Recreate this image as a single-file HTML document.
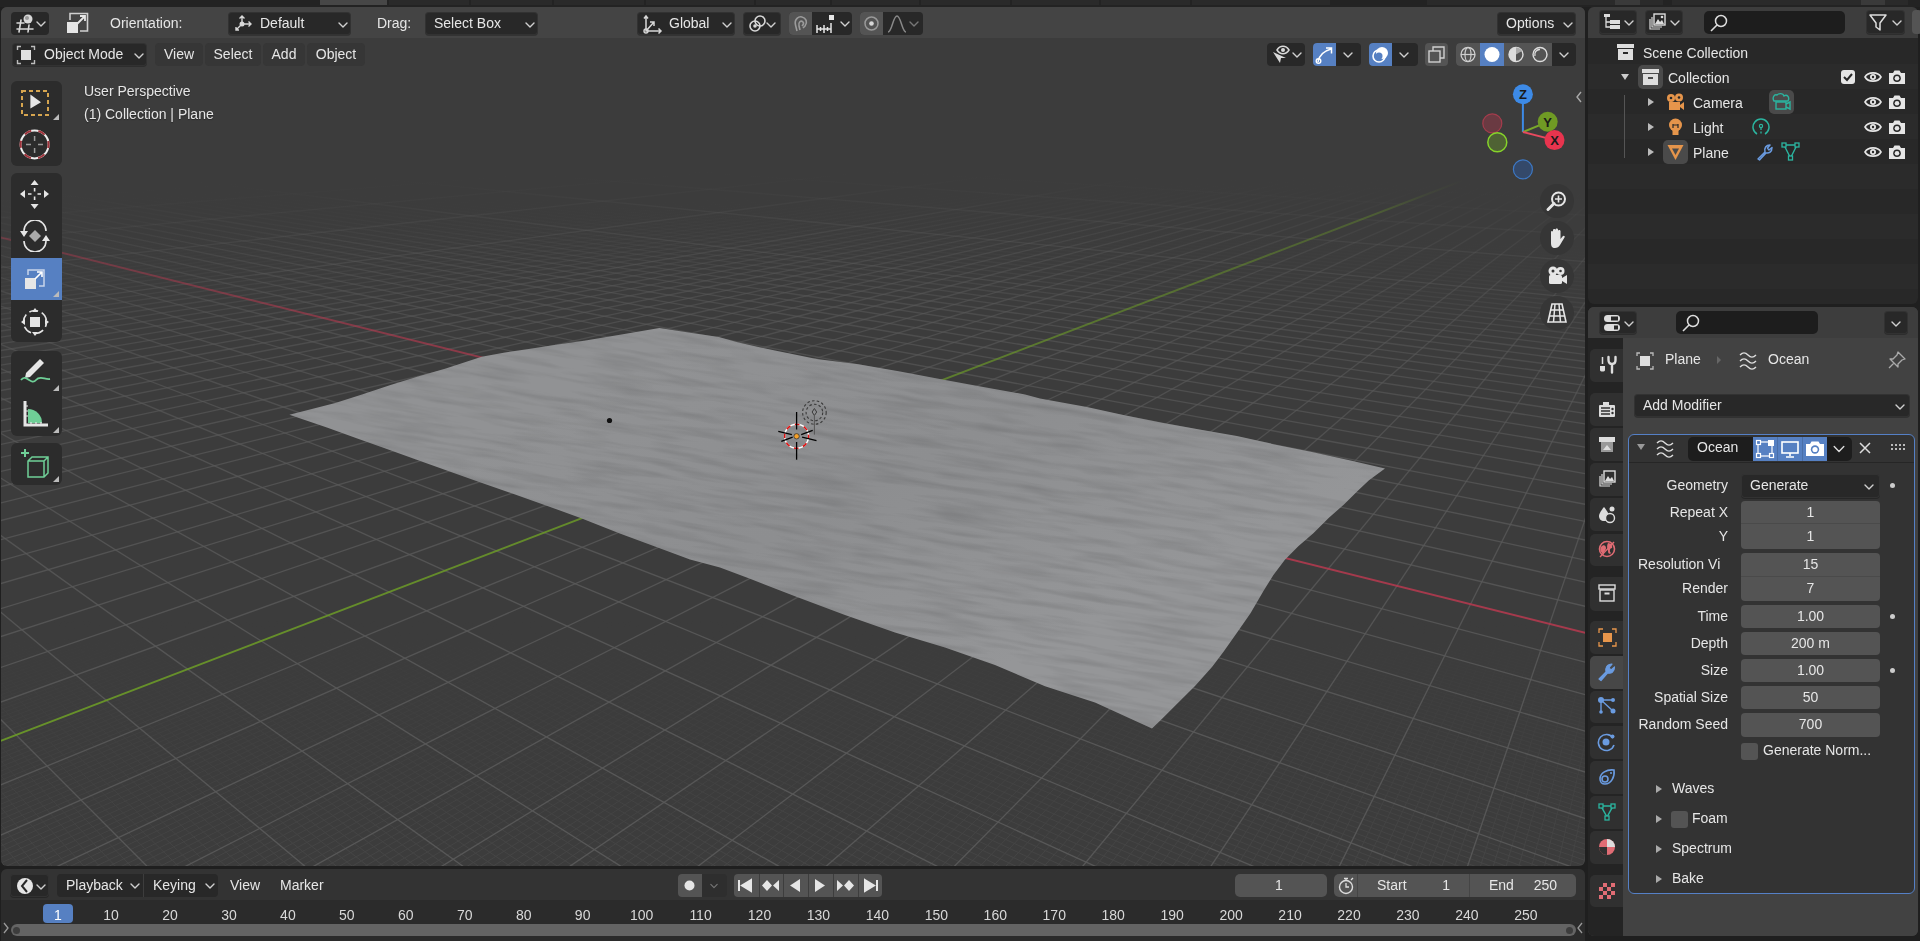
<!DOCTYPE html><html><head><meta charset="utf-8"><style>
*{box-sizing:border-box;margin:0;padding:0}
html,body{width:1920px;height:941px;overflow:hidden;background:#1f1f1f;font-family:"Liberation Sans",sans-serif;font-size:14px;color:#e6e6e6}
.a{position:absolute}
.t{white-space:nowrap;line-height:20px;height:20px;transform:translateZ(0)}
</style></head><body><div class="a" style="left:0px;top:0px;width:1920px;height:7px;background:#232323;border-radius:0px;"></div><div class="a" style="left:320px;top:0px;width:67px;height:5px;background:#474747;border-radius:0px;"></div><div class="a" style="left:389px;top:0px;width:80px;height:5px;background:#2a2a2a;border-radius:0px;"></div><div class="a" style="left:471px;top:0px;width:81px;height:5px;background:#2a2a2a;border-radius:0px;"></div><div class="a" style="left:554px;top:0px;width:90px;height:5px;background:#2a2a2a;border-radius:0px;"></div><div class="a" style="left:646px;top:0px;width:108px;height:5px;background:#2a2a2a;border-radius:0px;"></div><div class="a" style="left:756px;top:0px;width:74px;height:5px;background:#2a2a2a;border-radius:0px;"></div><div class="a" style="left:832px;top:0px;width:87px;height:5px;background:#2a2a2a;border-radius:0px;"></div><div class="a" style="left:921px;top:0px;width:89px;height:5px;background:#2a2a2a;border-radius:0px;"></div><div class="a" style="left:1012px;top:0px;width:87px;height:5px;background:#2a2a2a;border-radius:0px;"></div><div class="a" style="left:1101px;top:0px;width:89px;height:5px;background:#2a2a2a;border-radius:0px;"></div><div class="a" style="left:1192px;top:0px;width:138px;height:5px;background:#2a2a2a;border-radius:0px;"></div><div class="a" style="left:1427px;top:0px;width:236px;height:5px;background:#2a2a2a;border-radius:0px;"></div><div class="a" style="left:1615px;top:0px;width:25px;height:5px;background:#3a3a3a;border-radius:0px;"></div><div class="a" style="left:1672px;top:0px;width:236px;height:5px;background:#2a2a2a;border-radius:0px;"></div><div class="a" style="left:1861px;top:0px;width:24px;height:5px;background:#3a3a3a;border-radius:0px;"></div><div class="a" style="left:1px;top:7px;width:1584px;height:859px;background:#3c3c3c;border-radius:6px;overflow:hidden"><div class="a" style="left:-1px;top:-7px;width:1920px;height:941px"><svg width="1920" height="941" style="position:absolute;left:0;top:0"><defs><linearGradient id="g1" gradientUnits="userSpaceOnUse" x1="-48.0" y1="204.9" x2="837.1" y2="141.0"><stop offset="0.000" stop-color="#585858" stop-opacity="0.022"/><stop offset="0.221" stop-color="#585858" stop-opacity="0.008"/><stop offset="0.398" stop-color="#585858" stop-opacity="0.000"/><stop offset="0.544" stop-color="#585858" stop-opacity="0.000"/><stop offset="0.665" stop-color="#585858" stop-opacity="0.000"/><stop offset="0.768" stop-color="#585858" stop-opacity="0.000"/><stop offset="0.856" stop-color="#585858" stop-opacity="0.000"/><stop offset="0.933" stop-color="#585858" stop-opacity="0.000"/><stop offset="1.000" stop-color="#585858" stop-opacity="0.000"/></linearGradient><linearGradient id="g2" gradientUnits="userSpaceOnUse" x1="-46.4" y1="221.6" x2="905.0" y2="143.9"><stop offset="0.000" stop-color="#585858" stop-opacity="0.104"/><stop offset="0.235" stop-color="#585858" stop-opacity="0.069"/><stop offset="0.417" stop-color="#585858" stop-opacity="0.031"/><stop offset="0.563" stop-color="#585858" stop-opacity="0.004"/><stop offset="0.682" stop-color="#585858" stop-opacity="0.000"/><stop offset="0.781" stop-color="#585858" stop-opacity="0.000"/><stop offset="0.866" stop-color="#585858" stop-opacity="0.000"/><stop offset="0.938" stop-color="#585858" stop-opacity="0.000"/><stop offset="1.000" stop-color="#585858" stop-opacity="0.000"/></linearGradient><linearGradient id="g3" gradientUnits="userSpaceOnUse" x1="-48.9" y1="243.6" x2="979.3" y2="147.1"><stop offset="0.000" stop-color="#585858" stop-opacity="0.230"/><stop offset="0.252" stop-color="#585858" stop-opacity="0.179"/><stop offset="0.440" stop-color="#585858" stop-opacity="0.112"/><stop offset="0.586" stop-color="#585858" stop-opacity="0.048"/><stop offset="0.702" stop-color="#585858" stop-opacity="0.006"/><stop offset="0.797" stop-color="#585858" stop-opacity="0.000"/><stop offset="0.876" stop-color="#585858" stop-opacity="0.000"/><stop offset="0.943" stop-color="#585858" stop-opacity="0.000"/><stop offset="1.000" stop-color="#585858" stop-opacity="0.000"/></linearGradient><linearGradient id="g4" gradientUnits="userSpaceOnUse" x1="-49.5" y1="248.8" x2="995.1" y2="147.7"><stop offset="0.000" stop-color="#585858" stop-opacity="0.014"/><stop offset="0.256" stop-color="#585858" stop-opacity="0.002"/><stop offset="0.446" stop-color="#585858" stop-opacity="0.000"/><stop offset="0.591" stop-color="#585858" stop-opacity="0.000"/><stop offset="0.707" stop-color="#585858" stop-opacity="0.000"/><stop offset="0.801" stop-color="#585858" stop-opacity="0.000"/><stop offset="0.879" stop-color="#585858" stop-opacity="0.000"/><stop offset="0.944" stop-color="#585858" stop-opacity="0.000"/><stop offset="1.000" stop-color="#585858" stop-opacity="0.000"/></linearGradient><linearGradient id="g5" gradientUnits="userSpaceOnUse" x1="-47.4" y1="251.3" x2="1003.1" y2="148.1"><stop offset="0.000" stop-color="#585858" stop-opacity="0.018"/><stop offset="0.258" stop-color="#585858" stop-opacity="0.003"/><stop offset="0.448" stop-color="#585858" stop-opacity="0.000"/><stop offset="0.594" stop-color="#585858" stop-opacity="0.000"/><stop offset="0.709" stop-color="#585858" stop-opacity="0.000"/><stop offset="0.802" stop-color="#585858" stop-opacity="0.000"/><stop offset="0.880" stop-color="#585858" stop-opacity="0.000"/><stop offset="0.945" stop-color="#585858" stop-opacity="0.000"/><stop offset="1.000" stop-color="#585858" stop-opacity="0.000"/></linearGradient><linearGradient id="g6" gradientUnits="userSpaceOnUse" x1="-45.2" y1="253.9" x2="1011.1" y2="148.4"><stop offset="0.000" stop-color="#585858" stop-opacity="0.023"/><stop offset="0.260" stop-color="#585858" stop-opacity="0.005"/><stop offset="0.450" stop-color="#585858" stop-opacity="0.000"/><stop offset="0.596" stop-color="#585858" stop-opacity="0.000"/><stop offset="0.711" stop-color="#585858" stop-opacity="0.000"/><stop offset="0.804" stop-color="#585858" stop-opacity="0.000"/><stop offset="0.881" stop-color="#585858" stop-opacity="0.000"/><stop offset="0.945" stop-color="#585858" stop-opacity="0.000"/><stop offset="1.000" stop-color="#585858" stop-opacity="0.000"/></linearGradient><linearGradient id="g7" gradientUnits="userSpaceOnUse" x1="-48.0" y1="257.1" x2="1019.3" y2="148.8"><stop offset="0.000" stop-color="#585858" stop-opacity="0.029"/><stop offset="0.262" stop-color="#585858" stop-opacity="0.007"/><stop offset="0.454" stop-color="#585858" stop-opacity="0.000"/><stop offset="0.599" stop-color="#585858" stop-opacity="0.000"/><stop offset="0.714" stop-color="#585858" stop-opacity="0.000"/><stop offset="0.806" stop-color="#585858" stop-opacity="0.000"/><stop offset="0.882" stop-color="#585858" stop-opacity="0.000"/><stop offset="0.946" stop-color="#585858" stop-opacity="0.000"/><stop offset="1.000" stop-color="#585858" stop-opacity="0.000"/></linearGradient><linearGradient id="g8" gradientUnits="userSpaceOnUse" x1="-45.8" y1="259.9" x2="1027.5" y2="149.1"><stop offset="0.000" stop-color="#585858" stop-opacity="0.037"/><stop offset="0.264" stop-color="#585858" stop-opacity="0.009"/><stop offset="0.456" stop-color="#585858" stop-opacity="0.001"/><stop offset="0.602" stop-color="#585858" stop-opacity="0.000"/><stop offset="0.716" stop-color="#585858" stop-opacity="0.000"/><stop offset="0.807" stop-color="#585858" stop-opacity="0.000"/><stop offset="0.883" stop-color="#585858" stop-opacity="0.000"/><stop offset="0.946" stop-color="#585858" stop-opacity="0.000"/><stop offset="1.000" stop-color="#585858" stop-opacity="0.000"/></linearGradient><linearGradient id="g9" gradientUnits="userSpaceOnUse" x1="-48.6" y1="263.2" x2="1035.8" y2="149.5"><stop offset="0.000" stop-color="#585858" stop-opacity="0.046"/><stop offset="0.267" stop-color="#585858" stop-opacity="0.013"/><stop offset="0.460" stop-color="#585858" stop-opacity="0.002"/><stop offset="0.605" stop-color="#585858" stop-opacity="0.000"/><stop offset="0.718" stop-color="#585858" stop-opacity="0.000"/><stop offset="0.810" stop-color="#585858" stop-opacity="0.000"/><stop offset="0.884" stop-color="#585858" stop-opacity="0.000"/><stop offset="0.947" stop-color="#585858" stop-opacity="0.000"/><stop offset="1.000" stop-color="#585858" stop-opacity="0.000"/></linearGradient><linearGradient id="g10" gradientUnits="userSpaceOnUse" x1="-46.3" y1="266.2" x2="1044.2" y2="149.8"><stop offset="0.000" stop-color="#585858" stop-opacity="0.056"/><stop offset="0.269" stop-color="#585858" stop-opacity="0.017"/><stop offset="0.462" stop-color="#585858" stop-opacity="0.003"/><stop offset="0.607" stop-color="#585858" stop-opacity="0.000"/><stop offset="0.721" stop-color="#585858" stop-opacity="0.000"/><stop offset="0.811" stop-color="#585858" stop-opacity="0.000"/><stop offset="0.886" stop-color="#585858" stop-opacity="0.000"/><stop offset="0.948" stop-color="#585858" stop-opacity="0.000"/><stop offset="1.000" stop-color="#585858" stop-opacity="0.000"/></linearGradient><linearGradient id="g11" gradientUnits="userSpaceOnUse" x1="-49.3" y1="269.8" x2="1052.7" y2="150.2"><stop offset="0.000" stop-color="#585858" stop-opacity="0.069"/><stop offset="0.272" stop-color="#585858" stop-opacity="0.022"/><stop offset="0.466" stop-color="#585858" stop-opacity="0.004"/><stop offset="0.611" stop-color="#585858" stop-opacity="0.000"/><stop offset="0.723" stop-color="#585858" stop-opacity="0.000"/><stop offset="0.813" stop-color="#585858" stop-opacity="0.000"/><stop offset="0.887" stop-color="#585858" stop-opacity="0.000"/><stop offset="0.948" stop-color="#585858" stop-opacity="0.000"/><stop offset="1.000" stop-color="#585858" stop-opacity="0.000"/></linearGradient><linearGradient id="g12" gradientUnits="userSpaceOnUse" x1="-46.9" y1="273.0" x2="1061.2" y2="150.6"><stop offset="0.000" stop-color="#585858" stop-opacity="0.377"/><stop offset="0.274" stop-color="#585858" stop-opacity="0.318"/><stop offset="0.468" stop-color="#585858" stop-opacity="0.229"/><stop offset="0.613" stop-color="#585858" stop-opacity="0.130"/><stop offset="0.726" stop-color="#585858" stop-opacity="0.046"/><stop offset="0.815" stop-color="#585858" stop-opacity="0.002"/><stop offset="0.888" stop-color="#585858" stop-opacity="0.000"/><stop offset="0.949" stop-color="#585858" stop-opacity="0.000"/><stop offset="1.000" stop-color="#585858" stop-opacity="0.000"/></linearGradient><linearGradient id="g13" gradientUnits="userSpaceOnUse" x1="-44.5" y1="276.3" x2="1069.9" y2="150.9"><stop offset="0.000" stop-color="#585858" stop-opacity="0.098"/><stop offset="0.276" stop-color="#585858" stop-opacity="0.034"/><stop offset="0.471" stop-color="#585858" stop-opacity="0.008"/><stop offset="0.616" stop-color="#585858" stop-opacity="0.001"/><stop offset="0.728" stop-color="#585858" stop-opacity="0.000"/><stop offset="0.817" stop-color="#585858" stop-opacity="0.000"/><stop offset="0.889" stop-color="#585858" stop-opacity="0.000"/><stop offset="0.949" stop-color="#585858" stop-opacity="0.000"/><stop offset="1.000" stop-color="#585858" stop-opacity="0.000"/></linearGradient><linearGradient id="g14" gradientUnits="userSpaceOnUse" x1="-47.6" y1="280.3" x2="1078.6" y2="151.3"><stop offset="0.000" stop-color="#585858" stop-opacity="0.118"/><stop offset="0.279" stop-color="#585858" stop-opacity="0.043"/><stop offset="0.475" stop-color="#585858" stop-opacity="0.011"/><stop offset="0.620" stop-color="#585858" stop-opacity="0.001"/><stop offset="0.731" stop-color="#585858" stop-opacity="0.000"/><stop offset="0.819" stop-color="#585858" stop-opacity="0.000"/><stop offset="0.891" stop-color="#585858" stop-opacity="0.000"/><stop offset="0.950" stop-color="#585858" stop-opacity="0.000"/><stop offset="1.000" stop-color="#585858" stop-opacity="0.000"/></linearGradient><linearGradient id="g15" gradientUnits="userSpaceOnUse" x1="-45.0" y1="283.8" x2="1087.4" y2="151.7"><stop offset="0.000" stop-color="#585858" stop-opacity="0.138"/><stop offset="0.282" stop-color="#585858" stop-opacity="0.053"/><stop offset="0.478" stop-color="#585858" stop-opacity="0.015"/><stop offset="0.623" stop-color="#585858" stop-opacity="0.002"/><stop offset="0.733" stop-color="#585858" stop-opacity="0.000"/><stop offset="0.821" stop-color="#585858" stop-opacity="0.000"/><stop offset="0.892" stop-color="#585858" stop-opacity="0.000"/><stop offset="0.951" stop-color="#585858" stop-opacity="0.000"/><stop offset="1.000" stop-color="#585858" stop-opacity="0.000"/></linearGradient><linearGradient id="g16" gradientUnits="userSpaceOnUse" x1="-48.3" y1="288.2" x2="1096.4" y2="152.1"><stop offset="0.000" stop-color="#585858" stop-opacity="0.162"/><stop offset="0.285" stop-color="#585858" stop-opacity="0.065"/><stop offset="0.482" stop-color="#585858" stop-opacity="0.019"/><stop offset="0.626" stop-color="#585858" stop-opacity="0.003"/><stop offset="0.736" stop-color="#585858" stop-opacity="0.000"/><stop offset="0.823" stop-color="#585858" stop-opacity="0.000"/><stop offset="0.893" stop-color="#585858" stop-opacity="0.000"/><stop offset="0.951" stop-color="#585858" stop-opacity="0.000"/><stop offset="1.000" stop-color="#585858" stop-opacity="0.000"/></linearGradient><linearGradient id="g17" gradientUnits="userSpaceOnUse" x1="-45.6" y1="292.0" x2="1105.4" y2="152.4"><stop offset="0.000" stop-color="#585858" stop-opacity="0.188"/><stop offset="0.288" stop-color="#585858" stop-opacity="0.078"/><stop offset="0.485" stop-color="#585858" stop-opacity="0.025"/><stop offset="0.629" stop-color="#585858" stop-opacity="0.005"/><stop offset="0.739" stop-color="#585858" stop-opacity="0.000"/><stop offset="0.825" stop-color="#585858" stop-opacity="0.000"/><stop offset="0.895" stop-color="#585858" stop-opacity="0.000"/><stop offset="0.952" stop-color="#585858" stop-opacity="0.000"/><stop offset="1.000" stop-color="#585858" stop-opacity="0.000"/></linearGradient><linearGradient id="g18" gradientUnits="userSpaceOnUse" x1="-49.0" y1="296.7" x2="1114.5" y2="152.8"><stop offset="0.000" stop-color="#585858" stop-opacity="0.218"/><stop offset="0.291" stop-color="#585858" stop-opacity="0.094"/><stop offset="0.489" stop-color="#585858" stop-opacity="0.031"/><stop offset="0.633" stop-color="#585858" stop-opacity="0.007"/><stop offset="0.742" stop-color="#585858" stop-opacity="0.001"/><stop offset="0.827" stop-color="#585858" stop-opacity="0.000"/><stop offset="0.896" stop-color="#585858" stop-opacity="0.000"/><stop offset="0.953" stop-color="#585858" stop-opacity="0.000"/><stop offset="1.000" stop-color="#585858" stop-opacity="0.000"/></linearGradient><linearGradient id="g19" gradientUnits="userSpaceOnUse" x1="-46.3" y1="300.8" x2="1123.7" y2="153.2"><stop offset="0.000" stop-color="#585858" stop-opacity="0.248"/><stop offset="0.294" stop-color="#585858" stop-opacity="0.110"/><stop offset="0.493" stop-color="#585858" stop-opacity="0.039"/><stop offset="0.636" stop-color="#585858" stop-opacity="0.009"/><stop offset="0.744" stop-color="#585858" stop-opacity="0.001"/><stop offset="0.829" stop-color="#585858" stop-opacity="0.000"/><stop offset="0.897" stop-color="#585858" stop-opacity="0.000"/><stop offset="0.953" stop-color="#585858" stop-opacity="0.000"/><stop offset="1.000" stop-color="#585858" stop-opacity="0.000"/></linearGradient><linearGradient id="g20" gradientUnits="userSpaceOnUse" x1="-49.8" y1="305.9" x2="1133.0" y2="153.6"><stop offset="0.000" stop-color="#585858" stop-opacity="0.284"/><stop offset="0.297" stop-color="#585858" stop-opacity="0.131"/><stop offset="0.497" stop-color="#585858" stop-opacity="0.048"/><stop offset="0.640" stop-color="#585858" stop-opacity="0.013"/><stop offset="0.748" stop-color="#585858" stop-opacity="0.002"/><stop offset="0.832" stop-color="#585858" stop-opacity="0.000"/><stop offset="0.899" stop-color="#585858" stop-opacity="0.000"/><stop offset="0.954" stop-color="#585858" stop-opacity="0.000"/><stop offset="1.000" stop-color="#585858" stop-opacity="0.000"/></linearGradient><linearGradient id="g21" gradientUnits="userSpaceOnUse" x1="-47.0" y1="310.4" x2="1142.4" y2="154.0"><stop offset="0.000" stop-color="#585858" stop-opacity="0.319"/><stop offset="0.300" stop-color="#585858" stop-opacity="0.152"/><stop offset="0.501" stop-color="#585858" stop-opacity="0.058"/><stop offset="0.643" stop-color="#585858" stop-opacity="0.016"/><stop offset="0.750" stop-color="#585858" stop-opacity="0.003"/><stop offset="0.834" stop-color="#585858" stop-opacity="0.000"/><stop offset="0.900" stop-color="#585858" stop-opacity="0.000"/><stop offset="0.955" stop-color="#585858" stop-opacity="0.000"/><stop offset="1.000" stop-color="#585858" stop-opacity="0.000"/></linearGradient><linearGradient id="g22" gradientUnits="userSpaceOnUse" x1="-44.1" y1="315.0" x2="1151.9" y2="154.4"><stop offset="0.000" stop-color="#585858" stop-opacity="0.506"/><stop offset="0.304" stop-color="#585858" stop-opacity="0.456"/><stop offset="0.504" stop-color="#585858" stop-opacity="0.359"/><stop offset="0.647" stop-color="#585858" stop-opacity="0.234"/><stop offset="0.753" stop-color="#585858" stop-opacity="0.111"/><stop offset="0.836" stop-color="#585858" stop-opacity="0.024"/><stop offset="0.901" stop-color="#585858" stop-opacity="0.000"/><stop offset="0.955" stop-color="#585858" stop-opacity="0.000"/><stop offset="1.000" stop-color="#585858" stop-opacity="0.000"/></linearGradient><linearGradient id="g23" gradientUnits="userSpaceOnUse" x1="-47.8" y1="320.8" x2="1161.5" y2="154.8"><stop offset="0.000" stop-color="#585858" stop-opacity="0.396"/><stop offset="0.307" stop-color="#585858" stop-opacity="0.204"/><stop offset="0.509" stop-color="#585858" stop-opacity="0.084"/><stop offset="0.651" stop-color="#585858" stop-opacity="0.026"/><stop offset="0.757" stop-color="#585858" stop-opacity="0.005"/><stop offset="0.838" stop-color="#585858" stop-opacity="0.000"/><stop offset="0.903" stop-color="#585858" stop-opacity="0.000"/><stop offset="0.956" stop-color="#585858" stop-opacity="0.000"/><stop offset="1.000" stop-color="#585858" stop-opacity="0.000"/></linearGradient><linearGradient id="g24" gradientUnits="userSpaceOnUse" x1="-44.7" y1="325.9" x2="1171.2" y2="155.3"><stop offset="0.000" stop-color="#585858" stop-opacity="0.434"/><stop offset="0.311" stop-color="#585858" stop-opacity="0.233"/><stop offset="0.513" stop-color="#585858" stop-opacity="0.100"/><stop offset="0.654" stop-color="#585858" stop-opacity="0.032"/><stop offset="0.759" stop-color="#585858" stop-opacity="0.007"/><stop offset="0.840" stop-color="#585858" stop-opacity="0.001"/><stop offset="0.904" stop-color="#585858" stop-opacity="0.000"/><stop offset="0.957" stop-color="#585858" stop-opacity="0.000"/><stop offset="1.000" stop-color="#585858" stop-opacity="0.000"/></linearGradient><linearGradient id="g25" gradientUnits="userSpaceOnUse" x1="-48.6" y1="332.2" x2="1181.0" y2="155.7"><stop offset="0.000" stop-color="#585858" stop-opacity="0.474"/><stop offset="0.315" stop-color="#585858" stop-opacity="0.267"/><stop offset="0.518" stop-color="#585858" stop-opacity="0.118"/><stop offset="0.659" stop-color="#585858" stop-opacity="0.040"/><stop offset="0.763" stop-color="#585858" stop-opacity="0.009"/><stop offset="0.843" stop-color="#585858" stop-opacity="0.001"/><stop offset="0.906" stop-color="#585858" stop-opacity="0.000"/><stop offset="0.958" stop-color="#585858" stop-opacity="0.000"/><stop offset="1.000" stop-color="#585858" stop-opacity="0.000"/></linearGradient><linearGradient id="g26" gradientUnits="userSpaceOnUse" x1="-45.4" y1="337.8" x2="1190.9" y2="156.1"><stop offset="0.000" stop-color="#585858" stop-opacity="0.509"/><stop offset="0.319" stop-color="#585858" stop-opacity="0.300"/><stop offset="0.522" stop-color="#585858" stop-opacity="0.138"/><stop offset="0.662" stop-color="#585858" stop-opacity="0.049"/><stop offset="0.766" stop-color="#585858" stop-opacity="0.012"/><stop offset="0.845" stop-color="#585858" stop-opacity="0.001"/><stop offset="0.908" stop-color="#585858" stop-opacity="0.000"/><stop offset="0.958" stop-color="#585858" stop-opacity="0.000"/><stop offset="1.000" stop-color="#585858" stop-opacity="0.000"/></linearGradient><linearGradient id="g27" gradientUnits="userSpaceOnUse" x1="-49.6" y1="344.8" x2="1200.9" y2="156.5"><stop offset="0.000" stop-color="#585858" stop-opacity="0.541"/><stop offset="0.323" stop-color="#585858" stop-opacity="0.338"/><stop offset="0.527" stop-color="#585858" stop-opacity="0.162"/><stop offset="0.667" stop-color="#585858" stop-opacity="0.060"/><stop offset="0.770" stop-color="#585858" stop-opacity="0.015"/><stop offset="0.848" stop-color="#585858" stop-opacity="0.002"/><stop offset="0.909" stop-color="#585858" stop-opacity="0.000"/><stop offset="0.959" stop-color="#585858" stop-opacity="0.000"/><stop offset="1.000" stop-color="#585858" stop-opacity="0.000"/></linearGradient><linearGradient id="g28" gradientUnits="userSpaceOnUse" x1="-46.2" y1="350.9" x2="1211.0" y2="157.0"><stop offset="0.000" stop-color="#585858" stop-opacity="0.562"/><stop offset="0.327" stop-color="#585858" stop-opacity="0.375"/><stop offset="0.531" stop-color="#585858" stop-opacity="0.186"/><stop offset="0.671" stop-color="#585858" stop-opacity="0.071"/><stop offset="0.773" stop-color="#585858" stop-opacity="0.019"/><stop offset="0.850" stop-color="#585858" stop-opacity="0.003"/><stop offset="0.911" stop-color="#585858" stop-opacity="0.000"/><stop offset="0.960" stop-color="#585858" stop-opacity="0.000"/><stop offset="1.000" stop-color="#585858" stop-opacity="0.000"/></linearGradient><linearGradient id="g29" gradientUnits="userSpaceOnUse" x1="-42.7" y1="357.4" x2="1221.3" y2="157.4"><stop offset="0.000" stop-color="#585858" stop-opacity="0.573"/><stop offset="0.331" stop-color="#585858" stop-opacity="0.412"/><stop offset="0.536" stop-color="#585858" stop-opacity="0.213"/><stop offset="0.675" stop-color="#585858" stop-opacity="0.085"/><stop offset="0.776" stop-color="#585858" stop-opacity="0.024"/><stop offset="0.852" stop-color="#585858" stop-opacity="0.003"/><stop offset="0.912" stop-color="#585858" stop-opacity="0.000"/><stop offset="0.960" stop-color="#585858" stop-opacity="0.000"/><stop offset="1.000" stop-color="#585858" stop-opacity="0.000"/></linearGradient><linearGradient id="g30" gradientUnits="userSpaceOnUse" x1="-47.1" y1="365.4" x2="1231.6" y2="157.8"><stop offset="0.000" stop-color="#585858" stop-opacity="0.584"/><stop offset="0.336" stop-color="#585858" stop-opacity="0.453"/><stop offset="0.541" stop-color="#585858" stop-opacity="0.245"/><stop offset="0.680" stop-color="#585858" stop-opacity="0.101"/><stop offset="0.780" stop-color="#585858" stop-opacity="0.030"/><stop offset="0.855" stop-color="#585858" stop-opacity="0.005"/><stop offset="0.914" stop-color="#585858" stop-opacity="0.000"/><stop offset="0.961" stop-color="#585858" stop-opacity="0.000"/><stop offset="1.000" stop-color="#585858" stop-opacity="0.000"/></linearGradient><linearGradient id="g31" gradientUnits="userSpaceOnUse" x1="-43.5" y1="372.6" x2="1242.1" y2="158.3"><stop offset="0.000" stop-color="#585858" stop-opacity="0.595"/><stop offset="0.340" stop-color="#585858" stop-opacity="0.490"/><stop offset="0.546" stop-color="#585858" stop-opacity="0.276"/><stop offset="0.684" stop-color="#585858" stop-opacity="0.118"/><stop offset="0.783" stop-color="#585858" stop-opacity="0.036"/><stop offset="0.857" stop-color="#585858" stop-opacity="0.006"/><stop offset="0.915" stop-color="#585858" stop-opacity="0.000"/><stop offset="0.962" stop-color="#585858" stop-opacity="0.000"/><stop offset="1.000" stop-color="#585858" stop-opacity="0.000"/></linearGradient><linearGradient id="g32" gradientUnits="userSpaceOnUse" x1="-48.1" y1="381.5" x2="1252.7" y2="158.7"><stop offset="0.000" stop-color="#585858" stop-opacity="0.606"/><stop offset="0.346" stop-color="#585858" stop-opacity="0.555"/><stop offset="0.552" stop-color="#585858" stop-opacity="0.477"/><stop offset="0.689" stop-color="#585858" stop-opacity="0.343"/><stop offset="0.787" stop-color="#585858" stop-opacity="0.189"/><stop offset="0.860" stop-color="#585858" stop-opacity="0.062"/><stop offset="0.917" stop-color="#585858" stop-opacity="0.002"/><stop offset="0.963" stop-color="#585858" stop-opacity="0.000"/><stop offset="1.000" stop-color="#585858" stop-opacity="0.000"/></linearGradient><linearGradient id="g33" gradientUnits="userSpaceOnUse" x1="-44.3" y1="389.5" x2="1263.4" y2="159.2"><stop offset="0.000" stop-color="#585858" stop-opacity="0.618"/><stop offset="0.350" stop-color="#585858" stop-opacity="0.554"/><stop offset="0.557" stop-color="#585858" stop-opacity="0.348"/><stop offset="0.694" stop-color="#585858" stop-opacity="0.160"/><stop offset="0.790" stop-color="#585858" stop-opacity="0.053"/><stop offset="0.863" stop-color="#585858" stop-opacity="0.010"/><stop offset="0.919" stop-color="#585858" stop-opacity="0.000"/><stop offset="0.964" stop-color="#585858" stop-opacity="0.000"/><stop offset="1.000" stop-color="#585858" stop-opacity="0.000"/></linearGradient><linearGradient id="g34" gradientUnits="userSpaceOnUse" x1="-49.2" y1="399.6" x2="1274.3" y2="159.7"><stop offset="0.000" stop-color="#585858" stop-opacity="0.630"/><stop offset="0.356" stop-color="#585858" stop-opacity="0.574"/><stop offset="0.563" stop-color="#585858" stop-opacity="0.387"/><stop offset="0.699" stop-color="#585858" stop-opacity="0.185"/><stop offset="0.795" stop-color="#585858" stop-opacity="0.063"/><stop offset="0.866" stop-color="#585858" stop-opacity="0.013"/><stop offset="0.921" stop-color="#585858" stop-opacity="0.000"/><stop offset="0.964" stop-color="#585858" stop-opacity="0.000"/><stop offset="1.000" stop-color="#585858" stop-opacity="0.000"/></linearGradient><linearGradient id="g35" gradientUnits="userSpaceOnUse" x1="-45.1" y1="408.6" x2="1285.2" y2="160.1"><stop offset="0.000" stop-color="#585858" stop-opacity="0.643"/><stop offset="0.361" stop-color="#585858" stop-opacity="0.584"/><stop offset="0.569" stop-color="#585858" stop-opacity="0.423"/><stop offset="0.704" stop-color="#585858" stop-opacity="0.211"/><stop offset="0.798" stop-color="#585858" stop-opacity="0.075"/><stop offset="0.868" stop-color="#585858" stop-opacity="0.016"/><stop offset="0.922" stop-color="#585858" stop-opacity="0.000"/><stop offset="0.965" stop-color="#585858" stop-opacity="0.000"/><stop offset="1.000" stop-color="#585858" stop-opacity="0.000"/></linearGradient><linearGradient id="g36" gradientUnits="userSpaceOnUse" x1="-40.9" y1="418.1" x2="1296.3" y2="160.6"><stop offset="0.000" stop-color="#585858" stop-opacity="0.655"/><stop offset="0.366" stop-color="#585858" stop-opacity="0.594"/><stop offset="0.574" stop-color="#585858" stop-opacity="0.458"/><stop offset="0.708" stop-color="#585858" stop-opacity="0.239"/><stop offset="0.802" stop-color="#585858" stop-opacity="0.088"/><stop offset="0.871" stop-color="#585858" stop-opacity="0.020"/><stop offset="0.924" stop-color="#585858" stop-opacity="0.001"/><stop offset="0.966" stop-color="#585858" stop-opacity="0.000"/><stop offset="1.000" stop-color="#585858" stop-opacity="0.000"/></linearGradient><linearGradient id="g37" gradientUnits="userSpaceOnUse" x1="-46.2" y1="430.1" x2="1307.5" y2="161.1"><stop offset="0.000" stop-color="#585858" stop-opacity="0.669"/><stop offset="0.373" stop-color="#585858" stop-opacity="0.605"/><stop offset="0.581" stop-color="#585858" stop-opacity="0.491"/><stop offset="0.714" stop-color="#585858" stop-opacity="0.271"/><stop offset="0.806" stop-color="#585858" stop-opacity="0.103"/><stop offset="0.874" stop-color="#585858" stop-opacity="0.024"/><stop offset="0.926" stop-color="#585858" stop-opacity="0.001"/><stop offset="0.967" stop-color="#585858" stop-opacity="0.000"/><stop offset="1.000" stop-color="#585858" stop-opacity="0.000"/></linearGradient><linearGradient id="g38" gradientUnits="userSpaceOnUse" x1="-41.6" y1="440.9" x2="1318.9" y2="161.6"><stop offset="0.000" stop-color="#585858" stop-opacity="0.682"/><stop offset="0.379" stop-color="#585858" stop-opacity="0.615"/><stop offset="0.587" stop-color="#585858" stop-opacity="0.516"/><stop offset="0.719" stop-color="#585858" stop-opacity="0.302"/><stop offset="0.810" stop-color="#585858" stop-opacity="0.120"/><stop offset="0.877" stop-color="#585858" stop-opacity="0.029"/><stop offset="0.928" stop-color="#585858" stop-opacity="0.001"/><stop offset="0.968" stop-color="#585858" stop-opacity="0.000"/><stop offset="1.000" stop-color="#585858" stop-opacity="0.000"/></linearGradient><linearGradient id="g39" gradientUnits="userSpaceOnUse" x1="-47.3" y1="454.6" x2="1330.3" y2="162.1"><stop offset="0.000" stop-color="#585858" stop-opacity="0.697"/><stop offset="0.386" stop-color="#585858" stop-opacity="0.627"/><stop offset="0.595" stop-color="#585858" stop-opacity="0.533"/><stop offset="0.725" stop-color="#585858" stop-opacity="0.336"/><stop offset="0.815" stop-color="#585858" stop-opacity="0.139"/><stop offset="0.880" stop-color="#585858" stop-opacity="0.035"/><stop offset="0.930" stop-color="#585858" stop-opacity="0.002"/><stop offset="0.969" stop-color="#585858" stop-opacity="0.000"/><stop offset="1.000" stop-color="#585858" stop-opacity="0.000"/></linearGradient><linearGradient id="g40" gradientUnits="userSpaceOnUse" x1="-42.5" y1="466.9" x2="1342.0" y2="162.6"><stop offset="0.000" stop-color="#585858" stop-opacity="0.711"/><stop offset="0.392" stop-color="#585858" stop-opacity="0.638"/><stop offset="0.601" stop-color="#585858" stop-opacity="0.540"/><stop offset="0.731" stop-color="#585858" stop-opacity="0.368"/><stop offset="0.819" stop-color="#585858" stop-opacity="0.159"/><stop offset="0.883" stop-color="#585858" stop-opacity="0.042"/><stop offset="0.931" stop-color="#585858" stop-opacity="0.003"/><stop offset="0.969" stop-color="#585858" stop-opacity="0.000"/><stop offset="1.000" stop-color="#585858" stop-opacity="0.000"/></linearGradient><linearGradient id="g41" gradientUnits="userSpaceOnUse" x1="-48.6" y1="482.7" x2="1353.7" y2="163.1"><stop offset="0.000" stop-color="#585858" stop-opacity="0.727"/><stop offset="0.401" stop-color="#585858" stop-opacity="0.650"/><stop offset="0.609" stop-color="#585858" stop-opacity="0.548"/><stop offset="0.737" stop-color="#585858" stop-opacity="0.400"/><stop offset="0.824" stop-color="#585858" stop-opacity="0.181"/><stop offset="0.886" stop-color="#585858" stop-opacity="0.050"/><stop offset="0.933" stop-color="#585858" stop-opacity="0.004"/><stop offset="0.970" stop-color="#585858" stop-opacity="0.000"/><stop offset="1.000" stop-color="#585858" stop-opacity="0.000"/></linearGradient><linearGradient id="g42" gradientUnits="userSpaceOnUse" x1="-43.5" y1="497.0" x2="1365.6" y2="163.6"><stop offset="0.000" stop-color="#585858" stop-opacity="0.742"/><stop offset="0.407" stop-color="#585858" stop-opacity="0.662"/><stop offset="0.616" stop-color="#585858" stop-opacity="0.555"/><stop offset="0.743" stop-color="#585858" stop-opacity="0.437"/><stop offset="0.828" stop-color="#585858" stop-opacity="0.265"/><stop offset="0.889" stop-color="#585858" stop-opacity="0.106"/><stop offset="0.935" stop-color="#585858" stop-opacity="0.012"/><stop offset="0.971" stop-color="#585858" stop-opacity="0.000"/><stop offset="1.000" stop-color="#585858" stop-opacity="0.000"/></linearGradient><linearGradient id="g43" gradientUnits="userSpaceOnUse" x1="-37.9" y1="512.4" x2="1377.6" y2="164.1"><stop offset="0.000" stop-color="#585858" stop-opacity="0.758"/><stop offset="0.415" stop-color="#585858" stop-opacity="0.673"/><stop offset="0.623" stop-color="#585858" stop-opacity="0.561"/><stop offset="0.748" stop-color="#585858" stop-opacity="0.443"/><stop offset="0.832" stop-color="#585858" stop-opacity="0.226"/><stop offset="0.892" stop-color="#585858" stop-opacity="0.068"/><stop offset="0.937" stop-color="#585858" stop-opacity="0.006"/><stop offset="0.972" stop-color="#585858" stop-opacity="0.000"/><stop offset="1.000" stop-color="#585858" stop-opacity="0.000"/></linearGradient><linearGradient id="g44" gradientUnits="userSpaceOnUse" x1="-44.6" y1="532.2" x2="1389.8" y2="164.6"><stop offset="0.000" stop-color="#585858" stop-opacity="0.775"/><stop offset="0.424" stop-color="#585858" stop-opacity="0.687"/><stop offset="0.632" stop-color="#585858" stop-opacity="0.570"/><stop offset="0.756" stop-color="#585858" stop-opacity="0.453"/><stop offset="0.837" stop-color="#585858" stop-opacity="0.250"/><stop offset="0.896" stop-color="#585858" stop-opacity="0.079"/><stop offset="0.939" stop-color="#585858" stop-opacity="0.007"/><stop offset="0.973" stop-color="#585858" stop-opacity="0.000"/><stop offset="1.000" stop-color="#585858" stop-opacity="0.000"/></linearGradient><linearGradient id="g45" gradientUnits="userSpaceOnUse" x1="-38.7" y1="550.3" x2="1402.1" y2="165.1"><stop offset="0.000" stop-color="#585858" stop-opacity="0.791"/><stop offset="0.432" stop-color="#585858" stop-opacity="0.699"/><stop offset="0.640" stop-color="#585858" stop-opacity="0.576"/><stop offset="0.762" stop-color="#585858" stop-opacity="0.459"/><stop offset="0.842" stop-color="#585858" stop-opacity="0.271"/><stop offset="0.899" stop-color="#585858" stop-opacity="0.090"/><stop offset="0.941" stop-color="#585858" stop-opacity="0.009"/><stop offset="0.974" stop-color="#585858" stop-opacity="0.000"/><stop offset="1.000" stop-color="#585858" stop-opacity="0.000"/></linearGradient><linearGradient id="g46" gradientUnits="userSpaceOnUse" x1="-46.0" y1="573.7" x2="1414.6" y2="165.7"><stop offset="0.000" stop-color="#585858" stop-opacity="0.808"/><stop offset="0.443" stop-color="#585858" stop-opacity="0.713"/><stop offset="0.649" stop-color="#585858" stop-opacity="0.585"/><stop offset="0.769" stop-color="#585858" stop-opacity="0.467"/><stop offset="0.847" stop-color="#585858" stop-opacity="0.289"/><stop offset="0.903" stop-color="#585858" stop-opacity="0.102"/><stop offset="0.943" stop-color="#585858" stop-opacity="0.011"/><stop offset="0.975" stop-color="#585858" stop-opacity="0.000"/><stop offset="1.000" stop-color="#585858" stop-opacity="0.000"/></linearGradient><linearGradient id="g47" gradientUnits="userSpaceOnUse" x1="-39.5" y1="595.4" x2="1427.2" y2="166.2"><stop offset="0.000" stop-color="#585858" stop-opacity="0.825"/><stop offset="0.452" stop-color="#585858" stop-opacity="0.725"/><stop offset="0.658" stop-color="#585858" stop-opacity="0.592"/><stop offset="0.776" stop-color="#585858" stop-opacity="0.473"/><stop offset="0.852" stop-color="#585858" stop-opacity="0.299"/><stop offset="0.906" stop-color="#585858" stop-opacity="0.113"/><stop offset="0.945" stop-color="#585858" stop-opacity="0.013"/><stop offset="0.976" stop-color="#585858" stop-opacity="0.000"/><stop offset="1.000" stop-color="#585858" stop-opacity="0.000"/></linearGradient><linearGradient id="g48" gradientUnits="userSpaceOnUse" x1="-47.7" y1="623.6" x2="1440.0" y2="166.7"><stop offset="0.000" stop-color="#585858" stop-opacity="0.843"/><stop offset="0.463" stop-color="#585858" stop-opacity="0.740"/><stop offset="0.668" stop-color="#585858" stop-opacity="0.600"/><stop offset="0.784" stop-color="#585858" stop-opacity="0.480"/><stop offset="0.858" stop-color="#585858" stop-opacity="0.306"/><stop offset="0.910" stop-color="#585858" stop-opacity="0.125"/><stop offset="0.948" stop-color="#585858" stop-opacity="0.016"/><stop offset="0.977" stop-color="#585858" stop-opacity="0.000"/><stop offset="1.000" stop-color="#585858" stop-opacity="0.000"/></linearGradient><linearGradient id="g49" gradientUnits="userSpaceOnUse" x1="-40.6" y1="650.0" x2="1453.0" y2="167.3"><stop offset="0.000" stop-color="#585858" stop-opacity="0.860"/><stop offset="0.473" stop-color="#585858" stop-opacity="0.752"/><stop offset="0.677" stop-color="#585858" stop-opacity="0.607"/><stop offset="0.791" stop-color="#585858" stop-opacity="0.486"/><stop offset="0.863" stop-color="#585858" stop-opacity="0.311"/><stop offset="0.913" stop-color="#585858" stop-opacity="0.133"/><stop offset="0.950" stop-color="#585858" stop-opacity="0.018"/><stop offset="0.978" stop-color="#585858" stop-opacity="0.000"/><stop offset="1.000" stop-color="#585858" stop-opacity="0.000"/></linearGradient><linearGradient id="g50" gradientUnits="userSpaceOnUse" x1="-49.7" y1="684.7" x2="1466.1" y2="167.9"><stop offset="0.000" stop-color="#585858" stop-opacity="0.878"/><stop offset="0.487" stop-color="#585858" stop-opacity="0.767"/><stop offset="0.689" stop-color="#585858" stop-opacity="0.615"/><stop offset="0.799" stop-color="#585858" stop-opacity="0.492"/><stop offset="0.869" stop-color="#585858" stop-opacity="0.318"/><stop offset="0.917" stop-color="#585858" stop-opacity="0.139"/><stop offset="0.952" stop-color="#585858" stop-opacity="0.021"/><stop offset="0.979" stop-color="#585858" stop-opacity="0.000"/><stop offset="1.000" stop-color="#585858" stop-opacity="0.000"/></linearGradient><linearGradient id="g51" gradientUnits="userSpaceOnUse" x1="-41.9" y1="717.5" x2="1479.4" y2="168.4"><stop offset="0.000" stop-color="#585858" stop-opacity="0.895"/><stop offset="0.498" stop-color="#585858" stop-opacity="0.780"/><stop offset="0.698" stop-color="#585858" stop-opacity="0.622"/><stop offset="0.807" stop-color="#585858" stop-opacity="0.497"/><stop offset="0.874" stop-color="#585858" stop-opacity="0.323"/><stop offset="0.921" stop-color="#585858" stop-opacity="0.142"/><stop offset="0.954" stop-color="#585858" stop-opacity="0.024"/><stop offset="0.980" stop-color="#585858" stop-opacity="0.000"/><stop offset="1.000" stop-color="#585858" stop-opacity="0.000"/></linearGradient><linearGradient id="g52" gradientUnits="userSpaceOnUse" x1="-43.5" y1="803.0" x2="1506.4" y2="169.6"><stop offset="0.000" stop-color="#585858" stop-opacity="0.928"/><stop offset="0.526" stop-color="#585858" stop-opacity="0.808"/><stop offset="0.722" stop-color="#585858" stop-opacity="0.637"/><stop offset="0.824" stop-color="#585858" stop-opacity="0.506"/><stop offset="0.886" stop-color="#585858" stop-opacity="0.334"/><stop offset="0.928" stop-color="#585858" stop-opacity="0.150"/><stop offset="0.959" stop-color="#585858" stop-opacity="0.027"/><stop offset="0.982" stop-color="#585858" stop-opacity="0.000"/><stop offset="1.000" stop-color="#585858" stop-opacity="0.000"/></linearGradient><linearGradient id="g53" gradientUnits="userSpaceOnUse" x1="-33.7" y1="850.2" x2="1520.2" y2="170.2"><stop offset="0.000" stop-color="#585858" stop-opacity="0.942"/><stop offset="0.540" stop-color="#585858" stop-opacity="0.821"/><stop offset="0.733" stop-color="#585858" stop-opacity="0.643"/><stop offset="0.832" stop-color="#585858" stop-opacity="0.510"/><stop offset="0.892" stop-color="#585858" stop-opacity="0.338"/><stop offset="0.932" stop-color="#585858" stop-opacity="0.153"/><stop offset="0.961" stop-color="#585858" stop-opacity="0.028"/><stop offset="0.983" stop-color="#585858" stop-opacity="0.000"/><stop offset="1.000" stop-color="#585858" stop-opacity="0.000"/></linearGradient><linearGradient id="g54" gradientUnits="userSpaceOnUse" x1="0.1" y1="893.3" x2="1534.2" y2="170.8"><stop offset="0.000" stop-color="#585858" stop-opacity="0.956"/><stop offset="0.552" stop-color="#585858" stop-opacity="0.831"/><stop offset="0.742" stop-color="#585858" stop-opacity="0.648"/><stop offset="0.838" stop-color="#585858" stop-opacity="0.513"/><stop offset="0.896" stop-color="#585858" stop-opacity="0.341"/><stop offset="0.935" stop-color="#585858" stop-opacity="0.155"/><stop offset="0.963" stop-color="#585858" stop-opacity="0.029"/><stop offset="0.984" stop-color="#585858" stop-opacity="0.000"/><stop offset="1.000" stop-color="#585858" stop-opacity="0.000"/></linearGradient><linearGradient id="g55" gradientUnits="userSpaceOnUse" x1="125.5" y1="896.9" x2="1548.3" y2="171.4"><stop offset="0.000" stop-color="#585858" stop-opacity="0.965"/><stop offset="0.552" stop-color="#585858" stop-opacity="0.831"/><stop offset="0.742" stop-color="#585858" stop-opacity="0.646"/><stop offset="0.838" stop-color="#585858" stop-opacity="0.511"/><stop offset="0.896" stop-color="#585858" stop-opacity="0.339"/><stop offset="0.935" stop-color="#585858" stop-opacity="0.153"/><stop offset="0.963" stop-color="#585858" stop-opacity="0.028"/><stop offset="0.984" stop-color="#585858" stop-opacity="0.000"/><stop offset="1.000" stop-color="#585858" stop-opacity="0.000"/></linearGradient><linearGradient id="g56" gradientUnits="userSpaceOnUse" x1="271.1" y1="889.9" x2="1562.7" y2="172.0"><stop offset="0.000" stop-color="#585858" stop-opacity="0.973"/><stop offset="0.548" stop-color="#585858" stop-opacity="0.828"/><stop offset="0.739" stop-color="#585858" stop-opacity="0.641"/><stop offset="0.836" stop-color="#585858" stop-opacity="0.507"/><stop offset="0.895" stop-color="#585858" stop-opacity="0.335"/><stop offset="0.934" stop-color="#585858" stop-opacity="0.151"/><stop offset="0.962" stop-color="#585858" stop-opacity="0.028"/><stop offset="0.983" stop-color="#585858" stop-opacity="0.000"/><stop offset="1.000" stop-color="#585858" stop-opacity="0.000"/></linearGradient><linearGradient id="g57" gradientUnits="userSpaceOnUse" x1="397.2" y1="893.5" x2="1577.2" y2="172.6"><stop offset="0.000" stop-color="#585858" stop-opacity="0.979"/><stop offset="0.548" stop-color="#585858" stop-opacity="0.826"/><stop offset="0.738" stop-color="#585858" stop-opacity="0.638"/><stop offset="0.836" stop-color="#585858" stop-opacity="0.505"/><stop offset="0.894" stop-color="#585858" stop-opacity="0.331"/><stop offset="0.934" stop-color="#585858" stop-opacity="0.149"/><stop offset="0.962" stop-color="#585858" stop-opacity="0.027"/><stop offset="0.983" stop-color="#585858" stop-opacity="0.000"/><stop offset="1.000" stop-color="#585858" stop-opacity="0.000"/></linearGradient><linearGradient id="g58" gradientUnits="userSpaceOnUse" x1="524.5" y1="897.0" x2="1591.9" y2="173.2"><stop offset="0.000" stop-color="#585858" stop-opacity="0.983"/><stop offset="0.547" stop-color="#585858" stop-opacity="0.823"/><stop offset="0.738" stop-color="#585858" stop-opacity="0.635"/><stop offset="0.835" stop-color="#585858" stop-opacity="0.502"/><stop offset="0.894" stop-color="#585858" stop-opacity="0.328"/><stop offset="0.934" stop-color="#585858" stop-opacity="0.147"/><stop offset="0.962" stop-color="#585858" stop-opacity="0.027"/><stop offset="0.983" stop-color="#585858" stop-opacity="0.000"/><stop offset="1.000" stop-color="#585858" stop-opacity="0.000"/></linearGradient><linearGradient id="g59" gradientUnits="userSpaceOnUse" x1="666.8" y1="890.0" x2="1606.8" y2="173.9"><stop offset="0.000" stop-color="#585858" stop-opacity="0.984"/><stop offset="0.543" stop-color="#585858" stop-opacity="0.816"/><stop offset="0.735" stop-color="#585858" stop-opacity="0.629"/><stop offset="0.833" stop-color="#585858" stop-opacity="0.498"/><stop offset="0.893" stop-color="#585858" stop-opacity="0.323"/><stop offset="0.933" stop-color="#585858" stop-opacity="0.144"/><stop offset="0.962" stop-color="#585858" stop-opacity="0.026"/><stop offset="0.983" stop-color="#585858" stop-opacity="0.000"/><stop offset="1.000" stop-color="#585858" stop-opacity="0.000"/></linearGradient><linearGradient id="g60" gradientUnits="userSpaceOnUse" x1="794.7" y1="893.6" x2="1621.9" y2="174.5"><stop offset="0.000" stop-color="#585858" stop-opacity="0.985"/><stop offset="0.543" stop-color="#585858" stop-opacity="0.810"/><stop offset="0.735" stop-color="#585858" stop-opacity="0.624"/><stop offset="0.833" stop-color="#585858" stop-opacity="0.494"/><stop offset="0.893" stop-color="#585858" stop-opacity="0.319"/><stop offset="0.933" stop-color="#585858" stop-opacity="0.141"/><stop offset="0.961" stop-color="#585858" stop-opacity="0.025"/><stop offset="0.983" stop-color="#585858" stop-opacity="0.000"/><stop offset="1.000" stop-color="#585858" stop-opacity="0.000"/></linearGradient><linearGradient id="g61" gradientUnits="userSpaceOnUse" x1="923.9" y1="897.1" x2="1637.3" y2="175.2"><stop offset="0.000" stop-color="#585858" stop-opacity="0.985"/><stop offset="0.542" stop-color="#585858" stop-opacity="0.803"/><stop offset="0.734" stop-color="#585858" stop-opacity="0.620"/><stop offset="0.833" stop-color="#585858" stop-opacity="0.490"/><stop offset="0.892" stop-color="#585858" stop-opacity="0.315"/><stop offset="0.932" stop-color="#585858" stop-opacity="0.139"/><stop offset="0.961" stop-color="#585858" stop-opacity="0.025"/><stop offset="0.983" stop-color="#585858" stop-opacity="0.000"/><stop offset="1.000" stop-color="#585858" stop-opacity="0.000"/></linearGradient><linearGradient id="g62" gradientUnits="userSpaceOnUse" x1="1062.9" y1="890.2" x2="1650.0" y2="179.2"><stop offset="0.000" stop-color="#585858" stop-opacity="0.982"/><stop offset="0.530" stop-color="#585858" stop-opacity="0.801"/><stop offset="0.725" stop-color="#585858" stop-opacity="0.624"/><stop offset="0.826" stop-color="#585858" stop-opacity="0.501"/><stop offset="0.888" stop-color="#585858" stop-opacity="0.338"/><stop offset="0.929" stop-color="#585858" stop-opacity="0.165"/><stop offset="0.959" stop-color="#585858" stop-opacity="0.041"/><stop offset="0.982" stop-color="#585858" stop-opacity="0.000"/><stop offset="1.000" stop-color="#585858" stop-opacity="0.000"/></linearGradient><linearGradient id="g63" gradientUnits="userSpaceOnUse" x1="1192.7" y1="893.7" x2="1650.0" y2="204.5"><stop offset="0.000" stop-color="#585858" stop-opacity="0.979"/><stop offset="0.476" stop-color="#585858" stop-opacity="0.838"/><stop offset="0.680" stop-color="#585858" stop-opacity="0.688"/><stop offset="0.793" stop-color="#585858" stop-opacity="0.573"/><stop offset="0.864" stop-color="#585858" stop-opacity="0.480"/><stop offset="0.914" stop-color="#585858" stop-opacity="0.350"/><stop offset="0.950" stop-color="#585858" stop-opacity="0.212"/><stop offset="0.978" stop-color="#585858" stop-opacity="0.097"/><stop offset="1.000" stop-color="#585858" stop-opacity="0.022"/></linearGradient><linearGradient id="g64" gradientUnits="userSpaceOnUse" x1="1323.7" y1="897.3" x2="1649.9" y2="246.2"><stop offset="0.000" stop-color="#585858" stop-opacity="0.974"/><stop offset="0.408" stop-color="#585858" stop-opacity="0.875"/><stop offset="0.617" stop-color="#585858" stop-opacity="0.761"/><stop offset="0.743" stop-color="#585858" stop-opacity="0.662"/><stop offset="0.828" stop-color="#585858" stop-opacity="0.582"/><stop offset="0.889" stop-color="#585858" stop-opacity="0.517"/><stop offset="0.935" stop-color="#585858" stop-opacity="0.440"/><stop offset="0.971" stop-color="#585858" stop-opacity="0.344"/><stop offset="1.000" stop-color="#585858" stop-opacity="0.245"/></linearGradient><linearGradient id="g65" gradientUnits="userSpaceOnUse" x1="1459.4" y1="890.3" x2="1649.8" y2="328.1"><stop offset="0.000" stop-color="#585858" stop-opacity="0.965"/><stop offset="0.316" stop-color="#585858" stop-opacity="0.908"/><stop offset="0.519" stop-color="#585858" stop-opacity="0.840"/><stop offset="0.660" stop-color="#585858" stop-opacity="0.773"/><stop offset="0.764" stop-color="#585858" stop-opacity="0.711"/><stop offset="0.843" stop-color="#585858" stop-opacity="0.656"/><stop offset="0.906" stop-color="#585858" stop-opacity="0.607"/><stop offset="0.958" stop-color="#585858" stop-opacity="0.564"/><stop offset="1.000" stop-color="#585858" stop-opacity="0.527"/></linearGradient><linearGradient id="g66" gradientUnits="userSpaceOnUse" x1="1591.1" y1="893.8" x2="1649.5" y2="562.1"><stop offset="0.000" stop-color="#585858" stop-opacity="0.956"/><stop offset="0.194" stop-color="#585858" stop-opacity="0.939"/><stop offset="0.359" stop-color="#585858" stop-opacity="0.921"/><stop offset="0.502" stop-color="#585858" stop-opacity="0.901"/><stop offset="0.627" stop-color="#585858" stop-opacity="0.881"/><stop offset="0.737" stop-color="#585858" stop-opacity="0.860"/><stop offset="0.835" stop-color="#585858" stop-opacity="0.839"/><stop offset="0.922" stop-color="#585858" stop-opacity="0.818"/><stop offset="1.000" stop-color="#585858" stop-opacity="0.798"/></linearGradient><linearGradient id="g67" gradientUnits="userSpaceOnUse" x1="-49.3" y1="817.9" x2="14.3" y2="897.8"><stop offset="0.000" stop-color="#585858" stop-opacity="0.932"/><stop offset="0.114" stop-color="#585858" stop-opacity="0.935"/><stop offset="0.231" stop-color="#585858" stop-opacity="0.939"/><stop offset="0.351" stop-color="#585858" stop-opacity="0.942"/><stop offset="0.474" stop-color="#585858" stop-opacity="0.945"/><stop offset="0.601" stop-color="#585858" stop-opacity="0.948"/><stop offset="0.730" stop-color="#585858" stop-opacity="0.952"/><stop offset="0.863" stop-color="#585858" stop-opacity="0.955"/><stop offset="1.000" stop-color="#585858" stop-opacity="0.958"/></linearGradient><linearGradient id="g68" gradientUnits="userSpaceOnUse" x1="-48.4" y1="670.2" x2="173.4" y2="892.7"><stop offset="0.000" stop-color="#585858" stop-opacity="0.870"/><stop offset="0.094" stop-color="#585858" stop-opacity="0.884"/><stop offset="0.195" stop-color="#585858" stop-opacity="0.898"/><stop offset="0.304" stop-color="#585858" stop-opacity="0.911"/><stop offset="0.421" stop-color="#585858" stop-opacity="0.924"/><stop offset="0.548" stop-color="#585858" stop-opacity="0.936"/><stop offset="0.686" stop-color="#585858" stop-opacity="0.948"/><stop offset="0.836" stop-color="#585858" stop-opacity="0.958"/><stop offset="1.000" stop-color="#585858" stop-opacity="0.968"/></linearGradient><linearGradient id="g69" gradientUnits="userSpaceOnUse" x1="-47.7" y1="571.6" x2="339.3" y2="895.0"><stop offset="0.000" stop-color="#585858" stop-opacity="0.806"/><stop offset="0.079" stop-color="#585858" stop-opacity="0.830"/><stop offset="0.168" stop-color="#585858" stop-opacity="0.854"/><stop offset="0.266" stop-color="#585858" stop-opacity="0.878"/><stop offset="0.377" stop-color="#585858" stop-opacity="0.902"/><stop offset="0.502" stop-color="#585858" stop-opacity="0.924"/><stop offset="0.644" stop-color="#585858" stop-opacity="0.944"/><stop offset="0.809" stop-color="#585858" stop-opacity="0.962"/><stop offset="1.000" stop-color="#585858" stop-opacity="0.977"/></linearGradient><linearGradient id="g70" gradientUnits="userSpaceOnUse" x1="-47.3" y1="501.1" x2="506.2" y2="897.2"><stop offset="0.000" stop-color="#585858" stop-opacity="0.745"/><stop offset="0.069" stop-color="#585858" stop-opacity="0.777"/><stop offset="0.147" stop-color="#585858" stop-opacity="0.811"/><stop offset="0.237" stop-color="#585858" stop-opacity="0.844"/><stop offset="0.341" stop-color="#585858" stop-opacity="0.878"/><stop offset="0.463" stop-color="#585858" stop-opacity="0.911"/><stop offset="0.608" stop-color="#585858" stop-opacity="0.940"/><stop offset="0.783" stop-color="#585858" stop-opacity="0.964"/><stop offset="1.000" stop-color="#585858" stop-opacity="0.982"/></linearGradient><linearGradient id="g71" gradientUnits="userSpaceOnUse" x1="-49.3" y1="446.7" x2="674.0" y2="899.5"><stop offset="0.000" stop-color="#585858" stop-opacity="0.688"/><stop offset="0.060" stop-color="#585858" stop-opacity="0.726"/><stop offset="0.130" stop-color="#585858" stop-opacity="0.766"/><stop offset="0.212" stop-color="#585858" stop-opacity="0.809"/><stop offset="0.310" stop-color="#585858" stop-opacity="0.852"/><stop offset="0.428" stop-color="#585858" stop-opacity="0.895"/><stop offset="0.574" stop-color="#585858" stop-opacity="0.934"/><stop offset="0.759" stop-color="#585858" stop-opacity="0.965"/><stop offset="1.000" stop-color="#585858" stop-opacity="0.985"/></linearGradient><linearGradient id="g72" gradientUnits="userSpaceOnUse" x1="-48.8" y1="405.9" x2="829.5" y2="894.4"><stop offset="0.000" stop-color="#585858" stop-opacity="0.638"/><stop offset="0.054" stop-color="#585858" stop-opacity="0.680"/><stop offset="0.118" stop-color="#585858" stop-opacity="0.725"/><stop offset="0.194" stop-color="#585858" stop-opacity="0.775"/><stop offset="0.287" stop-color="#585858" stop-opacity="0.826"/><stop offset="0.401" stop-color="#585858" stop-opacity="0.878"/><stop offset="0.547" stop-color="#585858" stop-opacity="0.926"/><stop offset="0.738" stop-color="#585858" stop-opacity="0.963"/><stop offset="1.000" stop-color="#585858" stop-opacity="0.985"/></linearGradient><linearGradient id="g73" gradientUnits="userSpaceOnUse" x1="-48.4" y1="373.2" x2="997.7" y2="896.6"><stop offset="0.000" stop-color="#585858" stop-opacity="0.595"/><stop offset="0.049" stop-color="#585858" stop-opacity="0.639"/><stop offset="0.107" stop-color="#585858" stop-opacity="0.688"/><stop offset="0.178" stop-color="#585858" stop-opacity="0.743"/><stop offset="0.265" stop-color="#585858" stop-opacity="0.802"/><stop offset="0.375" stop-color="#585858" stop-opacity="0.862"/><stop offset="0.520" stop-color="#585858" stop-opacity="0.918"/><stop offset="0.716" stop-color="#585858" stop-opacity="0.961"/><stop offset="1.000" stop-color="#585858" stop-opacity="0.984"/></linearGradient><linearGradient id="g74" gradientUnits="userSpaceOnUse" x1="-49.8" y1="345.7" x2="1167.0" y2="898.9"><stop offset="0.000" stop-color="#585858" stop-opacity="0.554"/><stop offset="0.045" stop-color="#585858" stop-opacity="0.600"/><stop offset="0.098" stop-color="#585858" stop-opacity="0.652"/><stop offset="0.164" stop-color="#585858" stop-opacity="0.711"/><stop offset="0.246" stop-color="#585858" stop-opacity="0.776"/><stop offset="0.352" stop-color="#585858" stop-opacity="0.844"/><stop offset="0.495" stop-color="#585858" stop-opacity="0.909"/><stop offset="0.695" stop-color="#585858" stop-opacity="0.957"/><stop offset="1.000" stop-color="#585858" stop-opacity="0.980"/></linearGradient><linearGradient id="g75" gradientUnits="userSpaceOnUse" x1="-49.3" y1="323.5" x2="1319.4" y2="893.8"><stop offset="0.000" stop-color="#585858" stop-opacity="0.520"/><stop offset="0.041" stop-color="#585858" stop-opacity="0.566"/><stop offset="0.091" stop-color="#585858" stop-opacity="0.620"/><stop offset="0.153" stop-color="#585858" stop-opacity="0.681"/><stop offset="0.231" stop-color="#585858" stop-opacity="0.751"/><stop offset="0.334" stop-color="#585858" stop-opacity="0.826"/><stop offset="0.474" stop-color="#585858" stop-opacity="0.898"/><stop offset="0.678" stop-color="#585858" stop-opacity="0.951"/><stop offset="1.000" stop-color="#585858" stop-opacity="0.973"/></linearGradient><linearGradient id="g76" gradientUnits="userSpaceOnUse" x1="-49.0" y1="304.6" x2="1489.1" y2="896.0"><stop offset="0.000" stop-color="#585858" stop-opacity="0.482"/><stop offset="0.038" stop-color="#585858" stop-opacity="0.536"/><stop offset="0.085" stop-color="#585858" stop-opacity="0.590"/><stop offset="0.143" stop-color="#585858" stop-opacity="0.655"/><stop offset="0.217" stop-color="#585858" stop-opacity="0.728"/><stop offset="0.316" stop-color="#585858" stop-opacity="0.809"/><stop offset="0.454" stop-color="#585858" stop-opacity="0.887"/><stop offset="0.660" stop-color="#585858" stop-opacity="0.944"/><stop offset="1.000" stop-color="#585858" stop-opacity="0.964"/></linearGradient><linearGradient id="g77" gradientUnits="userSpaceOnUse" x1="-48.7" y1="288.5" x2="1639.1" y2="891.0"><stop offset="0.000" stop-color="#585858" stop-opacity="0.435"/><stop offset="0.036" stop-color="#585858" stop-opacity="0.507"/><stop offset="0.079" stop-color="#585858" stop-opacity="0.563"/><stop offset="0.134" stop-color="#585858" stop-opacity="0.629"/><stop offset="0.206" stop-color="#585858" stop-opacity="0.705"/><stop offset="0.301" stop-color="#585858" stop-opacity="0.791"/><stop offset="0.437" stop-color="#585858" stop-opacity="0.875"/><stop offset="0.644" stop-color="#585858" stop-opacity="0.934"/><stop offset="1.000" stop-color="#585858" stop-opacity="0.951"/></linearGradient><linearGradient id="g78" gradientUnits="userSpaceOnUse" x1="-49.7" y1="274.1" x2="1645.3" y2="838.6"><stop offset="0.000" stop-color="#585858" stop-opacity="0.381"/><stop offset="0.036" stop-color="#585858" stop-opacity="0.469"/><stop offset="0.079" stop-color="#585858" stop-opacity="0.535"/><stop offset="0.134" stop-color="#585858" stop-opacity="0.599"/><stop offset="0.205" stop-color="#585858" stop-opacity="0.675"/><stop offset="0.301" stop-color="#585858" stop-opacity="0.763"/><stop offset="0.436" stop-color="#585858" stop-opacity="0.851"/><stop offset="0.643" stop-color="#585858" stop-opacity="0.918"/><stop offset="1.000" stop-color="#585858" stop-opacity="0.938"/></linearGradient><linearGradient id="g79" gradientUnits="userSpaceOnUse" x1="-49.3" y1="261.9" x2="1632.9" y2="787.0"><stop offset="0.000" stop-color="#585858" stop-opacity="0.326"/><stop offset="0.036" stop-color="#585858" stop-opacity="0.426"/><stop offset="0.080" stop-color="#585858" stop-opacity="0.508"/><stop offset="0.135" stop-color="#585858" stop-opacity="0.572"/><stop offset="0.206" stop-color="#585858" stop-opacity="0.647"/><stop offset="0.302" stop-color="#585858" stop-opacity="0.735"/><stop offset="0.438" stop-color="#585858" stop-opacity="0.827"/><stop offset="0.645" stop-color="#585858" stop-opacity="0.899"/><stop offset="1.000" stop-color="#585858" stop-opacity="0.923"/></linearGradient><linearGradient id="g80" gradientUnits="userSpaceOnUse" x1="-49.1" y1="251.1" x2="1638.6" y2="746.9"><stop offset="0.000" stop-color="#585858" stop-opacity="0.271"/><stop offset="0.036" stop-color="#585858" stop-opacity="0.380"/><stop offset="0.079" stop-color="#585858" stop-opacity="0.477"/><stop offset="0.134" stop-color="#585858" stop-opacity="0.548"/><stop offset="0.206" stop-color="#585858" stop-opacity="0.622"/><stop offset="0.301" stop-color="#585858" stop-opacity="0.710"/><stop offset="0.437" stop-color="#585858" stop-opacity="0.804"/><stop offset="0.644" stop-color="#585858" stop-opacity="0.881"/><stop offset="1.000" stop-color="#585858" stop-opacity="0.907"/></linearGradient><linearGradient id="g81" gradientUnits="userSpaceOnUse" x1="-49.9" y1="241.2" x2="1643.8" y2="711.0"><stop offset="0.000" stop-color="#585858" stop-opacity="0.216"/><stop offset="0.036" stop-color="#585858" stop-opacity="0.329"/><stop offset="0.079" stop-color="#585858" stop-opacity="0.440"/><stop offset="0.134" stop-color="#585858" stop-opacity="0.524"/><stop offset="0.205" stop-color="#585858" stop-opacity="0.598"/><stop offset="0.301" stop-color="#585858" stop-opacity="0.686"/><stop offset="0.436" stop-color="#585858" stop-opacity="0.782"/><stop offset="0.644" stop-color="#585858" stop-opacity="0.862"/><stop offset="1.000" stop-color="#585858" stop-opacity="0.891"/></linearGradient><linearGradient id="g82" gradientUnits="userSpaceOnUse" x1="-49.6" y1="232.7" x2="1648.4" y2="678.8"><stop offset="0.000" stop-color="#585858" stop-opacity="0.167"/><stop offset="0.035" stop-color="#585858" stop-opacity="0.281"/><stop offset="0.079" stop-color="#585858" stop-opacity="0.400"/><stop offset="0.134" stop-color="#585858" stop-opacity="0.501"/><stop offset="0.205" stop-color="#585858" stop-opacity="0.576"/><stop offset="0.300" stop-color="#585858" stop-opacity="0.663"/><stop offset="0.436" stop-color="#585858" stop-opacity="0.760"/><stop offset="0.643" stop-color="#585858" stop-opacity="0.844"/><stop offset="1.000" stop-color="#585858" stop-opacity="0.874"/></linearGradient><linearGradient id="g83" gradientUnits="userSpaceOnUse" x1="-49.1" y1="218.0" x2="1642.7" y2="620.0"><stop offset="0.000" stop-color="#585858" stop-opacity="0.080"/><stop offset="0.036" stop-color="#585858" stop-opacity="0.188"/><stop offset="0.079" stop-color="#585858" stop-opacity="0.316"/><stop offset="0.134" stop-color="#585858" stop-opacity="0.442"/><stop offset="0.205" stop-color="#585858" stop-opacity="0.535"/><stop offset="0.301" stop-color="#585858" stop-opacity="0.620"/><stop offset="0.437" stop-color="#585858" stop-opacity="0.718"/><stop offset="0.644" stop-color="#585858" stop-opacity="0.806"/><stop offset="1.000" stop-color="#585858" stop-opacity="0.840"/></linearGradient><linearGradient id="g84" gradientUnits="userSpaceOnUse" x1="-49.8" y1="211.5" x2="1646.8" y2="596.1"><stop offset="0.000" stop-color="#585858" stop-opacity="0.043"/><stop offset="0.035" stop-color="#585858" stop-opacity="0.140"/><stop offset="0.079" stop-color="#585858" stop-opacity="0.272"/><stop offset="0.134" stop-color="#585858" stop-opacity="0.408"/><stop offset="0.205" stop-color="#585858" stop-opacity="0.516"/><stop offset="0.300" stop-color="#585858" stop-opacity="0.600"/><stop offset="0.436" stop-color="#585858" stop-opacity="0.698"/><stop offset="0.643" stop-color="#585858" stop-opacity="0.787"/><stop offset="1.000" stop-color="#585858" stop-opacity="0.824"/></linearGradient><linearGradient id="g85" gradientUnits="userSpaceOnUse" x1="-49.5" y1="205.7" x2="1638.0" y2="571.6"><stop offset="0.000" stop-color="#585858" stop-opacity="0.019"/><stop offset="0.036" stop-color="#585858" stop-opacity="0.094"/><stop offset="0.079" stop-color="#585858" stop-opacity="0.226"/><stop offset="0.134" stop-color="#585858" stop-opacity="0.372"/><stop offset="0.206" stop-color="#585858" stop-opacity="0.495"/><stop offset="0.301" stop-color="#585858" stop-opacity="0.581"/><stop offset="0.437" stop-color="#585858" stop-opacity="0.678"/><stop offset="0.644" stop-color="#585858" stop-opacity="0.769"/><stop offset="1.000" stop-color="#585858" stop-opacity="0.807"/></linearGradient><linearGradient id="g86" gradientUnits="userSpaceOnUse" x1="-49.3" y1="200.4" x2="1641.9" y2="551.8"><stop offset="0.000" stop-color="#585858" stop-opacity="0.005"/><stop offset="0.036" stop-color="#585858" stop-opacity="0.057"/><stop offset="0.079" stop-color="#585858" stop-opacity="0.174"/><stop offset="0.134" stop-color="#585858" stop-opacity="0.335"/><stop offset="0.205" stop-color="#585858" stop-opacity="0.472"/><stop offset="0.301" stop-color="#585858" stop-opacity="0.564"/><stop offset="0.437" stop-color="#585858" stop-opacity="0.660"/><stop offset="0.644" stop-color="#585858" stop-opacity="0.752"/><stop offset="1.000" stop-color="#585858" stop-opacity="0.791"/></linearGradient><linearGradient id="g87" gradientUnits="userSpaceOnUse" x1="-49.9" y1="195.3" x2="1645.5" y2="533.4"><stop offset="0.000" stop-color="#585858" stop-opacity="0.000"/><stop offset="0.036" stop-color="#585858" stop-opacity="0.030"/><stop offset="0.079" stop-color="#585858" stop-opacity="0.124"/><stop offset="0.134" stop-color="#585858" stop-opacity="0.283"/><stop offset="0.205" stop-color="#585858" stop-opacity="0.445"/><stop offset="0.300" stop-color="#585858" stop-opacity="0.547"/><stop offset="0.436" stop-color="#585858" stop-opacity="0.643"/><stop offset="0.643" stop-color="#585858" stop-opacity="0.735"/><stop offset="1.000" stop-color="#585858" stop-opacity="0.774"/></linearGradient><linearGradient id="g88" gradientUnits="userSpaceOnUse" x1="-46.0" y1="191.5" x2="1648.8" y2="516.5"><stop offset="0.000" stop-color="#585858" stop-opacity="0.000"/><stop offset="0.036" stop-color="#585858" stop-opacity="0.016"/><stop offset="0.079" stop-color="#585858" stop-opacity="0.089"/><stop offset="0.135" stop-color="#585858" stop-opacity="0.235"/><stop offset="0.206" stop-color="#585858" stop-opacity="0.419"/><stop offset="0.302" stop-color="#585858" stop-opacity="0.534"/><stop offset="0.437" stop-color="#585858" stop-opacity="0.628"/><stop offset="0.645" stop-color="#585858" stop-opacity="0.719"/><stop offset="1.000" stop-color="#585858" stop-opacity="0.759"/></linearGradient><linearGradient id="g89" gradientUnits="userSpaceOnUse" x1="-29.1" y1="190.4" x2="1641.3" y2="498.8"><stop offset="0.000" stop-color="#585858" stop-opacity="0.000"/><stop offset="0.037" stop-color="#585858" stop-opacity="0.013"/><stop offset="0.082" stop-color="#585858" stop-opacity="0.078"/><stop offset="0.138" stop-color="#585858" stop-opacity="0.213"/><stop offset="0.211" stop-color="#585858" stop-opacity="0.399"/><stop offset="0.308" stop-color="#585858" stop-opacity="0.528"/><stop offset="0.445" stop-color="#585858" stop-opacity="0.619"/><stop offset="0.652" stop-color="#585858" stop-opacity="0.705"/><stop offset="1.000" stop-color="#585858" stop-opacity="0.743"/></linearGradient><linearGradient id="g90" gradientUnits="userSpaceOnUse" x1="-12.4" y1="189.4" x2="1644.5" y2="484.2"><stop offset="0.000" stop-color="#585858" stop-opacity="0.000"/><stop offset="0.038" stop-color="#585858" stop-opacity="0.011"/><stop offset="0.084" stop-color="#585858" stop-opacity="0.068"/><stop offset="0.141" stop-color="#585858" stop-opacity="0.191"/><stop offset="0.215" stop-color="#585858" stop-opacity="0.373"/><stop offset="0.314" stop-color="#585858" stop-opacity="0.523"/><stop offset="0.451" stop-color="#585858" stop-opacity="0.610"/><stop offset="0.657" stop-color="#585858" stop-opacity="0.692"/><stop offset="1.000" stop-color="#585858" stop-opacity="0.728"/></linearGradient><linearGradient id="g91" gradientUnits="userSpaceOnUse" x1="3.9" y1="188.3" x2="1647.5" y2="470.7"><stop offset="0.000" stop-color="#585858" stop-opacity="0.000"/><stop offset="0.039" stop-color="#585858" stop-opacity="0.009"/><stop offset="0.086" stop-color="#585858" stop-opacity="0.059"/><stop offset="0.144" stop-color="#585858" stop-opacity="0.170"/><stop offset="0.219" stop-color="#585858" stop-opacity="0.344"/><stop offset="0.319" stop-color="#585858" stop-opacity="0.514"/><stop offset="0.457" stop-color="#585858" stop-opacity="0.602"/><stop offset="0.663" stop-color="#585858" stop-opacity="0.680"/><stop offset="1.000" stop-color="#585858" stop-opacity="0.713"/></linearGradient><linearGradient id="g92" gradientUnits="userSpaceOnUse" x1="19.9" y1="187.3" x2="1640.8" y2="456.4"><stop offset="0.000" stop-color="#585858" stop-opacity="0.000"/><stop offset="0.040" stop-color="#585858" stop-opacity="0.022"/><stop offset="0.088" stop-color="#585858" stop-opacity="0.110"/><stop offset="0.148" stop-color="#585858" stop-opacity="0.245"/><stop offset="0.224" stop-color="#585858" stop-opacity="0.394"/><stop offset="0.325" stop-color="#585858" stop-opacity="0.512"/><stop offset="0.464" stop-color="#585858" stop-opacity="0.593"/><stop offset="0.669" stop-color="#585858" stop-opacity="0.667"/><stop offset="1.000" stop-color="#585858" stop-opacity="0.699"/></linearGradient><linearGradient id="g93" gradientUnits="userSpaceOnUse" x1="35.6" y1="186.3" x2="1643.7" y2="444.6"><stop offset="0.000" stop-color="#585858" stop-opacity="0.000"/><stop offset="0.040" stop-color="#585858" stop-opacity="0.006"/><stop offset="0.090" stop-color="#585858" stop-opacity="0.042"/><stop offset="0.151" stop-color="#585858" stop-opacity="0.131"/><stop offset="0.228" stop-color="#585858" stop-opacity="0.281"/><stop offset="0.330" stop-color="#585858" stop-opacity="0.462"/><stop offset="0.470" stop-color="#585858" stop-opacity="0.585"/><stop offset="0.674" stop-color="#585858" stop-opacity="0.655"/><stop offset="1.000" stop-color="#585858" stop-opacity="0.685"/></linearGradient><linearGradient id="g94" gradientUnits="userSpaceOnUse" x1="51.1" y1="185.3" x2="1646.5" y2="433.5"><stop offset="0.000" stop-color="#585858" stop-opacity="0.000"/><stop offset="0.041" stop-color="#585858" stop-opacity="0.005"/><stop offset="0.091" stop-color="#585858" stop-opacity="0.036"/><stop offset="0.153" stop-color="#585858" stop-opacity="0.113"/><stop offset="0.232" stop-color="#585858" stop-opacity="0.251"/><stop offset="0.335" stop-color="#585858" stop-opacity="0.429"/><stop offset="0.475" stop-color="#585858" stop-opacity="0.575"/><stop offset="0.679" stop-color="#585858" stop-opacity="0.643"/><stop offset="1.000" stop-color="#585858" stop-opacity="0.672"/></linearGradient><linearGradient id="g95" gradientUnits="userSpaceOnUse" x1="66.2" y1="184.3" x2="1649.1" y2="423.1"><stop offset="0.000" stop-color="#585858" stop-opacity="0.000"/><stop offset="0.042" stop-color="#585858" stop-opacity="0.004"/><stop offset="0.093" stop-color="#585858" stop-opacity="0.030"/><stop offset="0.156" stop-color="#585858" stop-opacity="0.098"/><stop offset="0.236" stop-color="#585858" stop-opacity="0.223"/><stop offset="0.339" stop-color="#585858" stop-opacity="0.393"/><stop offset="0.480" stop-color="#585858" stop-opacity="0.555"/><stop offset="0.683" stop-color="#585858" stop-opacity="0.632"/><stop offset="1.000" stop-color="#585858" stop-opacity="0.659"/></linearGradient><linearGradient id="g96" gradientUnits="userSpaceOnUse" x1="81.1" y1="183.3" x2="1643.1" y2="412.0"><stop offset="0.000" stop-color="#585858" stop-opacity="0.000"/><stop offset="0.043" stop-color="#585858" stop-opacity="0.003"/><stop offset="0.095" stop-color="#585858" stop-opacity="0.025"/><stop offset="0.159" stop-color="#585858" stop-opacity="0.084"/><stop offset="0.240" stop-color="#585858" stop-opacity="0.195"/><stop offset="0.345" stop-color="#585858" stop-opacity="0.356"/><stop offset="0.486" stop-color="#585858" stop-opacity="0.524"/><stop offset="0.688" stop-color="#585858" stop-opacity="0.620"/><stop offset="1.000" stop-color="#585858" stop-opacity="0.646"/></linearGradient><linearGradient id="g97" gradientUnits="userSpaceOnUse" x1="95.7" y1="182.4" x2="1645.6" y2="402.7"><stop offset="0.000" stop-color="#585858" stop-opacity="0.000"/><stop offset="0.044" stop-color="#585858" stop-opacity="0.002"/><stop offset="0.097" stop-color="#585858" stop-opacity="0.020"/><stop offset="0.162" stop-color="#585858" stop-opacity="0.071"/><stop offset="0.243" stop-color="#585858" stop-opacity="0.171"/><stop offset="0.349" stop-color="#585858" stop-opacity="0.320"/><stop offset="0.491" stop-color="#585858" stop-opacity="0.489"/><stop offset="0.692" stop-color="#585858" stop-opacity="0.610"/><stop offset="1.000" stop-color="#585858" stop-opacity="0.634"/></linearGradient><linearGradient id="g98" gradientUnits="userSpaceOnUse" x1="110.1" y1="181.4" x2="1648.0" y2="394.0"><stop offset="0.000" stop-color="#585858" stop-opacity="0.000"/><stop offset="0.045" stop-color="#585858" stop-opacity="0.002"/><stop offset="0.098" stop-color="#585858" stop-opacity="0.016"/><stop offset="0.164" stop-color="#585858" stop-opacity="0.060"/><stop offset="0.247" stop-color="#585858" stop-opacity="0.148"/><stop offset="0.353" stop-color="#585858" stop-opacity="0.286"/><stop offset="0.496" stop-color="#585858" stop-opacity="0.451"/><stop offset="0.696" stop-color="#585858" stop-opacity="0.597"/><stop offset="1.000" stop-color="#585858" stop-opacity="0.622"/></linearGradient><linearGradient id="g99" gradientUnits="userSpaceOnUse" x1="124.2" y1="180.5" x2="1642.5" y2="384.7"><stop offset="0.000" stop-color="#585858" stop-opacity="0.000"/><stop offset="0.046" stop-color="#585858" stop-opacity="0.001"/><stop offset="0.100" stop-color="#585858" stop-opacity="0.013"/><stop offset="0.167" stop-color="#585858" stop-opacity="0.050"/><stop offset="0.251" stop-color="#585858" stop-opacity="0.127"/><stop offset="0.358" stop-color="#585858" stop-opacity="0.253"/><stop offset="0.501" stop-color="#585858" stop-opacity="0.410"/><stop offset="0.701" stop-color="#585858" stop-opacity="0.571"/><stop offset="1.000" stop-color="#585858" stop-opacity="0.611"/></linearGradient><linearGradient id="g100" gradientUnits="userSpaceOnUse" x1="138.1" y1="179.6" x2="1644.9" y2="376.8"><stop offset="0.000" stop-color="#585858" stop-opacity="0.000"/><stop offset="0.046" stop-color="#585858" stop-opacity="0.001"/><stop offset="0.102" stop-color="#585858" stop-opacity="0.011"/><stop offset="0.169" stop-color="#585858" stop-opacity="0.042"/><stop offset="0.254" stop-color="#585858" stop-opacity="0.109"/><stop offset="0.362" stop-color="#585858" stop-opacity="0.223"/><stop offset="0.505" stop-color="#585858" stop-opacity="0.372"/><stop offset="0.704" stop-color="#585858" stop-opacity="0.538"/><stop offset="1.000" stop-color="#585858" stop-opacity="0.600"/></linearGradient><linearGradient id="g101" gradientUnits="userSpaceOnUse" x1="151.8" y1="178.7" x2="1647.1" y2="369.4"><stop offset="0.000" stop-color="#585858" stop-opacity="0.000"/><stop offset="0.047" stop-color="#585858" stop-opacity="0.001"/><stop offset="0.103" stop-color="#585858" stop-opacity="0.008"/><stop offset="0.172" stop-color="#585858" stop-opacity="0.035"/><stop offset="0.257" stop-color="#585858" stop-opacity="0.093"/><stop offset="0.366" stop-color="#585858" stop-opacity="0.195"/><stop offset="0.509" stop-color="#585858" stop-opacity="0.335"/><stop offset="0.708" stop-color="#585858" stop-opacity="0.500"/><stop offset="1.000" stop-color="#585858" stop-opacity="0.589"/></linearGradient><linearGradient id="g102" gradientUnits="userSpaceOnUse" x1="165.2" y1="177.9" x2="1649.2" y2="362.3"><stop offset="0.000" stop-color="#585858" stop-opacity="0.000"/><stop offset="0.048" stop-color="#585858" stop-opacity="0.007"/><stop offset="0.105" stop-color="#585858" stop-opacity="0.069"/><stop offset="0.174" stop-color="#585858" stop-opacity="0.178"/><stop offset="0.260" stop-color="#585858" stop-opacity="0.310"/><stop offset="0.369" stop-color="#585858" stop-opacity="0.432"/><stop offset="0.513" stop-color="#585858" stop-opacity="0.514"/><stop offset="0.711" stop-color="#585858" stop-opacity="0.560"/><stop offset="1.000" stop-color="#585858" stop-opacity="0.578"/></linearGradient><linearGradient id="g103" gradientUnits="userSpaceOnUse" x1="178.3" y1="177.0" x2="1644.3" y2="354.8"><stop offset="0.000" stop-color="#585858" stop-opacity="0.000"/><stop offset="0.049" stop-color="#585858" stop-opacity="0.000"/><stop offset="0.107" stop-color="#585858" stop-opacity="0.005"/><stop offset="0.177" stop-color="#585858" stop-opacity="0.023"/><stop offset="0.264" stop-color="#585858" stop-opacity="0.066"/><stop offset="0.374" stop-color="#585858" stop-opacity="0.146"/><stop offset="0.518" stop-color="#585858" stop-opacity="0.266"/><stop offset="0.715" stop-color="#585858" stop-opacity="0.418"/><stop offset="1.000" stop-color="#585858" stop-opacity="0.558"/></linearGradient><linearGradient id="g104" gradientUnits="userSpaceOnUse" x1="191.3" y1="176.2" x2="1646.3" y2="348.4"><stop offset="0.000" stop-color="#585858" stop-opacity="0.000"/><stop offset="0.049" stop-color="#585858" stop-opacity="0.000"/><stop offset="0.108" stop-color="#585858" stop-opacity="0.004"/><stop offset="0.179" stop-color="#585858" stop-opacity="0.018"/><stop offset="0.266" stop-color="#585858" stop-opacity="0.055"/><stop offset="0.377" stop-color="#585858" stop-opacity="0.125"/><stop offset="0.521" stop-color="#585858" stop-opacity="0.235"/><stop offset="0.718" stop-color="#585858" stop-opacity="0.379"/><stop offset="1.000" stop-color="#585858" stop-opacity="0.528"/></linearGradient><linearGradient id="g105" gradientUnits="userSpaceOnUse" x1="204.1" y1="175.3" x2="1648.3" y2="342.3"><stop offset="0.000" stop-color="#585858" stop-opacity="0.000"/><stop offset="0.050" stop-color="#585858" stop-opacity="0.000"/><stop offset="0.109" stop-color="#585858" stop-opacity="0.003"/><stop offset="0.181" stop-color="#585858" stop-opacity="0.014"/><stop offset="0.269" stop-color="#585858" stop-opacity="0.045"/><stop offset="0.380" stop-color="#585858" stop-opacity="0.107"/><stop offset="0.525" stop-color="#585858" stop-opacity="0.206"/><stop offset="0.721" stop-color="#585858" stop-opacity="0.341"/><stop offset="1.000" stop-color="#585858" stop-opacity="0.493"/></linearGradient><linearGradient id="g106" gradientUnits="userSpaceOnUse" x1="216.6" y1="174.5" x2="1643.7" y2="335.7"><stop offset="0.000" stop-color="#585858" stop-opacity="0.000"/><stop offset="0.051" stop-color="#585858" stop-opacity="0.000"/><stop offset="0.111" stop-color="#585858" stop-opacity="0.002"/><stop offset="0.184" stop-color="#585858" stop-opacity="0.011"/><stop offset="0.273" stop-color="#585858" stop-opacity="0.037"/><stop offset="0.384" stop-color="#585858" stop-opacity="0.090"/><stop offset="0.529" stop-color="#585858" stop-opacity="0.179"/><stop offset="0.724" stop-color="#585858" stop-opacity="0.303"/><stop offset="1.000" stop-color="#585858" stop-opacity="0.454"/></linearGradient><linearGradient id="g107" gradientUnits="userSpaceOnUse" x1="228.9" y1="173.7" x2="1645.7" y2="330.1"><stop offset="0.000" stop-color="#585858" stop-opacity="0.000"/><stop offset="0.051" stop-color="#585858" stop-opacity="0.000"/><stop offset="0.112" stop-color="#585858" stop-opacity="0.001"/><stop offset="0.186" stop-color="#585858" stop-opacity="0.009"/><stop offset="0.275" stop-color="#585858" stop-opacity="0.030"/><stop offset="0.388" stop-color="#585858" stop-opacity="0.076"/><stop offset="0.533" stop-color="#585858" stop-opacity="0.155"/><stop offset="0.727" stop-color="#585858" stop-opacity="0.270"/><stop offset="1.000" stop-color="#585858" stop-opacity="0.415"/></linearGradient><linearGradient id="g108" gradientUnits="userSpaceOnUse" x1="241.1" y1="172.9" x2="1647.5" y2="324.8"><stop offset="0.000" stop-color="#585858" stop-opacity="0.000"/><stop offset="0.052" stop-color="#585858" stop-opacity="0.000"/><stop offset="0.114" stop-color="#585858" stop-opacity="0.001"/><stop offset="0.188" stop-color="#585858" stop-opacity="0.007"/><stop offset="0.278" stop-color="#585858" stop-opacity="0.024"/><stop offset="0.391" stop-color="#585858" stop-opacity="0.063"/><stop offset="0.536" stop-color="#585858" stop-opacity="0.133"/><stop offset="0.729" stop-color="#585858" stop-opacity="0.239"/><stop offset="1.000" stop-color="#585858" stop-opacity="0.377"/></linearGradient><linearGradient id="g109" gradientUnits="userSpaceOnUse" x1="253.0" y1="172.2" x2="1649.3" y2="319.7"><stop offset="0.000" stop-color="#585858" stop-opacity="0.000"/><stop offset="0.053" stop-color="#585858" stop-opacity="0.000"/><stop offset="0.115" stop-color="#585858" stop-opacity="0.001"/><stop offset="0.190" stop-color="#585858" stop-opacity="0.005"/><stop offset="0.280" stop-color="#585858" stop-opacity="0.019"/><stop offset="0.394" stop-color="#585858" stop-opacity="0.052"/><stop offset="0.539" stop-color="#585858" stop-opacity="0.114"/><stop offset="0.732" stop-color="#585858" stop-opacity="0.210"/><stop offset="1.000" stop-color="#585858" stop-opacity="0.340"/></linearGradient><linearGradient id="g110" gradientUnits="userSpaceOnUse" x1="264.8" y1="171.4" x2="1645.1" y2="314.2"><stop offset="0.000" stop-color="#585858" stop-opacity="0.000"/><stop offset="0.053" stop-color="#585858" stop-opacity="0.000"/><stop offset="0.116" stop-color="#585858" stop-opacity="0.000"/><stop offset="0.192" stop-color="#585858" stop-opacity="0.003"/><stop offset="0.283" stop-color="#585858" stop-opacity="0.015"/><stop offset="0.397" stop-color="#585858" stop-opacity="0.043"/><stop offset="0.543" stop-color="#585858" stop-opacity="0.096"/><stop offset="0.735" stop-color="#585858" stop-opacity="0.182"/><stop offset="1.000" stop-color="#585858" stop-opacity="0.303"/></linearGradient><linearGradient id="g111" gradientUnits="userSpaceOnUse" x1="276.4" y1="170.7" x2="1646.9" y2="309.5"><stop offset="0.000" stop-color="#585858" stop-opacity="0.000"/><stop offset="0.054" stop-color="#585858" stop-opacity="0.000"/><stop offset="0.118" stop-color="#585858" stop-opacity="0.000"/><stop offset="0.194" stop-color="#585858" stop-opacity="0.002"/><stop offset="0.286" stop-color="#585858" stop-opacity="0.011"/><stop offset="0.400" stop-color="#585858" stop-opacity="0.034"/><stop offset="0.546" stop-color="#585858" stop-opacity="0.081"/><stop offset="0.737" stop-color="#585858" stop-opacity="0.157"/><stop offset="1.000" stop-color="#585858" stop-opacity="0.269"/></linearGradient><linearGradient id="g112" gradientUnits="userSpaceOnUse" x1="287.7" y1="169.9" x2="1648.6" y2="305.0"><stop offset="0.000" stop-color="#585858" stop-opacity="0.000"/><stop offset="0.055" stop-color="#585858" stop-opacity="0.000"/><stop offset="0.119" stop-color="#585858" stop-opacity="0.030"/><stop offset="0.195" stop-color="#585858" stop-opacity="0.108"/><stop offset="0.288" stop-color="#585858" stop-opacity="0.214"/><stop offset="0.403" stop-color="#585858" stop-opacity="0.322"/><stop offset="0.549" stop-color="#585858" stop-opacity="0.410"/><stop offset="0.739" stop-color="#585858" stop-opacity="0.464"/><stop offset="1.000" stop-color="#585858" stop-opacity="0.483"/></linearGradient><linearGradient id="g113" gradientUnits="userSpaceOnUse" x1="299.0" y1="169.2" x2="1644.6" y2="300.1"><stop offset="0.000" stop-color="#585858" stop-opacity="0.000"/><stop offset="0.055" stop-color="#585858" stop-opacity="0.000"/><stop offset="0.120" stop-color="#585858" stop-opacity="0.000"/><stop offset="0.198" stop-color="#585858" stop-opacity="0.001"/><stop offset="0.291" stop-color="#585858" stop-opacity="0.006"/><stop offset="0.406" stop-color="#585858" stop-opacity="0.022"/><stop offset="0.552" stop-color="#585858" stop-opacity="0.055"/><stop offset="0.742" stop-color="#585858" stop-opacity="0.115"/><stop offset="1.000" stop-color="#585858" stop-opacity="0.206"/></linearGradient><linearGradient id="g114" gradientUnits="userSpaceOnUse" x1="310.0" y1="168.5" x2="1646.3" y2="296.0"><stop offset="0.000" stop-color="#585858" stop-opacity="0.000"/><stop offset="0.056" stop-color="#585858" stop-opacity="0.000"/><stop offset="0.122" stop-color="#585858" stop-opacity="0.000"/><stop offset="0.199" stop-color="#585858" stop-opacity="0.001"/><stop offset="0.293" stop-color="#585858" stop-opacity="0.004"/><stop offset="0.409" stop-color="#585858" stop-opacity="0.017"/><stop offset="0.555" stop-color="#585858" stop-opacity="0.045"/><stop offset="0.744" stop-color="#585858" stop-opacity="0.098"/><stop offset="1.000" stop-color="#585858" stop-opacity="0.179"/></linearGradient><linearGradient id="g115" gradientUnits="userSpaceOnUse" x1="320.9" y1="167.8" x2="1647.9" y2="292.0"><stop offset="0.000" stop-color="#585858" stop-opacity="0.000"/><stop offset="0.057" stop-color="#585858" stop-opacity="0.000"/><stop offset="0.123" stop-color="#585858" stop-opacity="0.000"/><stop offset="0.201" stop-color="#585858" stop-opacity="0.000"/><stop offset="0.296" stop-color="#585858" stop-opacity="0.003"/><stop offset="0.412" stop-color="#585858" stop-opacity="0.013"/><stop offset="0.557" stop-color="#585858" stop-opacity="0.037"/><stop offset="0.746" stop-color="#585858" stop-opacity="0.082"/><stop offset="1.000" stop-color="#585858" stop-opacity="0.155"/></linearGradient><linearGradient id="g116" gradientUnits="userSpaceOnUse" x1="331.6" y1="167.1" x2="1649.4" y2="288.1"><stop offset="0.000" stop-color="#585858" stop-opacity="0.000"/><stop offset="0.057" stop-color="#585858" stop-opacity="0.000"/><stop offset="0.124" stop-color="#585858" stop-opacity="0.000"/><stop offset="0.203" stop-color="#585858" stop-opacity="0.000"/><stop offset="0.298" stop-color="#585858" stop-opacity="0.002"/><stop offset="0.414" stop-color="#585858" stop-opacity="0.010"/><stop offset="0.560" stop-color="#585858" stop-opacity="0.029"/><stop offset="0.748" stop-color="#585858" stop-opacity="0.069"/><stop offset="1.000" stop-color="#585858" stop-opacity="0.133"/></linearGradient><linearGradient id="g117" gradientUnits="userSpaceOnUse" x1="342.1" y1="166.4" x2="1645.7" y2="283.9"><stop offset="0.000" stop-color="#585858" stop-opacity="0.000"/><stop offset="0.058" stop-color="#585858" stop-opacity="0.000"/><stop offset="0.125" stop-color="#585858" stop-opacity="0.000"/><stop offset="0.205" stop-color="#585858" stop-opacity="0.000"/><stop offset="0.300" stop-color="#585858" stop-opacity="0.001"/><stop offset="0.417" stop-color="#585858" stop-opacity="0.007"/><stop offset="0.563" stop-color="#585858" stop-opacity="0.023"/><stop offset="0.750" stop-color="#585858" stop-opacity="0.056"/><stop offset="1.000" stop-color="#585858" stop-opacity="0.113"/></linearGradient><linearGradient id="g118" gradientUnits="userSpaceOnUse" x1="352.5" y1="165.7" x2="1647.2" y2="280.4"><stop offset="0.000" stop-color="#585858" stop-opacity="0.000"/><stop offset="0.058" stop-color="#585858" stop-opacity="0.000"/><stop offset="0.126" stop-color="#585858" stop-opacity="0.000"/><stop offset="0.206" stop-color="#585858" stop-opacity="0.000"/><stop offset="0.302" stop-color="#585858" stop-opacity="0.001"/><stop offset="0.419" stop-color="#585858" stop-opacity="0.005"/><stop offset="0.565" stop-color="#585858" stop-opacity="0.018"/><stop offset="0.752" stop-color="#585858" stop-opacity="0.046"/><stop offset="1.000" stop-color="#585858" stop-opacity="0.095"/></linearGradient><linearGradient id="g119" gradientUnits="userSpaceOnUse" x1="362.8" y1="165.1" x2="1648.7" y2="276.9"><stop offset="0.000" stop-color="#585858" stop-opacity="0.000"/><stop offset="0.059" stop-color="#585858" stop-opacity="0.000"/><stop offset="0.127" stop-color="#585858" stop-opacity="0.000"/><stop offset="0.208" stop-color="#585858" stop-opacity="0.000"/><stop offset="0.304" stop-color="#585858" stop-opacity="0.000"/><stop offset="0.422" stop-color="#585858" stop-opacity="0.003"/><stop offset="0.568" stop-color="#585858" stop-opacity="0.014"/><stop offset="0.754" stop-color="#585858" stop-opacity="0.037"/><stop offset="1.000" stop-color="#585858" stop-opacity="0.080"/></linearGradient><linearGradient id="g120" gradientUnits="userSpaceOnUse" x1="372.8" y1="164.4" x2="1645.2" y2="273.2"><stop offset="0.000" stop-color="#585858" stop-opacity="0.000"/><stop offset="0.059" stop-color="#585858" stop-opacity="0.000"/><stop offset="0.129" stop-color="#585858" stop-opacity="0.000"/><stop offset="0.210" stop-color="#585858" stop-opacity="0.000"/><stop offset="0.307" stop-color="#585858" stop-opacity="0.000"/><stop offset="0.425" stop-color="#585858" stop-opacity="0.002"/><stop offset="0.571" stop-color="#585858" stop-opacity="0.010"/><stop offset="0.756" stop-color="#585858" stop-opacity="0.030"/><stop offset="1.000" stop-color="#585858" stop-opacity="0.066"/></linearGradient><linearGradient id="g121" gradientUnits="userSpaceOnUse" x1="382.8" y1="163.8" x2="1646.7" y2="269.9"><stop offset="0.000" stop-color="#585858" stop-opacity="0.000"/><stop offset="0.060" stop-color="#585858" stop-opacity="0.000"/><stop offset="0.130" stop-color="#585858" stop-opacity="0.000"/><stop offset="0.211" stop-color="#585858" stop-opacity="0.000"/><stop offset="0.309" stop-color="#585858" stop-opacity="0.000"/><stop offset="0.427" stop-color="#585858" stop-opacity="0.001"/><stop offset="0.573" stop-color="#585858" stop-opacity="0.007"/><stop offset="0.758" stop-color="#585858" stop-opacity="0.023"/><stop offset="1.000" stop-color="#585858" stop-opacity="0.055"/></linearGradient><linearGradient id="g122" gradientUnits="userSpaceOnUse" x1="392.6" y1="163.1" x2="1648.1" y2="266.8"><stop offset="0.000" stop-color="#585858" stop-opacity="0.000"/><stop offset="0.061" stop-color="#585858" stop-opacity="0.000"/><stop offset="0.131" stop-color="#585858" stop-opacity="0.005"/><stop offset="0.213" stop-color="#585858" stop-opacity="0.048"/><stop offset="0.311" stop-color="#585858" stop-opacity="0.121"/><stop offset="0.429" stop-color="#585858" stop-opacity="0.204"/><stop offset="0.575" stop-color="#585858" stop-opacity="0.278"/><stop offset="0.759" stop-color="#585858" stop-opacity="0.330"/><stop offset="1.000" stop-color="#585858" stop-opacity="0.350"/></linearGradient><linearGradient id="g123" gradientUnits="userSpaceOnUse" x1="402.2" y1="162.5" x2="1649.5" y2="263.8"><stop offset="0.000" stop-color="#585858" stop-opacity="0.000"/><stop offset="0.061" stop-color="#585858" stop-opacity="0.000"/><stop offset="0.132" stop-color="#585858" stop-opacity="0.000"/><stop offset="0.214" stop-color="#585858" stop-opacity="0.000"/><stop offset="0.313" stop-color="#585858" stop-opacity="0.000"/><stop offset="0.431" stop-color="#585858" stop-opacity="0.000"/><stop offset="0.577" stop-color="#585858" stop-opacity="0.003"/><stop offset="0.761" stop-color="#585858" stop-opacity="0.014"/><stop offset="1.000" stop-color="#585858" stop-opacity="0.036"/></linearGradient><linearGradient id="g124" gradientUnits="userSpaceOnUse" x1="411.7" y1="161.9" x2="1646.2" y2="260.5"><stop offset="0.000" stop-color="#585858" stop-opacity="0.000"/><stop offset="0.062" stop-color="#585858" stop-opacity="0.000"/><stop offset="0.133" stop-color="#585858" stop-opacity="0.000"/><stop offset="0.216" stop-color="#585858" stop-opacity="0.000"/><stop offset="0.315" stop-color="#585858" stop-opacity="0.000"/><stop offset="0.434" stop-color="#585858" stop-opacity="0.000"/><stop offset="0.580" stop-color="#585858" stop-opacity="0.002"/><stop offset="0.763" stop-color="#585858" stop-opacity="0.010"/><stop offset="1.000" stop-color="#585858" stop-opacity="0.029"/></linearGradient><linearGradient id="g125" gradientUnits="userSpaceOnUse" x1="421.1" y1="161.3" x2="1647.6" y2="257.7"><stop offset="0.000" stop-color="#585858" stop-opacity="0.000"/><stop offset="0.062" stop-color="#585858" stop-opacity="0.000"/><stop offset="0.134" stop-color="#585858" stop-opacity="0.000"/><stop offset="0.218" stop-color="#585858" stop-opacity="0.000"/><stop offset="0.317" stop-color="#585858" stop-opacity="0.000"/><stop offset="0.436" stop-color="#585858" stop-opacity="0.000"/><stop offset="0.582" stop-color="#585858" stop-opacity="0.001"/><stop offset="0.764" stop-color="#585858" stop-opacity="0.007"/><stop offset="1.000" stop-color="#585858" stop-opacity="0.023"/></linearGradient><linearGradient id="g126" gradientUnits="userSpaceOnUse" x1="430.4" y1="160.7" x2="1648.9" y2="255.0"><stop offset="0.000" stop-color="#585858" stop-opacity="0.000"/><stop offset="0.063" stop-color="#585858" stop-opacity="0.000"/><stop offset="0.135" stop-color="#585858" stop-opacity="0.000"/><stop offset="0.219" stop-color="#585858" stop-opacity="0.000"/><stop offset="0.318" stop-color="#585858" stop-opacity="0.000"/><stop offset="0.438" stop-color="#585858" stop-opacity="0.000"/><stop offset="0.584" stop-color="#585858" stop-opacity="0.001"/><stop offset="0.766" stop-color="#585858" stop-opacity="0.005"/><stop offset="1.000" stop-color="#585858" stop-opacity="0.018"/></linearGradient><linearGradient id="g127" gradientUnits="userSpaceOnUse" x1="439.5" y1="160.1" x2="1645.7" y2="252.0"><stop offset="0.000" stop-color="#585858" stop-opacity="0.000"/><stop offset="0.063" stop-color="#585858" stop-opacity="0.000"/><stop offset="0.136" stop-color="#585858" stop-opacity="0.000"/><stop offset="0.221" stop-color="#585858" stop-opacity="0.000"/><stop offset="0.321" stop-color="#585858" stop-opacity="0.000"/><stop offset="0.440" stop-color="#585858" stop-opacity="0.000"/><stop offset="0.586" stop-color="#585858" stop-opacity="0.000"/><stop offset="0.768" stop-color="#585858" stop-opacity="0.003"/><stop offset="1.000" stop-color="#585858" stop-opacity="0.013"/></linearGradient><linearGradient id="g128" gradientUnits="userSpaceOnUse" x1="483.2" y1="157.2" x2="1647.8" y2="239.6"><stop offset="0.000" stop-color="#585858" stop-opacity="0.000"/><stop offset="0.066" stop-color="#585858" stop-opacity="0.000"/><stop offset="0.141" stop-color="#585858" stop-opacity="0.000"/><stop offset="0.227" stop-color="#585858" stop-opacity="0.008"/><stop offset="0.329" stop-color="#585858" stop-opacity="0.046"/><stop offset="0.450" stop-color="#585858" stop-opacity="0.100"/><stop offset="0.595" stop-color="#585858" stop-opacity="0.153"/><stop offset="0.774" stop-color="#585858" stop-opacity="0.192"/><stop offset="1.000" stop-color="#585858" stop-opacity="0.209"/></linearGradient><linearGradient id="g129" gradientUnits="userSpaceOnUse" x1="562.4" y1="152.1" x2="1647.6" y2="219.1"><stop offset="0.000" stop-color="#585858" stop-opacity="0.000"/><stop offset="0.070" stop-color="#585858" stop-opacity="0.000"/><stop offset="0.149" stop-color="#585858" stop-opacity="0.000"/><stop offset="0.240" stop-color="#585858" stop-opacity="0.000"/><stop offset="0.344" stop-color="#585858" stop-opacity="0.005"/><stop offset="0.467" stop-color="#585858" stop-opacity="0.027"/><stop offset="0.612" stop-color="#585858" stop-opacity="0.056"/><stop offset="0.786" stop-color="#585858" stop-opacity="0.080"/><stop offset="1.000" stop-color="#585858" stop-opacity="0.091"/></linearGradient><linearGradient id="g130" gradientUnits="userSpaceOnUse" x1="632.2" y1="147.6" x2="1647.4" y2="203.2"><stop offset="0.000" stop-color="#585858" stop-opacity="0.000"/><stop offset="0.074" stop-color="#585858" stop-opacity="0.000"/><stop offset="0.156" stop-color="#585858" stop-opacity="0.000"/><stop offset="0.250" stop-color="#585858" stop-opacity="0.000"/><stop offset="0.357" stop-color="#585858" stop-opacity="0.000"/><stop offset="0.481" stop-color="#585858" stop-opacity="0.000"/><stop offset="0.625" stop-color="#585858" stop-opacity="0.005"/><stop offset="0.796" stop-color="#585858" stop-opacity="0.013"/><stop offset="1.000" stop-color="#585858" stop-opacity="0.018"/></linearGradient><linearGradient id="g131" gradientUnits="userSpaceOnUse" x1="-33.2" y1="753.9" x2="1492.8" y2="169.0"><stop offset="0.000" stop-color="#6c9b27" stop-opacity="0.911"/><stop offset="0.510" stop-color="#6c9b27" stop-opacity="0.793"/><stop offset="0.709" stop-color="#6c9b27" stop-opacity="0.629"/><stop offset="0.814" stop-color="#6c9b27" stop-opacity="0.503"/><stop offset="0.879" stop-color="#6c9b27" stop-opacity="0.415"/><stop offset="0.924" stop-color="#6c9b27" stop-opacity="0.348"/><stop offset="0.956" stop-color="#6c9b27" stop-opacity="0.097"/><stop offset="0.981" stop-color="#6c9b27" stop-opacity="0.000"/><stop offset="1.000" stop-color="#6c9b27" stop-opacity="0.000"/></linearGradient><linearGradient id="g132" gradientUnits="userSpaceOnUse" x1="-49.3" y1="225.0" x2="1638.3" y2="646.1"><stop offset="0.000" stop-color="#b8394f" stop-opacity="0.324"/><stop offset="0.036" stop-color="#b8394f" stop-opacity="0.381"/><stop offset="0.079" stop-color="#b8394f" stop-opacity="0.427"/><stop offset="0.134" stop-color="#b8394f" stop-opacity="0.484"/><stop offset="0.206" stop-color="#b8394f" stop-opacity="0.554"/><stop offset="0.301" stop-color="#b8394f" stop-opacity="0.640"/><stop offset="0.437" stop-color="#b8394f" stop-opacity="0.738"/><stop offset="0.644" stop-color="#b8394f" stop-opacity="0.824"/><stop offset="1.000" stop-color="#b8394f" stop-opacity="0.857"/></linearGradient><linearGradient id="subg" x1="0" y1="0" x2="0" y2="1" gradientUnits="objectBoundingBox"><stop offset="0" stop-color="#fff" stop-opacity="0"/><stop offset="1" stop-color="#fff" stop-opacity="1"/></linearGradient><mask id="subm" maskUnits="userSpaceOnUse" x="0" y="0" width="1920" height="941"><rect x="0" y="620" width="1600" height="250" fill="url(#subg)"/></mask></defs><g mask="url(#subm)" stroke="#4a4a4a" stroke-width="1" opacity="0.7"><line x1="-18.8" y1="563.9" x2="-9.1" y2="561.2"/><line x1="-14.6" y1="567.2" x2="4.8" y2="561.7"/><line x1="-12.5" y1="568.8" x2="16.4" y2="560.6"/><line x1="-10.4" y1="570.5" x2="18.6" y2="562.2"/><line x1="-18.2" y1="575.0" x2="30.3" y2="561.2"/><line x1="-16.1" y1="576.7" x2="41.9" y2="560.1"/><line x1="-13.9" y1="578.4" x2="44.2" y2="561.7"/><line x1="-11.8" y1="580.1" x2="55.8" y2="560.6"/><line x1="-19.7" y1="584.8" x2="58.1" y2="562.2"/><line x1="-17.6" y1="586.5" x2="69.6" y2="561.1"/><line x1="-13.2" y1="590.1" x2="83.6" y2="561.6"/><line x1="-11.0" y1="591.9" x2="95.1" y2="560.6"/><line x1="-19.1" y1="596.8" x2="97.5" y2="562.2"/><line x1="-16.9" y1="598.6" x2="109.0" y2="561.1"/><line x1="-14.7" y1="600.5" x2="111.5" y2="562.7"/><line x1="-12.5" y1="602.4" x2="122.9" y2="561.6"/><line x1="-10.2" y1="604.3" x2="134.4" y2="560.5"/><line x1="-18.5" y1="609.4" x2="136.9" y2="562.1"/><line x1="-16.3" y1="611.3" x2="148.3" y2="561.0"/><line x1="-11.7" y1="615.3" x2="162.3" y2="561.6"/><line x1="-9.4" y1="617.3" x2="173.7" y2="560.5"/><line x1="-17.9" y1="622.6" x2="176.4" y2="562.1"/><line x1="-15.6" y1="624.7" x2="187.7" y2="561.0"/><line x1="-13.2" y1="626.7" x2="190.4" y2="562.6"/><line x1="-10.9" y1="628.8" x2="201.7" y2="561.5"/><line x1="-19.6" y1="634.4" x2="213.0" y2="560.4"/><line x1="-17.2" y1="636.6" x2="215.8" y2="562.0"/><line x1="-14.8" y1="638.7" x2="227.0" y2="560.9"/><line x1="-10.0" y1="643.0" x2="241.1" y2="561.5"/><line x1="-18.9" y1="649.0" x2="252.3" y2="560.4"/><line x1="-16.5" y1="651.2" x2="255.2" y2="562.0"/><line x1="-14.0" y1="653.5" x2="266.4" y2="560.9"/><line x1="-11.6" y1="655.7" x2="269.4" y2="562.5"/><line x1="-9.1" y1="658.0" x2="280.5" y2="561.4"/><line x1="-18.2" y1="664.3" x2="291.6" y2="560.3"/><line x1="-15.7" y1="666.6" x2="294.7" y2="561.9"/><line x1="-13.2" y1="669.0" x2="305.7" y2="560.9"/><line x1="-8.1" y1="673.9" x2="319.9" y2="561.4"/><line x1="-17.5" y1="680.4" x2="330.9" y2="560.3"/><line x1="-15.0" y1="682.9" x2="334.1" y2="561.9"/><line x1="-12.4" y1="685.4" x2="345.1" y2="560.8"/><line x1="-9.7" y1="688.0" x2="348.3" y2="562.4"/><line x1="-19.4" y1="694.9" x2="359.3" y2="561.3"/><line x1="-16.8" y1="697.5" x2="370.2" y2="560.3"/><line x1="-14.1" y1="700.1" x2="373.5" y2="561.9"/><line x1="-11.4" y1="702.8" x2="384.4" y2="560.8"/><line x1="-18.7" y1="712.8" x2="398.7" y2="561.3"/><line x1="-16.0" y1="715.6" x2="409.5" y2="560.2"/><line x1="-13.2" y1="718.4" x2="412.9" y2="561.8"/><line x1="-10.5" y1="721.2" x2="423.7" y2="560.7"/><line x1="-7.7" y1="724.0" x2="427.3" y2="562.3"/><line x1="-17.9" y1="731.8" x2="438.0" y2="561.3"/><line x1="-15.1" y1="734.7" x2="448.8" y2="560.2"/><line x1="-12.3" y1="737.7" x2="452.4" y2="561.8"/><line x1="-9.4" y1="740.7" x2="463.1" y2="560.7"/><line x1="-17.1" y1="751.9" x2="477.4" y2="561.2"/><line x1="-14.2" y1="755.1" x2="488.0" y2="560.1"/><line x1="-11.3" y1="758.2" x2="491.8" y2="561.7"/><line x1="-8.3" y1="761.4" x2="502.4" y2="560.6"/><line x1="-19.2" y1="770.1" x2="506.2" y2="562.3"/><line x1="-16.2" y1="773.4" x2="516.8" y2="561.2"/><line x1="-13.2" y1="776.7" x2="527.3" y2="560.1"/><line x1="-10.2" y1="780.1" x2="531.2" y2="561.7"/><line x1="-7.2" y1="783.5" x2="541.7" y2="560.6"/><line x1="-15.3" y1="796.2" x2="556.2" y2="561.1"/><line x1="-12.2" y1="799.8" x2="566.6" y2="560.0"/><line x1="-9.1" y1="803.3" x2="570.6" y2="561.6"/><line x1="-5.9" y1="807.0" x2="581.1" y2="560.6"/><line x1="-17.5" y1="816.8" x2="585.1" y2="562.2"/><line x1="-14.3" y1="820.6" x2="595.5" y2="561.1"/><line x1="-11.1" y1="824.4" x2="605.9" y2="560.0"/><line x1="-7.9" y1="828.2" x2="610.0" y2="561.6"/><line x1="-19.8" y1="838.7" x2="620.4" y2="560.5"/><line x1="-13.2" y1="846.7" x2="634.9" y2="561.0"/><line x1="-9.9" y1="850.8" x2="639.1" y2="562.6"/><line x1="-6.6" y1="854.9" x2="649.4" y2="561.6"/><line x1="-18.9" y1="866.1" x2="659.7" y2="560.5"/><line x1="-15.5" y1="870.4" x2="664.0" y2="562.1"/><line x1="-12.1" y1="874.7" x2="674.3" y2="561.0"/><line x1="-8.7" y1="879.1" x2="678.6" y2="562.6"/><line x1="10.7" y1="876.1" x2="688.8" y2="561.5"/><line x1="29.9" y1="873.2" x2="699.0" y2="560.4"/><line x1="52.8" y1="874.6" x2="713.6" y2="561.0"/><line x1="56.6" y1="879.0" x2="718.1" y2="562.6"/><line x1="75.7" y1="876.0" x2="728.3" y2="561.5"/><line x1="94.7" y1="873.1" x2="738.3" y2="560.4"/><line x1="98.7" y1="877.5" x2="742.9" y2="562.0"/><line x1="117.6" y1="874.5" x2="753.0" y2="560.9"/><line x1="121.8" y1="878.9" x2="757.6" y2="562.5"/><line x1="140.6" y1="876.0" x2="767.7" y2="561.4"/><line x1="159.4" y1="873.0" x2="777.7" y2="560.3"/><line x1="182.5" y1="874.5" x2="792.3" y2="560.9"/><line x1="187.0" y1="878.8" x2="797.1" y2="562.5"/><line x1="205.6" y1="875.9" x2="807.1" y2="561.4"/><line x1="224.1" y1="873.0" x2="817.0" y2="560.3"/><line x1="228.8" y1="877.3" x2="821.8" y2="561.9"/><line x1="247.3" y1="874.4" x2="831.7" y2="560.8"/><line x1="252.2" y1="878.7" x2="836.6" y2="562.4"/><line x1="270.6" y1="875.8" x2="846.5" y2="561.3"/><line x1="288.8" y1="872.9" x2="856.3" y2="560.3"/><line x1="312.1" y1="874.3" x2="871.1" y2="560.8"/><line x1="317.4" y1="878.7" x2="876.1" y2="562.4"/><line x1="335.5" y1="875.7" x2="885.9" y2="561.3"/><line x1="353.6" y1="872.8" x2="895.6" y2="560.2"/><line x1="359.0" y1="877.1" x2="900.7" y2="561.8"/><line x1="377.0" y1="874.2" x2="910.4" y2="560.7"/><line x1="382.5" y1="878.6" x2="915.6" y2="562.3"/><line x1="400.5" y1="875.6" x2="925.3" y2="561.3"/><line x1="418.3" y1="872.7" x2="934.9" y2="560.2"/><line x1="441.8" y1="874.1" x2="949.8" y2="560.7"/><line x1="447.7" y1="878.5" x2="955.1" y2="562.3"/><line x1="465.4" y1="875.5" x2="964.7" y2="561.2"/><line x1="471.5" y1="879.9" x2="974.2" y2="560.1"/><line x1="489.1" y1="877.0" x2="979.6" y2="561.7"/><line x1="506.6" y1="874.0" x2="989.1" y2="560.7"/><line x1="512.9" y1="878.4" x2="994.5" y2="562.3"/><line x1="530.4" y1="875.5" x2="1004.1" y2="561.2"/><line x1="536.8" y1="879.8" x2="1013.5" y2="560.1"/><line x1="571.4" y1="874.0" x2="1028.5" y2="560.6"/><line x1="578.1" y1="878.3" x2="1034.0" y2="562.2"/><line x1="595.3" y1="875.4" x2="1043.4" y2="561.1"/><line x1="602.1" y1="879.8" x2="1052.8" y2="560.0"/><line x1="619.2" y1="876.8" x2="1058.4" y2="561.6"/><line x1="636.3" y1="873.9" x2="1067.8" y2="560.6"/><line x1="643.2" y1="878.2" x2="1073.5" y2="562.2"/><line x1="660.2" y1="875.3" x2="1082.8" y2="561.1"/><line x1="667.4" y1="879.7" x2="1092.1" y2="560.0"/><line x1="701.1" y1="873.8" x2="1107.2" y2="560.5"/><line x1="708.4" y1="878.2" x2="1113.0" y2="562.1"/><line x1="725.1" y1="875.2" x2="1122.2" y2="561.0"/><line x1="732.6" y1="879.6" x2="1128.1" y2="562.7"/><line x1="749.3" y1="876.6" x2="1137.3" y2="561.6"/><line x1="765.9" y1="873.7" x2="1146.5" y2="560.5"/><line x1="773.6" y1="878.1" x2="1152.4" y2="562.1"/><line x1="790.1" y1="875.1" x2="1161.6" y2="561.0"/><line x1="797.9" y1="879.5" x2="1167.6" y2="562.6"/><line x1="830.7" y1="873.6" x2="1185.8" y2="560.4"/><line x1="838.7" y1="878.0" x2="1191.9" y2="562.0"/><line x1="855.0" y1="875.0" x2="1201.0" y2="561.0"/><line x1="863.2" y1="879.4" x2="1207.1" y2="562.6"/><line x1="879.4" y1="876.5" x2="1216.2" y2="561.5"/><line x1="895.4" y1="873.5" x2="1225.2" y2="560.4"/><line x1="903.9" y1="877.9" x2="1231.4" y2="562.0"/><line x1="919.9" y1="875.0" x2="1240.4" y2="560.9"/><line x1="928.4" y1="879.3" x2="1246.6" y2="562.5"/><line x1="960.2" y1="873.5" x2="1264.5" y2="560.4"/><line x1="969.0" y1="877.8" x2="1270.8" y2="562.0"/><line x1="984.8" y1="874.9" x2="1279.7" y2="560.9"/><line x1="993.7" y1="879.3" x2="1286.1" y2="562.5"/><line x1="1009.4" y1="876.3" x2="1295.0" y2="561.4"/><line x1="1025.0" y1="873.4" x2="1303.9" y2="560.3"/><line x1="1034.1" y1="877.7" x2="1310.3" y2="561.9"/><line x1="1049.7" y1="874.8" x2="1319.1" y2="560.8"/><line x1="1058.9" y1="879.2" x2="1325.6" y2="562.4"/><line x1="1089.8" y1="873.3" x2="1343.2" y2="560.3"/><line x1="1099.3" y1="877.6" x2="1349.8" y2="561.9"/><line x1="1114.6" y1="874.7" x2="1358.5" y2="560.8"/><line x1="1124.2" y1="879.1" x2="1365.1" y2="562.4"/><line x1="1139.4" y1="876.1" x2="1373.9" y2="561.3"/><line x1="1154.5" y1="873.2" x2="1382.5" y2="560.2"/><line x1="1164.4" y1="877.6" x2="1389.2" y2="561.8"/><line x1="1179.4" y1="874.6" x2="1397.9" y2="560.7"/><line x1="1189.4" y1="879.0" x2="1404.7" y2="562.3"/><line x1="1219.3" y1="873.1" x2="1421.8" y2="560.2"/><line x1="1229.5" y1="877.5" x2="1428.7" y2="561.8"/><line x1="1244.3" y1="874.5" x2="1437.2" y2="560.7"/><line x1="1254.7" y1="878.9" x2="1444.2" y2="562.3"/><line x1="1269.4" y1="876.0" x2="1452.7" y2="561.2"/><line x1="1284.1" y1="873.0" x2="1461.2" y2="560.1"/><line x1="1294.6" y1="877.4" x2="1468.1" y2="561.7"/><line x1="1309.2" y1="874.5" x2="1476.6" y2="560.7"/><line x1="1319.9" y1="878.8" x2="1483.7" y2="562.3"/><line x1="1348.8" y1="872.9" x2="1500.5" y2="560.1"/><line x1="1359.7" y1="877.3" x2="1507.6" y2="561.7"/><line x1="1374.1" y1="874.4" x2="1516.0" y2="560.6"/><line x1="1385.1" y1="878.7" x2="1523.2" y2="562.2"/><line x1="1399.4" y1="875.8" x2="1531.5" y2="561.1"/><line x1="1413.6" y1="872.9" x2="1539.8" y2="560.1"/><line x1="1424.8" y1="877.2" x2="1547.1" y2="561.7"/><line x1="1438.9" y1="874.3" x2="1555.3" y2="560.6"/><line x1="1450.3" y1="878.7" x2="1562.6" y2="562.2"/><line x1="1478.3" y1="872.8" x2="1579.1" y2="560.0"/><line x1="1489.9" y1="877.1" x2="1586.5" y2="561.6"/><line x1="1503.8" y1="874.2" x2="1594.7" y2="560.5"/><line x1="1515.5" y1="878.6" x2="1602.1" y2="562.1"/><line x1="1529.3" y1="875.6" x2="1610.3" y2="561.0"/><line x1="1543.0" y1="872.7" x2="1617.8" y2="562.7"/><line x1="1555.0" y1="877.1" x2="1619.5" y2="590.1"/><line x1="1568.6" y1="874.1" x2="1619.3" y2="631.2"/><line x1="1580.8" y1="878.5" x2="1619.9" y2="675.2"/><line x1="1606.6" y1="879.9" x2="1619.4" y2="800.1"/><line x1="-18.2" y1="877.1" x2="-18.2" y2="877.1"/><line x1="-18.6" y1="837.4" x2="13.4" y2="876.6"/><line x1="-15.1" y1="823.4" x2="24.9" y2="871.3"/><line x1="-19.0" y1="801.4" x2="45.0" y2="876.2"/><line x1="-15.6" y1="788.7" x2="56.3" y2="870.8"/><line x1="-19.4" y1="768.7" x2="76.6" y2="875.7"/><line x1="-16.1" y1="757.1" x2="87.7" y2="870.4"/><line x1="-19.7" y1="738.8" x2="108.1" y2="875.3"/><line x1="-16.6" y1="728.2" x2="119.0" y2="869.9"/><line x1="-20.0" y1="711.4" x2="139.6" y2="874.8"/><line x1="-14.1" y1="692.2" x2="171.0" y2="874.3"/><line x1="-17.4" y1="677.2" x2="192.1" y2="879.3"/><line x1="-14.6" y1="668.5" x2="202.5" y2="873.9"/><line x1="-17.7" y1="654.6" x2="223.7" y2="878.8"/><line x1="-15.0" y1="646.5" x2="233.9" y2="873.4"/><line x1="-18.0" y1="633.6" x2="255.3" y2="878.4"/><line x1="-15.4" y1="626.1" x2="265.2" y2="873.0"/><line x1="-18.3" y1="614.1" x2="286.8" y2="877.9"/><line x1="-15.8" y1="607.1" x2="296.5" y2="872.5"/><line x1="-16.2" y1="589.4" x2="327.8" y2="872.1"/><line x1="-18.9" y1="578.9" x2="349.8" y2="877.0"/><line x1="-16.5" y1="572.8" x2="359.1" y2="871.6"/><line x1="-19.1" y1="563.0" x2="381.2" y2="876.5"/><line x1="-12.0" y1="561.0" x2="390.3" y2="871.2"/><line x1="0.1" y1="562.8" x2="412.6" y2="876.1"/><line x1="7.1" y1="560.8" x2="421.5" y2="870.7"/><line x1="19.3" y1="562.7" x2="444.0" y2="875.6"/><line x1="26.3" y1="560.7" x2="452.6" y2="870.3"/><line x1="45.4" y1="560.5" x2="483.7" y2="869.8"/><line x1="57.6" y1="562.3" x2="506.6" y2="874.7"/><line x1="64.4" y1="560.3" x2="529.8" y2="879.7"/><line x1="76.8" y1="562.1" x2="537.9" y2="874.3"/><line x1="83.5" y1="560.2" x2="561.2" y2="879.2"/><line x1="95.9" y1="562.0" x2="569.1" y2="873.8"/><line x1="108.4" y1="563.8" x2="592.7" y2="878.7"/><line x1="115.1" y1="561.8" x2="600.3" y2="873.3"/><line x1="127.6" y1="563.6" x2="624.0" y2="878.3"/><line x1="146.8" y1="563.4" x2="655.4" y2="877.8"/><line x1="153.3" y1="561.4" x2="662.6" y2="872.4"/><line x1="166.0" y1="563.3" x2="686.7" y2="877.4"/><line x1="172.4" y1="561.3" x2="693.7" y2="872.0"/><line x1="185.1" y1="563.1" x2="718.0" y2="876.9"/><line x1="191.5" y1="561.1" x2="724.8" y2="871.5"/><line x1="204.3" y1="562.9" x2="749.2" y2="876.4"/><line x1="210.5" y1="560.9" x2="755.8" y2="871.1"/><line x1="223.4" y1="562.7" x2="780.4" y2="876.0"/><line x1="242.6" y1="562.6" x2="811.6" y2="875.5"/><line x1="248.6" y1="560.6" x2="817.8" y2="870.2"/><line x1="261.7" y1="562.4" x2="842.7" y2="875.1"/><line x1="267.7" y1="560.4" x2="848.7" y2="869.7"/><line x1="280.8" y1="562.2" x2="873.9" y2="874.6"/><line x1="286.7" y1="560.2" x2="899.3" y2="879.6"/><line x1="299.9" y1="562.0" x2="904.9" y2="874.2"/><line x1="305.7" y1="560.1" x2="930.6" y2="879.1"/><line x1="318.9" y1="561.9" x2="936.0" y2="873.7"/><line x1="338.0" y1="561.7" x2="967.0" y2="873.3"/><line x1="351.4" y1="563.5" x2="993.0" y2="878.2"/><line x1="357.0" y1="561.5" x2="998.0" y2="872.8"/><line x1="370.5" y1="563.3" x2="1024.1" y2="877.7"/><line x1="376.1" y1="561.3" x2="1028.9" y2="872.4"/><line x1="389.6" y1="563.2" x2="1055.2" y2="877.3"/><line x1="395.1" y1="561.2" x2="1059.8" y2="871.9"/><line x1="408.7" y1="563.0" x2="1086.3" y2="876.8"/><line x1="414.1" y1="561.0" x2="1090.7" y2="871.5"/><line x1="433.1" y1="560.8" x2="1121.5" y2="871.0"/><line x1="446.9" y1="562.6" x2="1148.4" y2="875.9"/><line x1="452.1" y1="560.6" x2="1152.3" y2="870.6"/><line x1="465.9" y1="562.5" x2="1179.4" y2="875.4"/><line x1="471.1" y1="560.5" x2="1183.1" y2="870.1"/><line x1="485.0" y1="562.3" x2="1210.3" y2="875.0"/><line x1="490.0" y1="560.3" x2="1237.9" y2="879.9"/><line x1="504.0" y1="562.1" x2="1241.3" y2="874.5"/><line x1="509.0" y1="560.1" x2="1269.0" y2="879.5"/><line x1="537.1" y1="563.7" x2="1300.1" y2="879.0"/><line x1="542.0" y1="561.8" x2="1303.0" y2="873.6"/><line x1="556.2" y1="563.6" x2="1331.1" y2="878.6"/><line x1="561.0" y1="561.6" x2="1333.8" y2="873.2"/><line x1="575.2" y1="563.4" x2="1362.1" y2="878.1"/><line x1="580.0" y1="561.4" x2="1364.6" y2="872.7"/><line x1="594.3" y1="563.2" x2="1393.1" y2="877.6"/><line x1="598.9" y1="561.2" x2="1395.3" y2="872.3"/><line x1="613.3" y1="563.1" x2="1424.0" y2="877.2"/><line x1="632.4" y1="562.9" x2="1454.9" y2="876.7"/><line x1="636.8" y1="560.9" x2="1456.8" y2="871.4"/><line x1="651.4" y1="562.7" x2="1485.7" y2="876.3"/><line x1="655.8" y1="560.7" x2="1487.4" y2="870.9"/><line x1="670.4" y1="562.5" x2="1516.6" y2="875.8"/><line x1="674.7" y1="560.5" x2="1518.0" y2="870.5"/><line x1="689.3" y1="562.4" x2="1547.4" y2="875.4"/><line x1="693.6" y1="560.4" x2="1548.6" y2="870.0"/><line x1="708.3" y1="562.2" x2="1578.1" y2="874.9"/><line x1="727.3" y1="562.0" x2="1608.8" y2="874.4"/><line x1="731.4" y1="560.0" x2="1609.7" y2="869.1"/><line x1="746.2" y1="561.8" x2="1610.5" y2="863.9"/><line x1="761.2" y1="563.6" x2="1611.3" y2="858.7"/><line x1="765.2" y1="561.7" x2="1612.2" y2="853.5"/><line x1="780.2" y1="563.5" x2="1613.0" y2="848.5"/><line x1="784.1" y1="561.5" x2="1613.7" y2="843.5"/><line x1="799.2" y1="563.3" x2="1614.5" y2="838.6"/><line x1="803.0" y1="561.3" x2="1615.3" y2="833.7"/><line x1="821.9" y1="561.1" x2="1616.8" y2="824.1"/><line x1="837.1" y1="562.9" x2="1617.5" y2="819.5"/><line x1="840.8" y1="561.0" x2="1618.3" y2="814.8"/><line x1="856.1" y1="562.8" x2="1619.0" y2="810.3"/><line x1="859.6" y1="560.8" x2="1619.7" y2="805.8"/><line x1="875.0" y1="562.6" x2="1594.2" y2="792.9"/><line x1="878.5" y1="560.6" x2="1595.1" y2="788.6"/><line x1="893.9" y1="562.4" x2="1595.9" y2="784.4"/><line x1="897.3" y1="560.4" x2="1596.7" y2="780.2"/><line x1="916.2" y1="560.3" x2="1598.4" y2="771.9"/><line x1="931.7" y1="562.1" x2="1599.2" y2="767.9"/><line x1="935.0" y1="560.1" x2="1599.9" y2="763.8"/><line x1="950.6" y1="561.9" x2="1600.7" y2="759.9"/><line x1="966.4" y1="563.7" x2="1601.5" y2="756.0"/><line x1="969.5" y1="561.7" x2="1602.3" y2="752.1"/><line x1="985.3" y1="563.5" x2="1603.0" y2="748.3"/><line x1="988.4" y1="561.6" x2="1603.8" y2="744.5"/><line x1="1004.2" y1="563.4" x2="1604.5" y2="740.7"/><line x1="1023.1" y1="563.2" x2="1605.9" y2="733.4"/><line x1="1026.1" y1="561.2" x2="1606.6" y2="729.8"/><line x1="1042.1" y1="563.0" x2="1607.3" y2="726.2"/><line x1="1044.9" y1="561.0" x2="1608.0" y2="722.6"/><line x1="1060.9" y1="562.8" x2="1608.7" y2="719.1"/><line x1="1063.7" y1="560.9" x2="1609.4" y2="715.7"/><line x1="1079.8" y1="562.7" x2="1610.1" y2="712.3"/><line x1="1082.5" y1="560.7" x2="1610.8" y2="708.9"/><line x1="1098.7" y1="562.5" x2="1611.4" y2="705.5"/><line x1="1117.5" y1="562.3" x2="1612.7" y2="698.9"/><line x1="1120.1" y1="560.3" x2="1613.4" y2="695.7"/><line x1="1136.4" y1="562.2" x2="1614.0" y2="692.4"/><line x1="1138.8" y1="560.2" x2="1614.6" y2="689.3"/><line x1="1155.2" y1="562.0" x2="1615.2" y2="686.1"/><line x1="1171.7" y1="563.8" x2="1615.8" y2="683.0"/><line x1="1174.0" y1="561.8" x2="1616.4" y2="679.9"/><line x1="1190.6" y1="563.6" x2="1617.0" y2="676.8"/><line x1="1192.8" y1="561.6" x2="1617.6" y2="673.8"/><line x1="1211.6" y1="561.5" x2="1618.8" y2="667.9"/><line x1="1228.3" y1="563.3" x2="1619.4" y2="664.9"/><line x1="1230.4" y1="561.3" x2="1620.0" y2="662.0"/><line x1="1247.2" y1="563.1" x2="1599.4" y2="653.7"/><line x1="1249.2" y1="561.1" x2="1600.1" y2="650.9"/><line x1="1266.0" y1="562.9" x2="1600.7" y2="648.2"/><line x1="1267.9" y1="560.9" x2="1601.4" y2="645.4"/><line x1="1284.9" y1="562.7" x2="1602.0" y2="642.7"/><line x1="1286.7" y1="560.8" x2="1602.7" y2="640.0"/><line x1="1305.4" y1="560.6" x2="1603.9" y2="634.7"/><line x1="1322.5" y1="562.4" x2="1604.5" y2="632.1"/><line x1="1324.1" y1="560.4" x2="1605.1" y2="629.5"/><line x1="1341.2" y1="562.2" x2="1605.7" y2="626.9"/><line x1="1342.8" y1="560.2" x2="1606.3" y2="624.4"/><line x1="1360.0" y1="562.1" x2="1606.9" y2="621.9"/><line x1="1361.5" y1="560.1" x2="1607.5" y2="619.4"/><line x1="1378.8" y1="561.9" x2="1608.1" y2="616.9"/><line x1="1396.1" y1="563.7" x2="1608.7" y2="614.4"/><line x1="1414.9" y1="563.5" x2="1609.8" y2="609.6"/><line x1="1416.3" y1="561.5" x2="1610.4" y2="607.2"/><line x1="1433.7" y1="563.3" x2="1610.9" y2="604.8"/><line x1="1435.0" y1="561.4" x2="1611.5" y2="602.5"/><line x1="1452.5" y1="563.2" x2="1612.0" y2="600.2"/><line x1="1453.7" y1="561.2" x2="1612.6" y2="597.9"/><line x1="1471.3" y1="563.0" x2="1613.1" y2="595.6"/><line x1="1472.4" y1="561.0" x2="1613.6" y2="593.3"/><line x1="1490.1" y1="562.8" x2="1614.1" y2="591.1"/><line x1="1508.8" y1="562.6" x2="1615.2" y2="586.7"/><line x1="1509.8" y1="560.7" x2="1615.7" y2="584.5"/><line x1="1527.6" y1="562.5" x2="1616.2" y2="582.3"/><line x1="1528.4" y1="560.5" x2="1616.7" y2="580.2"/><line x1="1546.3" y1="562.3" x2="1617.2" y2="578.0"/><line x1="1547.1" y1="560.3" x2="1617.7" y2="575.9"/><line x1="1565.0" y1="562.1" x2="1618.2" y2="573.8"/><line x1="1565.7" y1="560.1" x2="1618.7" y2="571.7"/><line x1="1583.7" y1="562.0" x2="1619.2" y2="569.7"/><line x1="1602.4" y1="561.8" x2="1602.4" y2="561.8"/></g><line x1="-48.0" y1="204.9" x2="837.1" y2="141.0" stroke="url(#g1)" stroke-width="1.3"/><line x1="-46.4" y1="221.6" x2="905.0" y2="143.9" stroke="url(#g2)" stroke-width="1.3"/><line x1="-48.9" y1="243.6" x2="979.3" y2="147.1" stroke="url(#g3)" stroke-width="1.3"/><line x1="-49.5" y1="248.8" x2="995.1" y2="147.7" stroke="url(#g4)" stroke-width="1.3"/><line x1="-47.4" y1="251.3" x2="1003.1" y2="148.1" stroke="url(#g5)" stroke-width="1.3"/><line x1="-45.2" y1="253.9" x2="1011.1" y2="148.4" stroke="url(#g6)" stroke-width="1.3"/><line x1="-48.0" y1="257.1" x2="1019.3" y2="148.8" stroke="url(#g7)" stroke-width="1.3"/><line x1="-45.8" y1="259.9" x2="1027.5" y2="149.1" stroke="url(#g8)" stroke-width="1.3"/><line x1="-48.6" y1="263.2" x2="1035.8" y2="149.5" stroke="url(#g9)" stroke-width="1.3"/><line x1="-46.3" y1="266.2" x2="1044.2" y2="149.8" stroke="url(#g10)" stroke-width="1.3"/><line x1="-49.3" y1="269.8" x2="1052.7" y2="150.2" stroke="url(#g11)" stroke-width="1.3"/><line x1="-46.9" y1="273.0" x2="1061.2" y2="150.6" stroke="url(#g12)" stroke-width="1.3"/><line x1="-44.5" y1="276.3" x2="1069.9" y2="150.9" stroke="url(#g13)" stroke-width="1.3"/><line x1="-47.6" y1="280.3" x2="1078.6" y2="151.3" stroke="url(#g14)" stroke-width="1.3"/><line x1="-45.0" y1="283.8" x2="1087.4" y2="151.7" stroke="url(#g15)" stroke-width="1.3"/><line x1="-48.3" y1="288.2" x2="1096.4" y2="152.1" stroke="url(#g16)" stroke-width="1.3"/><line x1="-45.6" y1="292.0" x2="1105.4" y2="152.4" stroke="url(#g17)" stroke-width="1.3"/><line x1="-49.0" y1="296.7" x2="1114.5" y2="152.8" stroke="url(#g18)" stroke-width="1.3"/><line x1="-46.3" y1="300.8" x2="1123.7" y2="153.2" stroke="url(#g19)" stroke-width="1.3"/><line x1="-49.8" y1="305.9" x2="1133.0" y2="153.6" stroke="url(#g20)" stroke-width="1.3"/><line x1="-47.0" y1="310.4" x2="1142.4" y2="154.0" stroke="url(#g21)" stroke-width="1.3"/><line x1="-44.1" y1="315.0" x2="1151.9" y2="154.4" stroke="url(#g22)" stroke-width="1.3"/><line x1="-47.8" y1="320.8" x2="1161.5" y2="154.8" stroke="url(#g23)" stroke-width="1.3"/><line x1="-44.7" y1="325.9" x2="1171.2" y2="155.3" stroke="url(#g24)" stroke-width="1.3"/><line x1="-48.6" y1="332.2" x2="1181.0" y2="155.7" stroke="url(#g25)" stroke-width="1.3"/><line x1="-45.4" y1="337.8" x2="1190.9" y2="156.1" stroke="url(#g26)" stroke-width="1.3"/><line x1="-49.6" y1="344.8" x2="1200.9" y2="156.5" stroke="url(#g27)" stroke-width="1.3"/><line x1="-46.2" y1="350.9" x2="1211.0" y2="157.0" stroke="url(#g28)" stroke-width="1.3"/><line x1="-42.7" y1="357.4" x2="1221.3" y2="157.4" stroke="url(#g29)" stroke-width="1.3"/><line x1="-47.1" y1="365.4" x2="1231.6" y2="157.8" stroke="url(#g30)" stroke-width="1.3"/><line x1="-43.5" y1="372.6" x2="1242.1" y2="158.3" stroke="url(#g31)" stroke-width="1.3"/><line x1="-48.1" y1="381.5" x2="1252.7" y2="158.7" stroke="url(#g32)" stroke-width="1.3"/><line x1="-44.3" y1="389.5" x2="1263.4" y2="159.2" stroke="url(#g33)" stroke-width="1.3"/><line x1="-49.2" y1="399.6" x2="1274.3" y2="159.7" stroke="url(#g34)" stroke-width="1.3"/><line x1="-45.1" y1="408.6" x2="1285.2" y2="160.1" stroke="url(#g35)" stroke-width="1.3"/><line x1="-40.9" y1="418.1" x2="1296.3" y2="160.6" stroke="url(#g36)" stroke-width="1.3"/><line x1="-46.2" y1="430.1" x2="1307.5" y2="161.1" stroke="url(#g37)" stroke-width="1.3"/><line x1="-41.6" y1="440.9" x2="1318.9" y2="161.6" stroke="url(#g38)" stroke-width="1.3"/><line x1="-47.3" y1="454.6" x2="1330.3" y2="162.1" stroke="url(#g39)" stroke-width="1.3"/><line x1="-42.5" y1="466.9" x2="1342.0" y2="162.6" stroke="url(#g40)" stroke-width="1.3"/><line x1="-48.6" y1="482.7" x2="1353.7" y2="163.1" stroke="url(#g41)" stroke-width="1.3"/><line x1="-43.5" y1="497.0" x2="1365.6" y2="163.6" stroke="url(#g42)" stroke-width="1.3"/><line x1="-37.9" y1="512.4" x2="1377.6" y2="164.1" stroke="url(#g43)" stroke-width="1.3"/><line x1="-44.6" y1="532.2" x2="1389.8" y2="164.6" stroke="url(#g44)" stroke-width="1.3"/><line x1="-38.7" y1="550.3" x2="1402.1" y2="165.1" stroke="url(#g45)" stroke-width="1.3"/><line x1="-46.0" y1="573.7" x2="1414.6" y2="165.7" stroke="url(#g46)" stroke-width="1.3"/><line x1="-39.5" y1="595.4" x2="1427.2" y2="166.2" stroke="url(#g47)" stroke-width="1.3"/><line x1="-47.7" y1="623.6" x2="1440.0" y2="166.7" stroke="url(#g48)" stroke-width="1.3"/><line x1="-40.6" y1="650.0" x2="1453.0" y2="167.3" stroke="url(#g49)" stroke-width="1.3"/><line x1="-49.7" y1="684.7" x2="1466.1" y2="167.9" stroke="url(#g50)" stroke-width="1.3"/><line x1="-41.9" y1="717.5" x2="1479.4" y2="168.4" stroke="url(#g51)" stroke-width="1.3"/><line x1="-43.5" y1="803.0" x2="1506.4" y2="169.6" stroke="url(#g52)" stroke-width="1.3"/><line x1="-33.7" y1="850.2" x2="1520.2" y2="170.2" stroke="url(#g53)" stroke-width="1.3"/><line x1="0.1" y1="893.3" x2="1534.2" y2="170.8" stroke="url(#g54)" stroke-width="1.3"/><line x1="125.5" y1="896.9" x2="1548.3" y2="171.4" stroke="url(#g55)" stroke-width="1.3"/><line x1="271.1" y1="889.9" x2="1562.7" y2="172.0" stroke="url(#g56)" stroke-width="1.3"/><line x1="397.2" y1="893.5" x2="1577.2" y2="172.6" stroke="url(#g57)" stroke-width="1.3"/><line x1="524.5" y1="897.0" x2="1591.9" y2="173.2" stroke="url(#g58)" stroke-width="1.3"/><line x1="666.8" y1="890.0" x2="1606.8" y2="173.9" stroke="url(#g59)" stroke-width="1.3"/><line x1="794.7" y1="893.6" x2="1621.9" y2="174.5" stroke="url(#g60)" stroke-width="1.3"/><line x1="923.9" y1="897.1" x2="1637.3" y2="175.2" stroke="url(#g61)" stroke-width="1.3"/><line x1="1062.9" y1="890.2" x2="1650.0" y2="179.2" stroke="url(#g62)" stroke-width="1.3"/><line x1="1192.7" y1="893.7" x2="1650.0" y2="204.5" stroke="url(#g63)" stroke-width="1.3"/><line x1="1323.7" y1="897.3" x2="1649.9" y2="246.2" stroke="url(#g64)" stroke-width="1.3"/><line x1="1459.4" y1="890.3" x2="1649.8" y2="328.1" stroke="url(#g65)" stroke-width="1.3"/><line x1="1591.1" y1="893.8" x2="1649.5" y2="562.1" stroke="url(#g66)" stroke-width="1.3"/><line x1="-49.3" y1="817.9" x2="14.3" y2="897.8" stroke="url(#g67)" stroke-width="1.3"/><line x1="-48.4" y1="670.2" x2="173.4" y2="892.7" stroke="url(#g68)" stroke-width="1.3"/><line x1="-47.7" y1="571.6" x2="339.3" y2="895.0" stroke="url(#g69)" stroke-width="1.3"/><line x1="-47.3" y1="501.1" x2="506.2" y2="897.2" stroke="url(#g70)" stroke-width="1.3"/><line x1="-49.3" y1="446.7" x2="674.0" y2="899.5" stroke="url(#g71)" stroke-width="1.3"/><line x1="-48.8" y1="405.9" x2="829.5" y2="894.4" stroke="url(#g72)" stroke-width="1.3"/><line x1="-48.4" y1="373.2" x2="997.7" y2="896.6" stroke="url(#g73)" stroke-width="1.3"/><line x1="-49.8" y1="345.7" x2="1167.0" y2="898.9" stroke="url(#g74)" stroke-width="1.3"/><line x1="-49.3" y1="323.5" x2="1319.4" y2="893.8" stroke="url(#g75)" stroke-width="1.3"/><line x1="-49.0" y1="304.6" x2="1489.1" y2="896.0" stroke="url(#g76)" stroke-width="1.3"/><line x1="-48.7" y1="288.5" x2="1639.1" y2="891.0" stroke="url(#g77)" stroke-width="1.3"/><line x1="-49.7" y1="274.1" x2="1645.3" y2="838.6" stroke="url(#g78)" stroke-width="1.3"/><line x1="-49.3" y1="261.9" x2="1632.9" y2="787.0" stroke="url(#g79)" stroke-width="1.3"/><line x1="-49.1" y1="251.1" x2="1638.6" y2="746.9" stroke="url(#g80)" stroke-width="1.3"/><line x1="-49.9" y1="241.2" x2="1643.8" y2="711.0" stroke="url(#g81)" stroke-width="1.3"/><line x1="-49.6" y1="232.7" x2="1648.4" y2="678.8" stroke="url(#g82)" stroke-width="1.3"/><line x1="-49.1" y1="218.0" x2="1642.7" y2="620.0" stroke="url(#g83)" stroke-width="1.3"/><line x1="-49.8" y1="211.5" x2="1646.8" y2="596.1" stroke="url(#g84)" stroke-width="1.3"/><line x1="-49.5" y1="205.7" x2="1638.0" y2="571.6" stroke="url(#g85)" stroke-width="1.3"/><line x1="-49.3" y1="200.4" x2="1641.9" y2="551.8" stroke="url(#g86)" stroke-width="1.3"/><line x1="-49.9" y1="195.3" x2="1645.5" y2="533.4" stroke="url(#g87)" stroke-width="1.3"/><line x1="-46.0" y1="191.5" x2="1648.8" y2="516.5" stroke="url(#g88)" stroke-width="1.3"/><line x1="-29.1" y1="190.4" x2="1641.3" y2="498.8" stroke="url(#g89)" stroke-width="1.3"/><line x1="-12.4" y1="189.4" x2="1644.5" y2="484.2" stroke="url(#g90)" stroke-width="1.3"/><line x1="3.9" y1="188.3" x2="1647.5" y2="470.7" stroke="url(#g91)" stroke-width="1.3"/><line x1="19.9" y1="187.3" x2="1640.8" y2="456.4" stroke="url(#g92)" stroke-width="1.3"/><line x1="35.6" y1="186.3" x2="1643.7" y2="444.6" stroke="url(#g93)" stroke-width="1.3"/><line x1="51.1" y1="185.3" x2="1646.5" y2="433.5" stroke="url(#g94)" stroke-width="1.3"/><line x1="66.2" y1="184.3" x2="1649.1" y2="423.1" stroke="url(#g95)" stroke-width="1.3"/><line x1="81.1" y1="183.3" x2="1643.1" y2="412.0" stroke="url(#g96)" stroke-width="1.3"/><line x1="95.7" y1="182.4" x2="1645.6" y2="402.7" stroke="url(#g97)" stroke-width="1.3"/><line x1="110.1" y1="181.4" x2="1648.0" y2="394.0" stroke="url(#g98)" stroke-width="1.3"/><line x1="124.2" y1="180.5" x2="1642.5" y2="384.7" stroke="url(#g99)" stroke-width="1.3"/><line x1="138.1" y1="179.6" x2="1644.9" y2="376.8" stroke="url(#g100)" stroke-width="1.3"/><line x1="151.8" y1="178.7" x2="1647.1" y2="369.4" stroke="url(#g101)" stroke-width="1.3"/><line x1="165.2" y1="177.9" x2="1649.2" y2="362.3" stroke="url(#g102)" stroke-width="1.3"/><line x1="178.3" y1="177.0" x2="1644.3" y2="354.8" stroke="url(#g103)" stroke-width="1.3"/><line x1="191.3" y1="176.2" x2="1646.3" y2="348.4" stroke="url(#g104)" stroke-width="1.3"/><line x1="204.1" y1="175.3" x2="1648.3" y2="342.3" stroke="url(#g105)" stroke-width="1.3"/><line x1="216.6" y1="174.5" x2="1643.7" y2="335.7" stroke="url(#g106)" stroke-width="1.3"/><line x1="228.9" y1="173.7" x2="1645.7" y2="330.1" stroke="url(#g107)" stroke-width="1.3"/><line x1="241.1" y1="172.9" x2="1647.5" y2="324.8" stroke="url(#g108)" stroke-width="1.3"/><line x1="253.0" y1="172.2" x2="1649.3" y2="319.7" stroke="url(#g109)" stroke-width="1.3"/><line x1="264.8" y1="171.4" x2="1645.1" y2="314.2" stroke="url(#g110)" stroke-width="1.3"/><line x1="276.4" y1="170.7" x2="1646.9" y2="309.5" stroke="url(#g111)" stroke-width="1.3"/><line x1="287.7" y1="169.9" x2="1648.6" y2="305.0" stroke="url(#g112)" stroke-width="1.3"/><line x1="299.0" y1="169.2" x2="1644.6" y2="300.1" stroke="url(#g113)" stroke-width="1.3"/><line x1="310.0" y1="168.5" x2="1646.3" y2="296.0" stroke="url(#g114)" stroke-width="1.3"/><line x1="320.9" y1="167.8" x2="1647.9" y2="292.0" stroke="url(#g115)" stroke-width="1.3"/><line x1="331.6" y1="167.1" x2="1649.4" y2="288.1" stroke="url(#g116)" stroke-width="1.3"/><line x1="342.1" y1="166.4" x2="1645.7" y2="283.9" stroke="url(#g117)" stroke-width="1.3"/><line x1="352.5" y1="165.7" x2="1647.2" y2="280.4" stroke="url(#g118)" stroke-width="1.3"/><line x1="362.8" y1="165.1" x2="1648.7" y2="276.9" stroke="url(#g119)" stroke-width="1.3"/><line x1="372.8" y1="164.4" x2="1645.2" y2="273.2" stroke="url(#g120)" stroke-width="1.3"/><line x1="382.8" y1="163.8" x2="1646.7" y2="269.9" stroke="url(#g121)" stroke-width="1.3"/><line x1="392.6" y1="163.1" x2="1648.1" y2="266.8" stroke="url(#g122)" stroke-width="1.3"/><line x1="402.2" y1="162.5" x2="1649.5" y2="263.8" stroke="url(#g123)" stroke-width="1.3"/><line x1="411.7" y1="161.9" x2="1646.2" y2="260.5" stroke="url(#g124)" stroke-width="1.3"/><line x1="421.1" y1="161.3" x2="1647.6" y2="257.7" stroke="url(#g125)" stroke-width="1.3"/><line x1="430.4" y1="160.7" x2="1648.9" y2="255.0" stroke="url(#g126)" stroke-width="1.3"/><line x1="439.5" y1="160.1" x2="1645.7" y2="252.0" stroke="url(#g127)" stroke-width="1.3"/><line x1="483.2" y1="157.2" x2="1647.8" y2="239.6" stroke="url(#g128)" stroke-width="1.3"/><line x1="562.4" y1="152.1" x2="1647.6" y2="219.1" stroke="url(#g129)" stroke-width="1.3"/><line x1="632.2" y1="147.6" x2="1647.4" y2="203.2" stroke="url(#g130)" stroke-width="1.3"/><line x1="-33.2" y1="753.9" x2="1492.8" y2="169.0" stroke="url(#g131)" stroke-width="1.9"/><line x1="-49.3" y1="225.0" x2="1638.3" y2="646.1" stroke="url(#g132)" stroke-width="1.9"/></svg><svg width="1920" height="941" style="position:absolute;left:0;top:0">
<defs>
<clipPath id="pc"><polygon points="289.4,414.8 335.3,402.9 362,394.5 390.5,384.9 418,376.5 445.8,368.4 481.7,356.8 505,352.5 528.7,349 556,344.8 584,340.7 620,334.8 659.4,328.1 691.7,332.9 718.75,337.1 737.5,342.3 775,350.6 816.7,359 858.3,364.2 900,371.5 943.75,379.8 983.3,387.1 1025,394.4 1040,398.4 1086.9,406.9 1124.4,415.3 1161.9,422.8 1199.4,429.4 1236.9,435.9 1274.4,444.4 1311.9,451.9 1349.4,460.3 1385,468.4 1369,480.2 1357.6,490.9 1344.2,504.3 1328.9,517.7 1313.6,533 1298.3,546.3 1284.9,559.7 1273.4,575 1263.9,590.3 1250.5,613.3 1237.1,632.4 1223.7,651.5 1212.2,666.8 1195,685.9 1175.9,705 1160.6,720.3 1152,728.5 1095,702.5 1045,686.25 995,665 945,647.5 895,632.5 845,615 795,596.25 750,578.75 720,567.5 690,559.4 655,546.5 619.8,533.6 581.2,518.3 549.5,506.7 514.4,494.2 479.2,482 451,472 416,459.5 385.5,448.5 357.3,438.5 326.9,427.5"/></clipPath>
<linearGradient id="pg" gradientUnits="userSpaceOnUse" x1="700" y1="330" x2="900" y2="720">
<stop offset="0" stop-color="#919294"/><stop offset="0.5" stop-color="#8d8e90"/><stop offset="1" stop-color="#959698"/></linearGradient>
<filter id="turb" x="0" y="0" width="100%" height="100%" filterUnits="objectBoundingBox">
<feTurbulence type="fractalNoise" baseFrequency="0.014 0.15" numOctaves="3" seed="11"/>
<feColorMatrix type="matrix" values="0 0 0 0 0  0 0 0 0 0  0 0 0 0 0  -1.6 0 0 0 0.95"/>
</filter>
</defs>
<polygon points="289.4,414.8 335.3,402.9 362,394.5 390.5,384.9 418,376.5 445.8,368.4 481.7,356.8 505,352.5 528.7,349 556,344.8 584,340.7 620,334.8 659.4,328.1 691.7,332.9 718.75,337.1 737.5,342.3 775,350.6 816.7,359 858.3,364.2 900,371.5 943.75,379.8 983.3,387.1 1025,394.4 1040,398.4 1086.9,406.9 1124.4,415.3 1161.9,422.8 1199.4,429.4 1236.9,435.9 1274.4,444.4 1311.9,451.9 1349.4,460.3 1385,468.4 1369,480.2 1357.6,490.9 1344.2,504.3 1328.9,517.7 1313.6,533 1298.3,546.3 1284.9,559.7 1273.4,575 1263.9,590.3 1250.5,613.3 1237.1,632.4 1223.7,651.5 1212.2,666.8 1195,685.9 1175.9,705 1160.6,720.3 1152,728.5 1095,702.5 1045,686.25 995,665 945,647.5 895,632.5 845,615 795,596.25 750,578.75 720,567.5 690,559.4 655,546.5 619.8,533.6 581.2,518.3 549.5,506.7 514.4,494.2 479.2,482 451,472 416,459.5 385.5,448.5 357.3,438.5 326.9,427.5" fill="url(#pg)"/>
<g clip-path="url(#pc)"><g transform="rotate(9 830 530)"><rect x="200" y="200" width="1300" height="650" filter="url(#turb)" opacity="0.13"/></g></g>
</svg><svg width="1920" height="941" style="position:absolute;left:0;top:0">
<circle cx="609.5" cy="420.5" r="2.6" fill="#111"/>
<g fill="none" stroke="#3a3a3a" stroke-width="1.1" stroke-dasharray="2.6 2.2"><circle cx="814.4" cy="412.5" r="11.8"/><circle cx="814.4" cy="412.5" r="8.3"/></g>
<path d="M814.4 408.5 l2.3 3.5 l-2.3 3.5 l-2.3 -3.5z" fill="none" stroke="#3a3a3a" stroke-width="1"/>
<line x1="814.4" y1="415" x2="814.4" y2="434.6" stroke="#555" stroke-width="1"/>
<circle cx="796.6" cy="436.3" r="12" fill="none" stroke="#fff" stroke-width="1.5"/>
<circle cx="796.6" cy="436.3" r="12" fill="none" stroke="#e01010" stroke-width="1.5" stroke-dasharray="4.7 4.7" stroke-dashoffset="2"/>
<g stroke="#000" stroke-width="1.3"><line x1="796.6" y1="412" x2="796.6" y2="429.5"/><line x1="796.6" y1="442" x2="796.6" y2="459.7"/>
<line x1="778.3" y1="431.4" x2="791.9" y2="434.6"/><line x1="781.3" y1="441.4" x2="792.7" y2="437.2"/>
<line x1="801.2" y1="434.6" x2="812.7" y2="430.4"/><line x1="802.1" y1="437.2" x2="816.5" y2="440.6"/></g>
<circle cx="796.6" cy="436.3" r="2.7" fill="#f5a02a" stroke="#333" stroke-width="0.8"/>
</svg></div></div><div class="a" style="left:1px;top:7px;width:1584px;height:31px;background:#444444;border-radius:0px;border-radius:6px 6px 0 0"></div><div class="a" style="left:11px;top:12px;width:38px;height:23px;background:#282828;border-radius:4px;"></div><svg class="a" style="left:15px;top:13px;" width="24" height="20" viewBox="0 0 24 20"><g stroke="#d8d8d8" stroke-width="1.6" fill="none" stroke-linecap="round"><path d="M2 16 H18 M2 10 H9 M6 7 L4 19 M14 12 L13 19"/></g><circle cx="13" cy="6" r="4.5" fill="#d8d8d8"/><circle cx="12" cy="5" r="2" fill="#999"/></svg><svg class="a" style="left:35px;top:20px;" width="12" height="8" viewBox="0 0 12 8"><path d="M2.0 2.0 L6 6.0 L10.0 2.0" fill="none" stroke="#d0d0d0" stroke-width="1.4" stroke-linecap="round" stroke-linejoin="round"/></svg><svg class="a" style="left:66px;top:12px;" width="24" height="23" viewBox="0 0 24 23"><rect x="1" y="10" width="11" height="11" fill="#e6e6e6"/><path d="M4 8 V1.5 H21.5 V19 H14" fill="none" stroke="#cfcfcf" stroke-width="1.6"/><path d="M11 12 L19 4 M14 4 H19 V9" fill="none" stroke="#e6e6e6" stroke-width="1.8"/></svg><div class="a t" style="left:110px;top:13.2px;color:#e6e6e6;font-size:14px;">Orientation:</div><div class="a" style="left:228px;top:12px;width:123px;height:23px;background:#282828;border-radius:4px;box-shadow:0 1px 0 rgba(0,0,0,0.25), inset 0 0 0 1px rgba(255,255,255,0.05)"></div><div class="a t" style="left:260px;top:12.9px;color:#e6e6e6;font-size:14px;">Default</div><svg class="a" style="left:337px;top:20.5px;" width="12" height="8" viewBox="0 0 12 8"><path d="M2.0 2.0 L6 6.0 L10.0 2.0" fill="none" stroke="#d0d0d0" stroke-width="1.4" stroke-linecap="round" stroke-linejoin="round"/></svg><svg class="a" style="left:232px;top:13px;" width="24" height="22" viewBox="0 0 24 22"><g stroke="#d8d8d8" stroke-width="1.4" fill="none"><path d="M10 3 V11 M7.5 5.5 L10 3 L12.5 5.5 M10 11 L19 11 M16.5 8.5 L19 11 L16.5 13.5 M10 11 L4 17 M4 14 V17 H7"/></g><circle cx="10" cy="11" r="2.5" fill="#d8d8d8"/></svg><div class="a t" style="left:377px;top:13.2px;color:#e6e6e6;font-size:14px;">Drag:</div><div class="a" style="left:425px;top:12px;width:113px;height:23px;background:#282828;border-radius:4px;box-shadow:0 1px 0 rgba(0,0,0,0.25), inset 0 0 0 1px rgba(255,255,255,0.05)"></div><div class="a t" style="left:434px;top:12.9px;color:#e6e6e6;font-size:14px;">Select Box</div><svg class="a" style="left:524px;top:20.5px;" width="12" height="8" viewBox="0 0 12 8"><path d="M2.0 2.0 L6 6.0 L10.0 2.0" fill="none" stroke="#d0d0d0" stroke-width="1.4" stroke-linecap="round" stroke-linejoin="round"/></svg><div class="a" style="left:637px;top:12px;width:98px;height:23px;background:#282828;border-radius:4px;box-shadow:0 1px 0 rgba(0,0,0,0.25), inset 0 0 0 1px rgba(255,255,255,0.05)"></div><div class="a t" style="left:669px;top:12.9px;color:#e6e6e6;font-size:14px;">Global</div><svg class="a" style="left:721px;top:20.5px;" width="12" height="8" viewBox="0 0 12 8"><path d="M2.0 2.0 L6 6.0 L10.0 2.0" fill="none" stroke="#d0d0d0" stroke-width="1.4" stroke-linecap="round" stroke-linejoin="round"/></svg><svg class="a" style="left:641px;top:13px;" width="24" height="22" viewBox="0 0 24 22"><g stroke="#d8d8d8" stroke-width="1.5" fill="none"><path d="M5 3 V18 H20 M3 5.5 L5 3 L7 5.5 M17.5 15.5 L20 18 L17.5 20.5 M5 18 L13 9 M9 9 H13 V13"/></g><circle cx="5" cy="18" r="2" fill="none" stroke="#d8d8d8" stroke-width="1.4"/></svg><div class="a" style="left:743px;top:12px;width:38px;height:23px;background:#282828;border-radius:4px;box-shadow:0 1px 0 rgba(0,0,0,0.25), inset 0 0 0 1px rgba(255,255,255,0.05)"></div><svg class="a" style="left:765px;top:20.5px;" width="12" height="8" viewBox="0 0 12 8"><path d="M2.0 2.0 L6 6.0 L10.0 2.0" fill="none" stroke="#d0d0d0" stroke-width="1.4" stroke-linecap="round" stroke-linejoin="round"/></svg><svg class="a" style="left:747px;top:13px;" width="22" height="22" viewBox="0 0 22 22"><g fill="none" stroke="#d8d8d8" stroke-width="1.6"><circle cx="8" cy="13" r="5"/><circle cx="13" cy="8" r="5"/></g><circle cx="8" cy="13" r="1.8" fill="#d8d8d8"/></svg><div class="a" style="left:789px;top:12px;width:63px;height:23px;background:#282828;border-radius:4px;"></div><div class="a" style="left:789px;top:12px;width:23px;height:23px;background:#545454;border-radius:0px;border-radius:4px 0 0 4px"></div><svg class="a" style="left:791px;top:13px;" width="20" height="22" viewBox="0 0 20 22"><path d="M6 18 L4.5 12 C3 6 8 3 11 4 C15 5 17 9 14 13 L12 15 M9 17 L8 13 C7 9 10 7 12 9 C13.5 10.5 12 12 11 13" fill="none" stroke="#9b9b9b" stroke-width="1.6"/></svg><svg class="a" style="left:814px;top:13px;" width="24" height="22" viewBox="0 0 24 22"><rect x="15" y="2" width="5" height="5" fill="#e6e6e6"/><path d="M3 12 V20 M10 12 V20 M17 10 V20 M3 16 H17 M6.5 14 V18 M13.5 14 V18" stroke="#e6e6e6" stroke-width="1.5" fill="none"/></svg><svg class="a" style="left:839px;top:20px;" width="12" height="8" viewBox="0 0 12 8"><path d="M2.0 2.0 L6 6.0 L10.0 2.0" fill="none" stroke="#d0d0d0" stroke-width="1.4" stroke-linecap="round" stroke-linejoin="round"/></svg><div class="a" style="left:860px;top:12px;width:63px;height:23px;background:#282828;border-radius:4px;"></div><div class="a" style="left:860px;top:12px;width:23px;height:23px;background:#545454;border-radius:0px;border-radius:4px 0 0 4px"></div><svg class="a" style="left:860px;top:12px;" width="23" height="23" viewBox="0 0 23 23"><circle cx="11.5" cy="11.5" r="6.5" fill="none" stroke="#999" stroke-width="1.5"/><circle cx="11.5" cy="11.5" r="2.3" fill="#d8d8d8"/></svg><svg class="a" style="left:886px;top:13px;" width="24" height="22" viewBox="0 0 24 22"><path d="M2 19 C6 19 7 3 11 3 C15 3 16 19 20 19" fill="none" stroke="#888" stroke-width="1.5"/></svg><svg class="a" style="left:908px;top:20px;" width="12" height="8" viewBox="0 0 12 8"><path d="M2.0 2.0 L6 6.0 L10.0 2.0" fill="none" stroke="#777" stroke-width="1.4" stroke-linecap="round" stroke-linejoin="round"/></svg><div class="a" style="left:1497px;top:12px;width:79px;height:23px;background:#282828;border-radius:4px;box-shadow:0 1px 0 rgba(0,0,0,0.25), inset 0 0 0 1px rgba(255,255,255,0.05)"></div><div class="a t" style="left:1506px;top:12.9px;color:#e6e6e6;font-size:14px;">Options</div><svg class="a" style="left:1562px;top:20.5px;" width="12" height="8" viewBox="0 0 12 8"><path d="M2.0 2.0 L6 6.0 L10.0 2.0" fill="none" stroke="#d0d0d0" stroke-width="1.4" stroke-linecap="round" stroke-linejoin="round"/></svg><div class="a" style="left:12px;top:43px;width:135px;height:23px;background:#282828;border-radius:4px;box-shadow:0 1px 0 rgba(0,0,0,0.25), inset 0 0 0 1px rgba(255,255,255,0.05)"></div><div class="a t" style="left:44px;top:43.9px;color:#e6e6e6;font-size:14px;">Object Mode</div><svg class="a" style="left:133px;top:51.5px;" width="12" height="8" viewBox="0 0 12 8"><path d="M2.0 2.0 L6 6.0 L10.0 2.0" fill="none" stroke="#d0d0d0" stroke-width="1.4" stroke-linecap="round" stroke-linejoin="round"/></svg><svg class="a" style="left:16px;top:45px;" width="20" height="20" viewBox="0 0 20 20"><rect x="5" y="5" width="10" height="10" fill="#e0e0e0"/><path d="M1.5 5 V1.5 H5 M15 1.5 H18.5 V5 M18.5 15 V18.5 H15 M5 18.5 H1.5 V15" fill="none" stroke="#bdbdbd" stroke-width="1.4"/></svg><div class="a" style="left:155px;top:43px;width:48px;height:23px;background:#363636;border-radius:4px;"></div><div class="a t" style="left:29.0px;width:300px;text-align:center;top:44.4px;color:#e6e6e6;font-size:14px;">View</div><div class="a" style="left:205px;top:43px;width:56px;height:23px;background:#363636;border-radius:4px;"></div><div class="a t" style="left:83.0px;width:300px;text-align:center;top:44.4px;color:#e6e6e6;font-size:14px;">Select</div><div class="a" style="left:263px;top:43px;width:42px;height:23px;background:#363636;border-radius:4px;"></div><div class="a t" style="left:134.0px;width:300px;text-align:center;top:44.4px;color:#e6e6e6;font-size:14px;">Add</div><div class="a" style="left:307px;top:43px;width:58px;height:23px;background:#363636;border-radius:4px;"></div><div class="a t" style="left:186.0px;width:300px;text-align:center;top:44.4px;color:#e6e6e6;font-size:14px;">Object</div><div class="a" style="left:1267px;top:43px;width:38px;height:23px;background:#282828;border-radius:4px;"></div><svg class="a" style="left:1269px;top:44px;" width="24" height="22" viewBox="0 0 24 22"><path d="M4 8 L11 19 L12 14 L17 14 Z" fill="#d8d8d8"/><path d="M8 6 C11 1 17 1 20 6 C17 11 11 11 8 6 Z" fill="none" stroke="#d8d8d8" stroke-width="1.5"/><circle cx="14" cy="6" r="2" fill="#d8d8d8"/></svg><svg class="a" style="left:1291px;top:51px;" width="12" height="8" viewBox="0 0 12 8"><path d="M2.0 2.0 L6 6.0 L10.0 2.0" fill="none" stroke="#d0d0d0" stroke-width="1.4" stroke-linecap="round" stroke-linejoin="round"/></svg><div class="a" style="left:1313px;top:43px;width:48px;height:23px;background:#282828;border-radius:4px;"></div><div class="a" style="left:1313px;top:43px;width:23px;height:23px;background:#5680c2;border-radius:0px;border-radius:4px 0 0 4px"></div><svg class="a" style="left:1313px;top:43px;" width="23" height="23" viewBox="0 0 23 23"><path d="M5 19 C6 12 11 8 18 6 M13 5 H18.5 V10.5" fill="none" stroke="#fff" stroke-width="1.5"/><circle cx="5.5" cy="18" r="2.3" fill="none" stroke="#fff" stroke-width="1.4"/></svg><svg class="a" style="left:1342px;top:51px;" width="12" height="8" viewBox="0 0 12 8"><path d="M2.0 2.0 L6 6.0 L10.0 2.0" fill="none" stroke="#d0d0d0" stroke-width="1.4" stroke-linecap="round" stroke-linejoin="round"/></svg><div class="a" style="left:1369px;top:43px;width:49px;height:23px;background:#282828;border-radius:4px;"></div><div class="a" style="left:1369px;top:43px;width:23px;height:23px;background:#5680c2;border-radius:0px;border-radius:4px 0 0 4px"></div><svg class="a" style="left:1369px;top:43px;" width="23" height="23" viewBox="0 0 23 23"><circle cx="10" cy="13" r="6" fill="none" stroke="#fff" stroke-width="1.6"/><circle cx="13" cy="10" r="6" fill="#fff"/><circle cx="10" cy="13" r="3.5" fill="#5680c2"/></svg><svg class="a" style="left:1398px;top:51px;" width="12" height="8" viewBox="0 0 12 8"><path d="M2.0 2.0 L6 6.0 L10.0 2.0" fill="none" stroke="#d0d0d0" stroke-width="1.4" stroke-linecap="round" stroke-linejoin="round"/></svg><div class="a" style="left:1425px;top:43px;width:23px;height:23px;background:#545454;border-radius:4px;"></div><svg class="a" style="left:1425px;top:43px;" width="23" height="23" viewBox="0 0 23 23"><rect x="4" y="8" width="11" height="11" fill="none" stroke="#cfcfcf" stroke-width="1.4"/><path d="M8 8 V4 H19 V15 H15" fill="none" stroke="#cfcfcf" stroke-width="1.4"/></svg><div class="a" style="left:1456px;top:43px;width:120px;height:23px;background:#282828;border-radius:4px;"></div><div class="a" style="left:1456px;top:43px;width:96px;height:23px;background:#545454;border-radius:0px;border-radius:4px 0 0 4px"></div><div class="a" style="left:1480px;top:43px;width:24px;height:23px;background:#5680c2;border-radius:0px;"></div><svg class="a" style="left:1456px;top:43px;" width="24" height="23" viewBox="0 0 24 23"><circle cx="12" cy="11.5" r="7" fill="none" stroke="#cfcfcf" stroke-width="1.3"/><ellipse cx="12" cy="11.5" rx="3" ry="7" fill="none" stroke="#cfcfcf" stroke-width="1.2"/><path d="M5 11.5 H19" stroke="#cfcfcf" stroke-width="1.2"/></svg><svg class="a" style="left:1480px;top:43px;" width="24" height="23" viewBox="0 0 24 23"><circle cx="12" cy="11.5" r="7.5" fill="#fff"/></svg><svg class="a" style="left:1504px;top:43px;" width="24" height="23" viewBox="0 0 24 23"><circle cx="12" cy="11.5" r="7" fill="none" stroke="#ddd" stroke-width="1.4"/><path d="M12 4.5 A7 7 0 0 0 12 18.5 Z" fill="#ddd"/><path d="M12 11.5 L18 8 A7 7 0 0 0 12 4.5Z" fill="#aaa"/></svg><svg class="a" style="left:1528px;top:43px;" width="24" height="23" viewBox="0 0 24 23"><circle cx="12" cy="11.5" r="7" fill="none" stroke="#ddd" stroke-width="1.4"/><path d="M7 13 A5 5 0 0 1 12 6.5" fill="none" stroke="#ddd" stroke-width="1.4"/></svg><svg class="a" style="left:1558px;top:51px;" width="12" height="8" viewBox="0 0 12 8"><path d="M2.0 2.0 L6 6.0 L10.0 2.0" fill="none" stroke="#d0d0d0" stroke-width="1.4" stroke-linecap="round" stroke-linejoin="round"/></svg><div class="a" style="left:11px;top:81px;width:51px;height:85px;background:#2c2c2c;border-radius:6px;"></div><div class="a" style="left:11px;top:173px;width:51px;height:169px;background:#2c2c2c;border-radius:6px;"></div><div class="a" style="left:11px;top:351px;width:51px;height:85px;background:#2c2c2c;border-radius:6px;"></div><div class="a" style="left:11px;top:443px;width:51px;height:42px;background:#2c2c2c;border-radius:6px;"></div><div class="a" style="left:11px;top:258px;width:51px;height:42px;background:#5680c2;border-radius:0px;"></div><svg class="a" style="left:53px;top:114px;" width="6" height="6" viewBox="0 0 6 6"><path d="M6 0 V6 H0 Z" fill="#bbb"/></svg><svg class="a" style="left:53px;top:291px;" width="6" height="6" viewBox="0 0 6 6"><path d="M6 0 V6 H0 Z" fill="#bbb"/></svg><svg class="a" style="left:53px;top:385px;" width="6" height="6" viewBox="0 0 6 6"><path d="M6 0 V6 H0 Z" fill="#bbb"/></svg><svg class="a" style="left:53px;top:427px;" width="6" height="6" viewBox="0 0 6 6"><path d="M6 0 V6 H0 Z" fill="#bbb"/></svg><svg class="a" style="left:53px;top:476px;" width="6" height="6" viewBox="0 0 6 6"><path d="M6 0 V6 H0 Z" fill="#bbb"/></svg><svg class="a" style="left:19px;top:88px;" width="34" height="30" viewBox="0 0 34 30"><rect x="3" y="3" width="26" height="24" fill="none" stroke="#d6a54f" stroke-width="2" stroke-dasharray="4 3"/><path d="M11.4 6.6 L11.4 20.6 L22 14.2 Z" fill="#e6e6e6"/></svg><svg class="a" style="left:18px;top:128px;" width="34" height="34" viewBox="0 0 34 34"><circle cx="16.6" cy="16.4" r="14" fill="none" stroke="#eee" stroke-width="2"/><circle cx="16.6" cy="16.4" r="14" fill="none" stroke="#a0333b" stroke-width="2" stroke-dasharray="7.3 7.3" stroke-dashoffset="3.6"/><path d="M16.6 8 V13 M16.6 20 V25 M8 16.4 H13 M20 16.4 H25" stroke="#9a9a9a" stroke-width="1.5"/></svg><svg class="a" style="left:19px;top:179px;" width="32" height="32" viewBox="0 0 32 32"><path d="M15.6 1 L11.6 6 H19.6Z M15.6 30 L11.6 25 H19.6Z M1 15 L6 11 V19Z M30 15 L25 11 V19Z" fill="#e6e6e6"/><path d="M15.6 9 V12.5 M15.6 17.5 V21 M9 15 H12.5 M18.5 15 H22" stroke="#e6e6e6" stroke-width="1.6"/></svg><svg class="a" style="left:18px;top:220px;" width="34" height="32" viewBox="0 0 34 32"><path d="M6 11 A11 11 0 0 1 28 11 M28 21 A11 11 0 0 1 6 21" fill="none" stroke="#e6e6e6" stroke-width="1.6"/><path d="M2 11 H10 L6 17Z M24 21 H32 L28 15Z" fill="#e6e6e6"/><path d="M17 10 L23 16 L17 22 L11 16Z" fill="#aaa"/></svg><svg class="a" style="left:20px;top:265px;" width="30" height="30" viewBox="0 0 30 30"><rect x="5" y="13" width="11" height="11" fill="#e6e6e6"/><path d="M8 10 V5 H24 V21 H19" fill="none" stroke="#c7d4ea" stroke-width="1.5"/><path d="M15 14 L22 7 M17 7 H22 V12" fill="none" stroke="#fff" stroke-width="1.6"/></svg><svg class="a" style="left:19px;top:306px;" width="32" height="32" viewBox="0 0 32 32"><circle cx="16" cy="16" r="11.5" fill="none" stroke="#e6e6e6" stroke-width="1.6" stroke-dasharray="9 4" stroke-dashoffset="4"/><rect x="11" y="11" width="10" height="10" fill="#e6e6e6"/><path d="M16 2 L13 6 H19Z M16 30 L13 26 H19Z M2 16 L6 13 V19Z M30 16 L26 13 V19Z" fill="#e6e6e6"/></svg><svg class="a" style="left:18px;top:356px;" width="36" height="32" viewBox="0 0 36 32"><path d="M8 17 L22 3 L26 7 L12 21 L7 22Z" fill="#e6e6e6"/><path d="M3 24 C8 17 13 30 18 24 C22 19 27 24 32 23" fill="none" stroke="#6fcf97" stroke-width="1.8"/></svg><svg class="a" style="left:20px;top:398px;" width="32" height="32" viewBox="0 0 32 32"><path d="M5 3 V27 H28" fill="none" stroke="#e6e6e6" stroke-width="3"/><path d="M8 25 V11 A14 14 0 0 1 22 25Z" fill="#6fcf97"/><path d="M5 8 H8 M5 13 H8 M5 18 H8 M11 27 V24 M16 27 V24 M21 27 V24" stroke="#e6e6e6" stroke-width="1.2"/></svg><svg class="a" style="left:18px;top:447px;" width="36" height="34" viewBox="0 0 36 34"><path d="M10 14 L14 10 H30 V26 L26 30 H10Z M10 14 H26 V30 M26 14 L30 10" fill="none" stroke="#6fcf97" stroke-width="1.5"/><path d="M3 6 H11 M7 2 V10" stroke="#6fcf97" stroke-width="2"/></svg><div class="a t" style="left:84px;top:81.2px;color:#e6e6e6;font-size:14px;text-shadow:0 1px 1px rgba(0,0,0,0.35)">User Perspective</div><div class="a t" style="left:84px;top:103.9px;color:#e6e6e6;font-size:14px;text-shadow:0 1px 1px rgba(0,0,0,0.35)">(1) Collection | Plane</div><svg class="a" style="left:1480px;top:80px;" width="90" height="102" viewBox="0 0 90 102">
    <line x1="42.9" y1="52" x2="42.9" y2="20" stroke="#3d8ae6" stroke-width="2"/>
    <line x1="42.9" y1="52" x2="67.7" y2="41.8" stroke="#7aa82b" stroke-width="2"/>
    <line x1="42.9" y1="52" x2="74.5" y2="60.1" stroke="#e84a5f" stroke-width="2"/>
    <circle cx="12.3" cy="43.4" r="9.5" fill="#6a3a42" stroke="#a53c4c" stroke-width="1.2"/>
    <circle cx="17.3" cy="62.2" r="9.5" fill="#4f6234" stroke="#86d42a" stroke-width="1.5"/>
    <circle cx="42.9" cy="89.4" r="9.5" fill="#34496a" stroke="#3d79c6" stroke-width="1.2"/>
    <circle cx="42.9" cy="14.2" r="10" fill="#3d8ae6"/>
    <circle cx="67.7" cy="41.8" r="10" fill="#6f9a24"/>
    <circle cx="74.5" cy="60.1" r="10" fill="#e8344e"/>
    <text x="42.9" y="19" font-family="Liberation Sans" font-size="13" font-weight="bold" fill="#1a1a1a" text-anchor="middle">Z</text>
    <text x="67.7" y="46.6" font-family="Liberation Sans" font-size="13" font-weight="bold" fill="#1a1a1a" text-anchor="middle">Y</text>
    <text x="74.5" y="64.9" font-family="Liberation Sans" font-size="13" font-weight="bold" fill="#1a1a1a" text-anchor="middle">X</text>
    </svg><div class="a" style="left:1540px;top:183.7px;width:34px;height:34px;background:#363636;border-radius:17px;"></div><div class="a" style="left:1540px;top:220.5px;width:34px;height:34px;background:#363636;border-radius:17px;"></div><div class="a" style="left:1540px;top:258.5px;width:34px;height:34px;background:#363636;border-radius:17px;"></div><div class="a" style="left:1540px;top:296px;width:34px;height:34px;background:#363636;border-radius:17px;"></div><svg class="a" style="left:1545px;top:189px;" width="24" height="24" viewBox="0 0 24 24"><circle cx="13.5" cy="10" r="6.5" fill="none" stroke="#e6e6e6" stroke-width="2"/><path d="M9 14.5 L3 20.5" stroke="#e6e6e6" stroke-width="3" stroke-linecap="round"/><path d="M13.5 6.5 V13.5 M10 10 H17" stroke="#e6e6e6" stroke-width="1.6"/></svg><svg class="a" style="left:1545px;top:226px;" width="24" height="24" viewBox="0 0 24 24"><path d="M6 12 V6 C6 4.5 8 4.5 8 6 V11 V4 C8 2.5 10.5 2.5 10.5 4 V11 V3.5 C10.5 2 13 2 13 3.5 V11 V5 C13 3.5 15.5 3.5 15.5 5 V13 L17.5 10.5 C18.5 9 20.5 10 19.5 11.5 L15 19 C14 21 12 22 10 22 C7 22 6 20 6 17 Z" fill="#e6e6e6"/></svg><svg class="a" style="left:1545px;top:264px;" width="24" height="24" viewBox="0 0 24 24"><circle cx="8" cy="7" r="4.5" fill="#e6e6e6"/><circle cx="15.5" cy="7" r="4" fill="#e6e6e6"/><rect x="4" y="11" width="13" height="9" rx="1.5" fill="#e6e6e6"/><path d="M17 14 L22 11 V20 L17 17Z" fill="#e6e6e6"/><circle cx="8" cy="7" r="1.5" fill="#363636"/><circle cx="15.5" cy="7" r="1.3" fill="#363636"/></svg><svg class="a" style="left:1545px;top:301px;" width="24" height="24" viewBox="0 0 24 24"><path d="M7 3 H17 L21 21 H3 Z" fill="none" stroke="#e6e6e6" stroke-width="1.6"/><path d="M10 3 L8.5 21 M14 3 L15.5 21 M5.5 9 H18.5 M4.5 15 H19.5" stroke="#e6e6e6" stroke-width="1.5"/></svg><svg class="a" style="left:1574px;top:90px;" width="10" height="14" viewBox="0 0 10 14"><path d="M7 2 L3 7 L7 12" fill="none" stroke="#aaa" stroke-width="1.4"/></svg><div class="a" style="left:1588px;top:7px;width:330px;height:297px;background:#282828;border-radius:0px;border-radius:6px 6px 6px 6px"></div><div class="a" style="left:1588px;top:7px;width:330px;height:31px;background:#3d3d3d;border-radius:0px;border-radius:6px 6px 0 0"></div><div class="a" style="left:1588px;top:64px;width:330px;height:25px;background:#2b2b2b;border-radius:0px;"></div><div class="a" style="left:1588px;top:114px;width:330px;height:25px;background:#2b2b2b;border-radius:0px;"></div><div class="a" style="left:1588px;top:164px;width:330px;height:25px;background:#2b2b2b;border-radius:0px;"></div><div class="a" style="left:1588px;top:214px;width:330px;height:25px;background:#2b2b2b;border-radius:0px;"></div><div class="a" style="left:1588px;top:264px;width:330px;height:25px;background:#2b2b2b;border-radius:0px;"></div><div class="a" style="left:1599px;top:10px;width:38px;height:24px;background:#282828;border-radius:4px;box-shadow:0 1px 0 rgba(0,0,0,0.25), inset 0 0 0 1px rgba(255,255,255,0.05)"></div><svg class="a" style="left:1623px;top:19.0px;" width="12" height="8" viewBox="0 0 12 8"><path d="M2.0 2.0 L6 6.0 L10.0 2.0" fill="none" stroke="#d0d0d0" stroke-width="1.4" stroke-linecap="round" stroke-linejoin="round"/></svg><svg class="a" style="left:1602px;top:12px;" width="22" height="20" viewBox="0 0 22 20"><rect x="2" y="2" width="6" height="3" fill="#ddd"/><path d="M4 5 V15 H8 M4 10 H8" fill="none" stroke="#ddd" stroke-width="1.3"/><rect x="8" y="8" width="10" height="4" fill="#ddd"/><rect x="8" y="13" width="10" height="4" fill="#ddd"/></svg><div class="a" style="left:1645px;top:10px;width:38px;height:24px;background:#282828;border-radius:4px;box-shadow:0 1px 0 rgba(0,0,0,0.25), inset 0 0 0 1px rgba(255,255,255,0.05)"></div><svg class="a" style="left:1669px;top:19.0px;" width="12" height="8" viewBox="0 0 12 8"><path d="M2.0 2.0 L6 6.0 L10.0 2.0" fill="none" stroke="#d0d0d0" stroke-width="1.4" stroke-linecap="round" stroke-linejoin="round"/></svg><svg class="a" style="left:1647px;top:12px;" width="22" height="20" viewBox="0 0 22 20"><rect x="7" y="2" width="11" height="11" fill="none" stroke="#ddd" stroke-width="1.4"/><path d="M8 12 L11 7 L13 10 L15 8 L17 12Z" fill="#ddd"/><circle cx="15" cy="5" r="1.3" fill="#ddd"/><path d="M5 5 V15 H15 M3 7 V17 H13" fill="none" stroke="#ddd" stroke-width="1.2"/></svg><div class="a" style="left:1704px;top:11px;width:141px;height:23px;background:#1d1d1d;border-radius:5px;"></div><svg class="a" style="left:1708px;top:12px;" width="22" height="22" viewBox="0 0 22 22"><circle cx="13" cy="9" r="5.5" fill="none" stroke="#ddd" stroke-width="1.5"/><path d="M9 13 L3 19" stroke="#ddd" stroke-width="1.6"/></svg><div class="a" style="left:1866px;top:10px;width:39px;height:24px;background:#282828;border-radius:4px;box-shadow:0 1px 0 rgba(0,0,0,0.25), inset 0 0 0 1px rgba(255,255,255,0.05)"></div><svg class="a" style="left:1891px;top:19.0px;" width="12" height="8" viewBox="0 0 12 8"><path d="M2.0 2.0 L6 6.0 L10.0 2.0" fill="none" stroke="#d0d0d0" stroke-width="1.4" stroke-linecap="round" stroke-linejoin="round"/></svg><svg class="a" style="left:1868px;top:12px;" width="20" height="20" viewBox="0 0 20 20"><path d="M2 3 H18 L12 11 V18 L8 15 V11Z" fill="none" stroke="#ddd" stroke-width="1.5" stroke-linejoin="round"/></svg><div class="a" style="left:1912px;top:10px;width:10px;height:24px;background:#545454;border-radius:4px;"></div><svg class="a" style="left:1616px;top:43px;" width="20" height="18" viewBox="0 0 20 18"><rect x="1" y="1" width="17" height="4" fill="#ddd"/><rect x="2" y="6" width="15" height="11" fill="#ddd"/><rect x="7" y="9" width="5" height="2" fill="#282828"/></svg><div class="a t" style="left:1643px;top:43.0px;color:#e6e6e6;font-size:14px;">Scene Collection</div><svg class="a" style="left:1620px;top:72px;" width="10" height="10" viewBox="0 0 10 10"><path d="M1 2 H9 L5 8Z" fill="#ccc"/></svg><div class="a" style="left:1638px;top:65px;width:25px;height:24px;background:#4a4a4a;border-radius:5px;"></div><svg class="a" style="left:1641px;top:68px;" width="20" height="18" viewBox="0 0 20 18"><rect x="1" y="1" width="17" height="4" fill="#ddd"/><rect x="2" y="6" width="15" height="11" fill="#ddd"/><rect x="7" y="9" width="5" height="2" fill="#4a4a4a"/></svg><div class="a t" style="left:1668px;top:68.1px;color:#e6e6e6;font-size:14px;">Collection</div><div class="a" style="left:1841px;top:70px;width:14px;height:14px;background:#e6e6e6;border-radius:3px;"></div><svg class="a" style="left:1841px;top:70px;" width="14" height="14" viewBox="0 0 14 14"><path d="M3 7 L6 10 L11 4" fill="none" stroke="#282828" stroke-width="2"/></svg><svg class="a" style="left:1864px;top:70px;" width="18" height="14" viewBox="0 0 18 14"><path d="M1 7 C4 1.5 14 1.5 17 7 C14 12.5 4 12.5 1 7Z" fill="none" stroke="#e6e6e6" stroke-width="1.6"/><circle cx="9" cy="7" r="3" fill="#e6e6e6"/><circle cx="9" cy="7" r="1.2" fill="#282828"/></svg><svg class="a" style="left:1888px;top:69px;" width="18" height="16" viewBox="0 0 18 16"><path d="M1 4 H5 L6.5 1.5 H11.5 L13 4 H17 V15 H1Z" fill="#e6e6e6"/><circle cx="9" cy="9.2" r="3.8" fill="#282828"/><circle cx="9" cy="9.2" r="2.3" fill="#e6e6e6"/></svg><svg class="a" style="left:1864px;top:95px;" width="18" height="14" viewBox="0 0 18 14"><path d="M1 7 C4 1.5 14 1.5 17 7 C14 12.5 4 12.5 1 7Z" fill="none" stroke="#e6e6e6" stroke-width="1.6"/><circle cx="9" cy="7" r="3" fill="#e6e6e6"/><circle cx="9" cy="7" r="1.2" fill="#282828"/></svg><svg class="a" style="left:1888px;top:94px;" width="18" height="16" viewBox="0 0 18 16"><path d="M1 4 H5 L6.5 1.5 H11.5 L13 4 H17 V15 H1Z" fill="#e6e6e6"/><circle cx="9" cy="9.2" r="3.8" fill="#282828"/><circle cx="9" cy="9.2" r="2.3" fill="#e6e6e6"/></svg><svg class="a" style="left:1864px;top:120px;" width="18" height="14" viewBox="0 0 18 14"><path d="M1 7 C4 1.5 14 1.5 17 7 C14 12.5 4 12.5 1 7Z" fill="none" stroke="#e6e6e6" stroke-width="1.6"/><circle cx="9" cy="7" r="3" fill="#e6e6e6"/><circle cx="9" cy="7" r="1.2" fill="#282828"/></svg><svg class="a" style="left:1888px;top:119px;" width="18" height="16" viewBox="0 0 18 16"><path d="M1 4 H5 L6.5 1.5 H11.5 L13 4 H17 V15 H1Z" fill="#e6e6e6"/><circle cx="9" cy="9.2" r="3.8" fill="#282828"/><circle cx="9" cy="9.2" r="2.3" fill="#e6e6e6"/></svg><svg class="a" style="left:1864px;top:145px;" width="18" height="14" viewBox="0 0 18 14"><path d="M1 7 C4 1.5 14 1.5 17 7 C14 12.5 4 12.5 1 7Z" fill="none" stroke="#e6e6e6" stroke-width="1.6"/><circle cx="9" cy="7" r="3" fill="#e6e6e6"/><circle cx="9" cy="7" r="1.2" fill="#282828"/></svg><svg class="a" style="left:1888px;top:144px;" width="18" height="16" viewBox="0 0 18 16"><path d="M1 4 H5 L6.5 1.5 H11.5 L13 4 H17 V15 H1Z" fill="#e6e6e6"/><circle cx="9" cy="9.2" r="3.8" fill="#282828"/><circle cx="9" cy="9.2" r="2.3" fill="#e6e6e6"/></svg><div class="a" style="left:1624px;top:95px;width:1px;height:63px;background:#555;border-radius:0px;"></div><svg class="a" style="left:1646px;top:97px;" width="10" height="10" viewBox="0 0 10 10"><path d="M2 1 V9 L8 5Z" fill="#bbb"/></svg><svg class="a" style="left:1646px;top:122px;" width="10" height="10" viewBox="0 0 10 10"><path d="M2 1 V9 L8 5Z" fill="#bbb"/></svg><svg class="a" style="left:1646px;top:147px;" width="10" height="10" viewBox="0 0 10 10"><path d="M2 1 V9 L8 5Z" fill="#bbb"/></svg><svg class="a" style="left:1666px;top:93px;" width="19" height="18" viewBox="0 0 19 18"><circle cx="5" cy="5" r="4" fill="#e6954b"/><circle cx="13" cy="4.5" r="4" fill="#e6954b"/><rect x="3" y="9" width="11" height="8" fill="#e6954b"/><path d="M14 12 L18 9 V17 L14 14Z" fill="#e6954b"/><circle cx="5" cy="5" r="1.3" fill="#282828"/><circle cx="13" cy="4.5" r="1.3" fill="#282828"/></svg><div class="a t" style="left:1693px;top:93.2px;color:#e6e6e6;font-size:14px;">Camera</div><div class="a" style="left:1769px;top:90px;width:25px;height:24px;background:#4a4a4a;border-radius:5px;"></div><svg class="a" style="left:1771px;top:92px;" width="21" height="20" viewBox="0 0 21 20"><path d="M3 9 C1 6 3 2 6 3 C8 1 12 1 13 4 C16 2 19 5 17 9Z" fill="none" stroke="#2bb5a0" stroke-width="1.4"/><rect x="5" y="10" width="10" height="7" fill="none" stroke="#2bb5a0" stroke-width="1.4"/><path d="M15 12 L19 10 V17 L15 15" fill="none" stroke="#2bb5a0" stroke-width="1.4"/></svg><svg class="a" style="left:1667px;top:118px;" width="17" height="18" viewBox="0 0 17 18"><circle cx="8.5" cy="7" r="6.5" fill="#e6954b"/><rect x="5.5" y="12" width="6" height="5" fill="#e6954b"/><path d="M6 6 V10 M11 6 V10 M6 7 H11" stroke="#282828" stroke-width="1.2"/></svg><div class="a t" style="left:1693px;top:118.2px;color:#e6e6e6;font-size:14px;">Light</div><svg class="a" style="left:1752px;top:118px;" width="18" height="18" viewBox="0 0 18 18"><path d="M5 16 A8 8 0 1 1 13 16" fill="none" stroke="#2bb5a0" stroke-width="1.5"/><circle cx="9" cy="8" r="1.6" fill="none" stroke="#2bb5a0" stroke-width="1.2"/><path d="M9 10 V17" stroke="#2bb5a0" stroke-width="1.3" stroke-dasharray="2 1.5"/></svg><div class="a" style="left:1663px;top:140px;width:25px;height:24px;background:#4a4a4a;border-radius:5px;"></div><svg class="a" style="left:1666px;top:143px;" width="19" height="18" viewBox="0 0 19 18"><path d="M1.5 2 H17.5 L9.5 17Z" fill="#e6954b"/><path d="M6 5.5 H13 L9.5 12Z" fill="#4a4a4a"/></svg><div class="a t" style="left:1693px;top:143.2px;color:#e6e6e6;font-size:14px;">Plane</div><svg class="a" style="left:1756px;top:143px;" width="18" height="18" viewBox="0 0 18 18"><path d="M2 16 L9 9 C8 5 10 2 14 2 L11.5 5 L13 7 L16 4.5 C16 9 13 10.5 10 10 L3.5 17Z" fill="none" stroke="#6a9be0" stroke-width="1.5" stroke-linejoin="round"/></svg><svg class="a" style="left:1781px;top:142px;" width="19" height="19" viewBox="0 0 19 19"><path d="M3 3 H16 L9.5 16Z" fill="none" stroke="#2bb5a0" stroke-width="1.4"/><rect x="1" y="1" width="4" height="4" fill="#282828" stroke="#2bb5a0" stroke-width="1.3"/><rect x="14" y="1" width="4" height="4" fill="#282828" stroke="#2bb5a0" stroke-width="1.3"/><rect x="7.5" y="14" width="4" height="4" fill="#282828" stroke="#2bb5a0" stroke-width="1.3"/></svg><div class="a" style="left:1588px;top:307px;width:330px;height:629px;background:#424242;border-radius:0px;border-radius:6px 6px 6px 6px;overflow:hidden"></div><div class="a" style="left:1588px;top:338px;width:35px;height:598px;background:#242424;border-radius:0px;border-radius:0 0 0 6px"></div><div class="a" style="left:1588px;top:307px;width:330px;height:31px;background:#3d3d3d;border-radius:0px;border-radius:6px 6px 0 0"></div><div class="a" style="left:1599px;top:311px;width:38px;height:23px;background:#282828;border-radius:4px;box-shadow:0 1px 0 rgba(0,0,0,0.25), inset 0 0 0 1px rgba(255,255,255,0.05)"></div><svg class="a" style="left:1623px;top:319.5px;" width="12" height="8" viewBox="0 0 12 8"><path d="M2.0 2.0 L6 6.0 L10.0 2.0" fill="none" stroke="#d0d0d0" stroke-width="1.4" stroke-linecap="round" stroke-linejoin="round"/></svg><svg class="a" style="left:1602px;top:312px;" width="22" height="22" viewBox="0 0 22 22"><rect x="2" y="3" width="16" height="7" rx="3.5" fill="#ddd"/><rect x="9" y="4.5" width="7" height="4" fill="#282828"/><rect x="2" y="12" width="16" height="7" rx="3.5" fill="#ddd"/><rect x="12" y="13.5" width="4" height="4" fill="#282828"/></svg><div class="a" style="left:1676px;top:311px;width:142px;height:23px;background:#1d1d1d;border-radius:5px;"></div><svg class="a" style="left:1680px;top:312px;" width="22" height="22" viewBox="0 0 22 22"><circle cx="13" cy="9" r="5.5" fill="none" stroke="#ddd" stroke-width="1.5"/><path d="M9 13 L3 19" stroke="#ddd" stroke-width="1.6"/></svg><div class="a" style="left:1884px;top:311px;width:24px;height:23px;background:#282828;border-radius:4px;box-shadow:0 1px 0 rgba(0,0,0,0.25), inset 0 0 0 1px rgba(255,255,255,0.05)"></div><svg class="a" style="left:1890px;top:319.5px;" width="12" height="8" viewBox="0 0 12 8"><path d="M2.0 2.0 L6 6.0 L10.0 2.0" fill="none" stroke="#d0d0d0" stroke-width="1.4" stroke-linecap="round" stroke-linejoin="round"/></svg><div class="a" style="left:1590px;top:349px;width:34px;height:33px;background:#303030;border-radius:0px;border-radius:5px 0 0 5px"></div><div class="a" style="left:1590px;top:393px;width:34px;height:33px;background:#303030;border-radius:0px;border-radius:5px 0 0 5px"></div><div class="a" style="left:1590px;top:428px;width:34px;height:33px;background:#303030;border-radius:0px;border-radius:5px 0 0 5px"></div><div class="a" style="left:1590px;top:462.5px;width:34px;height:33.5px;background:#303030;border-radius:0px;border-radius:5px 0 0 5px"></div><div class="a" style="left:1590px;top:498px;width:34px;height:33px;background:#303030;border-radius:0px;border-radius:5px 0 0 5px"></div><div class="a" style="left:1590px;top:533.5px;width:34px;height:32.5px;background:#303030;border-radius:0px;border-radius:5px 0 0 5px"></div><div class="a" style="left:1590px;top:577px;width:34px;height:33.5px;background:#303030;border-radius:0px;border-radius:5px 0 0 5px"></div><div class="a" style="left:1590px;top:621px;width:34px;height:33px;background:#303030;border-radius:0px;border-radius:5px 0 0 5px"></div><div class="a" style="left:1590px;top:656.4px;width:34px;height:32.60000000000002px;background:#474747;border-radius:0px;border-radius:5px 0 0 5px"></div><div class="a" style="left:1590px;top:690.5px;width:34px;height:32.5px;background:#303030;border-radius:0px;border-radius:5px 0 0 5px"></div><div class="a" style="left:1590px;top:726px;width:34px;height:33px;background:#303030;border-radius:0px;border-radius:5px 0 0 5px"></div><div class="a" style="left:1590px;top:761px;width:34px;height:33px;background:#303030;border-radius:0px;border-radius:5px 0 0 5px"></div><div class="a" style="left:1590px;top:796px;width:34px;height:33px;background:#303030;border-radius:0px;border-radius:5px 0 0 5px"></div><div class="a" style="left:1590px;top:831.3px;width:34px;height:32.700000000000045px;background:#303030;border-radius:0px;border-radius:5px 0 0 5px"></div><div class="a" style="left:1590px;top:875.3px;width:34px;height:32.0px;background:#303030;border-radius:0px;border-radius:5px 0 0 5px"></div><div class="a" style="left:1623px;top:338px;width:295px;height:598px;background:#424242;border-radius:0px;border-radius:0 0 6px 0"></div><svg class="a" style="left:1597px;top:355px;" width="20" height="20" viewBox="0 0 20 20"><path d="M5.5 2 V9" stroke="#ddd" stroke-width="1.5"/><path d="M3 11 H8 V15 C8 17 3 17 3 15Z" fill="#ddd"/><path d="M11.5 2 V5 C11.5 8 13 9 15 9 C17 9 18.5 8 18.5 5 V2 M15 9 V17.5" fill="none" stroke="#ddd" stroke-width="2.4" stroke-linecap="round"/></svg><svg class="a" style="left:1597px;top:399px;" width="20" height="20" viewBox="0 0 20 20"><rect x="2" y="6" width="16" height="12" rx="1" fill="#ddd"/><rect x="6" y="3" width="6" height="3" fill="#ddd"/><path d="M4 9 H13 M4 12 H13 M4 15 H13" stroke="#303030" stroke-width="1.3"/><circle cx="15.5" cy="10" r="1.2" fill="#303030"/><circle cx="15.5" cy="14" r="1.2" fill="#303030"/></svg><svg class="a" style="left:1597px;top:434px;" width="20" height="20" viewBox="0 0 20 20"><rect x="2" y="3" width="16" height="5" fill="#ddd"/><rect x="4" y="8" width="12" height="10" fill="#999"/><path d="M6 16 L10 11 L14 16Z" fill="#ddd"/></svg><svg class="a" style="left:1597px;top:469px;" width="20" height="20" viewBox="0 0 20 20"><rect x="7" y="2" width="11" height="11" fill="none" stroke="#ddd" stroke-width="1.4"/><path d="M8 12 L11 7 L13 10 L15 8 L17 12Z" fill="#ddd"/><path d="M5 5 V15 H15 M3 7 V17 H13" fill="none" stroke="#ddd" stroke-width="1.2"/></svg><svg class="a" style="left:1597px;top:504px;" width="20" height="20" viewBox="0 0 20 20"><path d="M7 3 C7 3 2 9 2 12 C2 15 4 17 7 17 C10 17 12 15 12 12 C12 9 7 3 7 3Z" fill="#ddd"/><circle cx="15" cy="5" r="2.5" fill="#ddd"/><circle cx="13" cy="14" r="4.5" fill="#303030" stroke="#ddd" stroke-width="1.4"/></svg><svg class="a" style="left:1597px;top:539px;" width="20" height="20" viewBox="0 0 20 20"><circle cx="10" cy="10" r="7.5" fill="#303030" stroke="#e06c74" stroke-width="1.6"/><path d="M4 8 C6 5 9 6 9 9 C9 12 6 12 7 16 L5 14 C3 12 3 10 4 8Z M11 4 C14 4 16 7 15 9 C13 9 12 12 14 14 C12 16 11 14 11 12 C11 10 9 8 11 4Z" fill="#e06c74"/><path d="M3 18 L17 3" stroke="#e06c74" stroke-width="1.4"/></svg><svg class="a" style="left:1597px;top:583px;" width="20" height="20" viewBox="0 0 20 20"><rect x="2" y="2" width="16" height="4" fill="none" stroke="#ddd" stroke-width="1.4"/><rect x="3" y="7" width="14" height="11" fill="none" stroke="#ddd" stroke-width="1.4"/><rect x="7.5" y="9.5" width="5" height="2" fill="#ddd"/></svg><svg class="a" style="left:1597px;top:627px;" width="20" height="20" viewBox="0 0 20 20"><rect x="6" y="6" width="9" height="9" fill="#e6954b"/><path d="M2 6 V2 H6 M15 2 H19 V6 M19 15 V19 H15 M6 19 H2 V15" fill="none" stroke="#e6954b" stroke-width="1.3"/></svg><svg class="a" style="left:1597px;top:662px;" width="20" height="20" viewBox="0 0 20 20"><path d="M2 17 L9 10 C8 6 10 2 15 2 L12 5.5 L14 8 L17.5 5 C17.5 10 14 12 10.5 11 L4 18.5Z" fill="#6a9be0" stroke="#6a9be0" stroke-width="1.2" stroke-linejoin="round"/></svg><svg class="a" style="left:1597px;top:696px;" width="20" height="20" viewBox="0 0 20 20"><path d="M4 4 L16 4 M4 4 L16 15 M4 4 V16" stroke="#6a9be0" stroke-width="1.4"/><circle cx="4" cy="4" r="3" fill="#6a9be0"/><circle cx="16" cy="4" r="2" fill="#6a9be0"/><circle cx="16" cy="15" r="2.5" fill="#6a9be0"/><circle cx="4" cy="16" r="1.8" fill="#6a9be0"/></svg><svg class="a" style="left:1597px;top:732px;" width="20" height="20" viewBox="0 0 20 20"><path d="M16 6 A8 8 0 1 0 17 13" fill="none" stroke="#6a9be0" stroke-width="1.6"/><circle cx="9" cy="10" r="3.5" fill="#6a9be0"/><circle cx="15.5" cy="4.5" r="2" fill="#6a9be0"/></svg><svg class="a" style="left:1597px;top:767px;" width="20" height="20" viewBox="0 0 20 20"><path d="M3 12 C3 6 10 2 17 3 C18 10 14 17 8 17 C5 17 3 15 3 12Z" fill="none" stroke="#6a9be0" stroke-width="1.6"/><circle cx="8" cy="12" r="3" fill="none" stroke="#6a9be0" stroke-width="1.6"/><circle cx="14" cy="6" r="1" fill="#6a9be0"/></svg><svg class="a" style="left:1597px;top:802px;" width="20" height="20" viewBox="0 0 20 20"><path d="M4 4 H16 L10 15Z" fill="none" stroke="#2bb5a0" stroke-width="1.5"/><rect x="2" y="2" width="4" height="4" fill="#303030" stroke="#2bb5a0" stroke-width="1.3"/><rect x="14" y="2" width="4" height="4" fill="#303030" stroke="#2bb5a0" stroke-width="1.3"/><rect x="8" y="14" width="4" height="4" fill="#303030" stroke="#2bb5a0" stroke-width="1.3"/></svg><svg class="a" style="left:1597px;top:837px;" width="20" height="20" viewBox="0 0 20 20"><circle cx="10" cy="10" r="8" fill="#e06c74"/><path d="M10 10 V18 A8 8 0 0 1 2 10Z" fill="#303030"/><path d="M10 10 H18 A8 8 0 0 0 10 2Z" fill="#ddd"/></svg><svg class="a" style="left:1597px;top:881px;" width="20" height="20" viewBox="0 0 20 20"><rect x="2" y="2" width="16" height="16" fill="#e06c74"/><path d="M2 2 H6 V6 H2Z M10 2 H14 V6 H10Z M6 6 H10 V10 H6Z M14 6 H18 V10 H14Z M2 10 H6 V14 H2Z M10 10 H14 V14 H10Z M6 14 H10 V18 H6Z M14 14 H18 V18 H14Z" fill="#303030"/></svg><svg class="a" style="left:1635px;top:351px;" width="20" height="20" viewBox="0 0 20 20"><rect x="5" y="5" width="10" height="10" fill="#ddd"/><path d="M2 5 V2 H5 M15 2 H18 V5 M18 15 V18 H15 M5 18 H2 V15" fill="none" stroke="#bbb" stroke-width="1.3"/></svg><div class="a t" style="left:1665px;top:349.4px;color:#e6e6e6;font-size:14px;">Plane</div><svg class="a" style="left:1715px;top:355px;" width="8" height="10" viewBox="0 0 8 10"><path d="M2 1 L6 5 L2 9Z" fill="#666"/></svg><svg class="a" style="left:1738px;top:350px;" width="20" height="20" viewBox="0 0 20 20"><path d="M2 5 C5 2 7 2 10 5 C13 8 15 8 18 5 M2 11 C5 8 7 8 10 11 C13 14 15 14 18 11 M2 17 C5 14 7 14 10 17 C13 20 15 20 18 17" fill="none" stroke="#ddd" stroke-width="1.4"/></svg><div class="a t" style="left:1768px;top:349.4px;color:#e6e6e6;font-size:14px;">Ocean</div><svg class="a" style="left:1887px;top:350px;" width="20" height="20" viewBox="0 0 20 20"><path d="M11 2 L18 9 L15 10 L11 14 L11 17 L3 9 L6 9 L10 5Z M7 13 L2 18" fill="none" stroke="#aaa" stroke-width="1.3" stroke-linejoin="round"/></svg><div class="a" style="left:1634px;top:394px;width:276px;height:23px;background:#282828;border-radius:4px;box-shadow:0 1px 0 rgba(0,0,0,0.25), inset 0 0 0 1px rgba(255,255,255,0.05)"></div><div class="a t" style="left:1643px;top:394.9px;color:#e6e6e6;font-size:14px;">Add Modifier</div><svg class="a" style="left:1894px;top:402.5px;" width="12" height="8" viewBox="0 0 12 8"><path d="M2.0 2.0 L6 6.0 L10.0 2.0" fill="none" stroke="#d0d0d0" stroke-width="1.4" stroke-linecap="round" stroke-linejoin="round"/></svg><div class="a" style="left:1628px;top:434px;width:287px;height:460px;background:#333333;border-radius:6px;border:1px solid #5580c6"></div><div class="a" style="left:1629px;top:462px;width:285px;height:1px;background:#262626;border-radius:0px;"></div><svg class="a" style="left:1636px;top:442px;" width="10" height="10" viewBox="0 0 10 10"><path d="M1 2 H9 L5 8Z" fill="#999"/></svg><svg class="a" style="left:1655px;top:438px;" width="20" height="20" viewBox="0 0 20 20"><path d="M2 5 C5 2 7 2 10 5 C13 8 15 8 18 5 M2 11 C5 8 7 8 10 11 C13 14 15 14 18 11 M2 17 C5 14 7 14 10 17 C13 20 15 20 18 17" fill="none" stroke="#ddd" stroke-width="1.4"/></svg><div class="a" style="left:1688px;top:437px;width:164px;height:24px;background:#1d1d1d;border-radius:5px;"></div><div class="a t" style="left:1697px;top:437.4px;color:#e6e6e6;font-size:14px;">Ocean</div><div class="a" style="left:1753px;top:437px;width:74px;height:24px;background:#5680c2;border-radius:0px;"></div><div class="a" style="left:1777px;top:437px;width:1px;height:24px;background:#4a6fa8;border-radius:0px;"></div><div class="a" style="left:1802px;top:437px;width:1px;height:24px;background:#4a6fa8;border-radius:0px;"></div><svg class="a" style="left:1755px;top:439px;" width="20" height="20" viewBox="0 0 20 20"><rect x="3" y="3" width="14" height="14" fill="none" stroke="#fff" stroke-width="1.2"/><rect x="1.5" y="1.5" width="4" height="4" fill="#5680c2" stroke="#fff" stroke-width="1.2"/><rect x="13" y="1" width="6" height="6" fill="#fff"/><rect x="1.5" y="14.5" width="4" height="4" fill="#5680c2" stroke="#fff" stroke-width="1.2"/><rect x="14.5" y="14.5" width="4" height="4" fill="#5680c2" stroke="#fff" stroke-width="1.2"/></svg><svg class="a" style="left:1780px;top:439px;" width="20" height="20" viewBox="0 0 20 20"><rect x="2" y="3" width="16" height="11" fill="none" stroke="#fff" stroke-width="1.6"/><path d="M10 14 V17 M6 18 H14" stroke="#fff" stroke-width="1.6"/></svg><svg class="a" style="left:1805px;top:439px;" width="20" height="20" viewBox="0 0 20 20"><path d="M1 5 H5 L6.5 2.5 H13.5 L15 5 H19 V17 H1Z" fill="#fff"/><circle cx="10" cy="10.5" r="4.2" fill="#5680c2"/><circle cx="10" cy="10.5" r="2.6" fill="#fff"/></svg><svg class="a" style="left:1833px;top:445px;" width="12" height="8" viewBox="0 0 12 8"><path d="M1.2 1.6 L6 6.4 L10.8 1.6" fill="none" stroke="#ddd" stroke-width="1.4" stroke-linecap="round" stroke-linejoin="round"/></svg><svg class="a" style="left:1858px;top:441px;" width="14" height="14" viewBox="0 0 14 14"><path d="M2 2 L12 12 M12 2 L2 12" stroke="#ddd" stroke-width="1.5"/></svg><svg class="a" style="left:1891px;top:444px;" width="16" height="8" viewBox="0 0 16 8"><rect x="0" y="0" width="2" height="2" fill="#bbb"/><rect x="0" y="4" width="2" height="2" fill="#bbb"/><rect x="4" y="0" width="2" height="2" fill="#bbb"/><rect x="4" y="4" width="2" height="2" fill="#bbb"/><rect x="8" y="0" width="2" height="2" fill="#bbb"/><rect x="8" y="4" width="2" height="2" fill="#bbb"/><rect x="12" y="0" width="2" height="2" fill="#bbb"/><rect x="12" y="4" width="2" height="2" fill="#bbb"/></svg><div class="a t" style="right:192px;top:475.0px;color:#e6e6e6;font-size:14px;text-align:right;">Geometry</div><div class="a" style="left:1741px;top:474px;width:139px;height:24px;background:#282828;border-radius:4px;box-shadow:0 1px 0 rgba(0,0,0,0.25), inset 0 0 0 1px rgba(255,255,255,0.05)"></div><div class="a t" style="left:1750px;top:475.4px;color:#e6e6e6;font-size:14px;">Generate</div><svg class="a" style="left:1863px;top:483.0px;" width="12" height="8" viewBox="0 0 12 8"><path d="M2.0 2.0 L6 6.0 L10.0 2.0" fill="none" stroke="#d0d0d0" stroke-width="1.4" stroke-linecap="round" stroke-linejoin="round"/></svg><div class="a" style="left:1890px;top:483.0px;width:5px;height:5px;background:#ccc;border-radius:3px;"></div><div class="a" style="left:1741px;top:501px;width:139px;height:23px;background:#545454;border-radius:0px;border-radius:4px 4px 0px 0px"></div><div class="a t" style="left:1660.5px;width:300px;text-align:center;top:501.9px;color:#e6e6e6;font-size:14px;">1</div><div class="a" style="left:1741px;top:523px;width:139px;height:1px;background:#4a4a4a;border-radius:0px;"></div><div class="a t" style="right:192px;top:501.9px;color:#e6e6e6;font-size:14px;text-align:right;">Repeat X</div><div class="a" style="left:1741px;top:524px;width:139px;height:25px;background:#545454;border-radius:0px;border-radius:0px 0px 4px 4px"></div><div class="a t" style="left:1660.5px;width:300px;text-align:center;top:525.9px;color:#e6e6e6;font-size:14px;">1</div><div class="a t" style="right:192px;top:525.9px;color:#e6e6e6;font-size:14px;text-align:right;">Y</div><div class="a" style="left:1741px;top:553px;width:139px;height:24px;background:#545454;border-radius:0px;border-radius:4px 4px 0px 0px"></div><div class="a t" style="left:1660.5px;width:300px;text-align:center;top:554.4px;color:#e6e6e6;font-size:14px;">15</div><div class="a" style="left:1741px;top:576px;width:139px;height:1px;background:#4a4a4a;border-radius:0px;"></div><div class="a t" style="left:1638px;top:554.4px;color:#e6e6e6;font-size:14px;">Resolution Vi</div><div class="a" style="left:1741px;top:577px;width:139px;height:24px;background:#545454;border-radius:0px;border-radius:0px 0px 4px 4px"></div><div class="a t" style="left:1660.5px;width:300px;text-align:center;top:578.4px;color:#e6e6e6;font-size:14px;">7</div><div class="a t" style="right:192px;top:578.4px;color:#e6e6e6;font-size:14px;text-align:right;">Render</div><div class="a" style="left:1741px;top:605px;width:139px;height:23px;background:#545454;border-radius:0px;border-radius:4px 4px 4px 4px"></div><div class="a t" style="left:1660.5px;width:300px;text-align:center;top:605.9px;color:#e6e6e6;font-size:14px;">1.00</div><div class="a t" style="right:192px;top:605.9px;color:#e6e6e6;font-size:14px;text-align:right;">Time</div><div class="a" style="left:1741px;top:632px;width:139px;height:23px;background:#545454;border-radius:0px;border-radius:4px 4px 4px 4px"></div><div class="a t" style="left:1660.5px;width:300px;text-align:center;top:632.9px;color:#e6e6e6;font-size:14px;">200 m</div><div class="a t" style="right:192px;top:632.9px;color:#e6e6e6;font-size:14px;text-align:right;">Depth</div><div class="a" style="left:1741px;top:659px;width:139px;height:23px;background:#545454;border-radius:0px;border-radius:4px 4px 4px 4px"></div><div class="a t" style="left:1660.5px;width:300px;text-align:center;top:659.9px;color:#e6e6e6;font-size:14px;">1.00</div><div class="a t" style="right:192px;top:659.9px;color:#e6e6e6;font-size:14px;text-align:right;">Size</div><div class="a" style="left:1741px;top:686px;width:139px;height:23px;background:#545454;border-radius:0px;border-radius:4px 4px 4px 4px"></div><div class="a t" style="left:1660.5px;width:300px;text-align:center;top:686.9px;color:#e6e6e6;font-size:14px;">50</div><div class="a t" style="right:192px;top:686.9px;color:#e6e6e6;font-size:14px;text-align:right;">Spatial Size</div><div class="a" style="left:1741px;top:713px;width:139px;height:24px;background:#545454;border-radius:0px;border-radius:4px 4px 4px 4px"></div><div class="a t" style="left:1660.5px;width:300px;text-align:center;top:714.4px;color:#e6e6e6;font-size:14px;">700</div><div class="a t" style="right:192px;top:714.4px;color:#e6e6e6;font-size:14px;text-align:right;">Random Seed</div><div class="a" style="left:1890px;top:614.0px;width:5px;height:5px;background:#ccc;border-radius:3px;"></div><div class="a" style="left:1890px;top:668.0px;width:5px;height:5px;background:#ccc;border-radius:3px;"></div><div class="a" style="left:1741px;top:743px;width:17px;height:17px;background:#545454;border-radius:3px;"></div><div class="a t" style="left:1763px;top:740.4px;color:#e6e6e6;font-size:14px;">Generate Norm...</div><svg class="a" style="left:1654px;top:784px;" width="10" height="10" viewBox="0 0 10 10"><path d="M2 1 V9 L8 5Z" fill="#aaa"/></svg><div class="a t" style="left:1672px;top:778.4px;color:#e6e6e6;font-size:14px;">Waves</div><svg class="a" style="left:1654px;top:814px;" width="10" height="10" viewBox="0 0 10 10"><path d="M2 1 V9 L8 5Z" fill="#aaa"/></svg><div class="a t" style="left:1692px;top:808.4px;color:#e6e6e6;font-size:14px;">Foam</div><svg class="a" style="left:1654px;top:844px;" width="10" height="10" viewBox="0 0 10 10"><path d="M2 1 V9 L8 5Z" fill="#aaa"/></svg><div class="a t" style="left:1672px;top:838.4px;color:#e6e6e6;font-size:14px;">Spectrum</div><svg class="a" style="left:1654px;top:874px;" width="10" height="10" viewBox="0 0 10 10"><path d="M2 1 V9 L8 5Z" fill="#aaa"/></svg><div class="a t" style="left:1672px;top:868.4px;color:#e6e6e6;font-size:14px;">Bake</div><div class="a" style="left:1671px;top:811px;width:17px;height:17px;background:#545454;border-radius:3px;"></div><div class="a" style="left:1px;top:869px;width:1584px;height:72px;background:#2b2b2b;border-radius:0px;border-radius:6px 6px 0 0"></div><div class="a" style="left:1px;top:869px;width:1584px;height:31px;background:#333333;border-radius:0px;border-radius:6px 6px 0 0"></div><div class="a" style="left:10px;top:874px;width:39px;height:23px;background:#282828;border-radius:4px;box-shadow:0 1px 0 rgba(0,0,0,0.25), inset 0 0 0 1px rgba(255,255,255,0.05)"></div><svg class="a" style="left:35px;top:882.5px;" width="12" height="8" viewBox="0 0 12 8"><path d="M2.0 2.0 L6 6.0 L10.0 2.0" fill="none" stroke="#d0d0d0" stroke-width="1.4" stroke-linecap="round" stroke-linejoin="round"/></svg><svg class="a" style="left:14px;top:875px;" width="22" height="22" viewBox="0 0 22 22"><circle cx="11" cy="11" r="8" fill="#e6e6e6"/><path d="M13 5 L8 11 L13 17" fill="none" stroke="#282828" stroke-width="2"/></svg><div class="a" style="left:57px;top:874px;width:161px;height:23px;background:#282828;border-radius:4px;"></div><div class="a" style="left:143px;top:874px;width:1px;height:23px;background:#3d3d3d;border-radius:0px;"></div><div class="a t" style="left:66px;top:875.4px;color:#e6e6e6;font-size:14px;">Playback</div><svg class="a" style="left:129px;top:882px;" width="12" height="8" viewBox="0 0 12 8"><path d="M2.0 2.0 L6 6.0 L10.0 2.0" fill="none" stroke="#d0d0d0" stroke-width="1.4" stroke-linecap="round" stroke-linejoin="round"/></svg><div class="a t" style="left:153px;top:875.4px;color:#e6e6e6;font-size:14px;">Keying</div><svg class="a" style="left:204px;top:882px;" width="12" height="8" viewBox="0 0 12 8"><path d="M2.0 2.0 L6 6.0 L10.0 2.0" fill="none" stroke="#d0d0d0" stroke-width="1.4" stroke-linecap="round" stroke-linejoin="round"/></svg><div class="a t" style="left:230px;top:875.4px;color:#e6e6e6;font-size:14px;">View</div><div class="a t" style="left:280px;top:875.4px;color:#e6e6e6;font-size:14px;">Marker</div><div class="a" style="left:678px;top:874px;width:49px;height:23px;background:#2e2e2e;border-radius:4px;"></div><div class="a" style="left:678px;top:874px;width:24px;height:23px;background:#545454;border-radius:0px;border-radius:4px 0 0 4px"></div><svg class="a" style="left:678px;top:874px;" width="24" height="23" viewBox="0 0 24 23"><circle cx="11.5" cy="11.5" r="5" fill="#e6e6e6"/></svg><svg class="a" style="left:708px;top:882px;" width="12" height="8" viewBox="0 0 12 8"><path d="M2.8 2.4 L6 5.6 L9.2 2.4" fill="none" stroke="#777" stroke-width="1.1" stroke-linecap="round" stroke-linejoin="round"/></svg><div class="a" style="left:734px;top:874px;width:148px;height:23px;background:#545454;border-radius:4px;"></div><div class="a" style="left:758.7px;top:874px;width:1px;height:23px;background:#3d3d3d;border-radius:0px;"></div><div class="a" style="left:783.4px;top:874px;width:1px;height:23px;background:#3d3d3d;border-radius:0px;"></div><div class="a" style="left:808.1px;top:874px;width:1px;height:23px;background:#3d3d3d;border-radius:0px;"></div><div class="a" style="left:832.8px;top:874px;width:1px;height:23px;background:#3d3d3d;border-radius:0px;"></div><div class="a" style="left:857.5px;top:874px;width:1px;height:23px;background:#3d3d3d;border-radius:0px;"></div><svg class="a" style="left:734.0px;top:874px;" width="24" height="23" viewBox="0 0 24 23"><path d="M5 6 V17 M17 6 L8 11.5 L17 17Z" stroke="#e6e6e6" stroke-width="2" fill="#e6e6e6"/></svg><svg class="a" style="left:758.7px;top:874px;" width="24" height="23" viewBox="0 0 24 23"><path d="M8 6 L13 11.5 L8 17 L3 11.5Z M20 6 V17 L14 11.5Z" fill="#e6e6e6"/></svg><svg class="a" style="left:783.4px;top:874px;" width="24" height="23" viewBox="0 0 24 23"><path d="M17 5 V18 L7 11.5Z" fill="#e6e6e6"/></svg><svg class="a" style="left:808.1px;top:874px;" width="24" height="23" viewBox="0 0 24 23"><path d="M7 5 V18 L17 11.5Z" fill="#e6e6e6"/></svg><svg class="a" style="left:832.8px;top:874px;" width="24" height="23" viewBox="0 0 24 23"><path d="M4 6 V17 L10 11.5Z M16 6 L21 11.5 L16 17 L11 11.5Z" fill="#e6e6e6"/></svg><svg class="a" style="left:857.5px;top:874px;" width="24" height="23" viewBox="0 0 24 23"><path d="M19 6 V17 M7 6 L16 11.5 L7 17Z" stroke="#e6e6e6" stroke-width="2" fill="#e6e6e6"/></svg><div class="a" style="left:1235px;top:874px;width:92px;height:23px;background:#545454;border-radius:5px;"></div><div class="a t" style="left:1129px;width:300px;text-align:center;top:875.4px;color:#e6e6e6;font-size:14px;">1</div><div class="a" style="left:1334px;top:874px;width:242px;height:23px;background:#545454;border-radius:5px;"></div><div class="a" style="left:1357px;top:874px;width:1px;height:23px;background:#454545;border-radius:0px;"></div><div class="a" style="left:1469px;top:874px;width:1px;height:23px;background:#454545;border-radius:0px;"></div><svg class="a" style="left:1336px;top:875px;" width="22" height="22" viewBox="0 0 22 22"><circle cx="10" cy="12" r="6.5" fill="none" stroke="#ddd" stroke-width="1.4"/><path d="M10 8 V12 H13 M8 3.5 H12 M10 3.5 V5.5 M15 5 L17 3" fill="none" stroke="#ddd" stroke-width="1.3"/></svg><div class="a t" style="left:1377px;top:875.4px;color:#e6e6e6;font-size:14px;">Start</div><div class="a t" style="right:470px;top:875.4px;color:#e6e6e6;font-size:14px;text-align:right;">1</div><div class="a t" style="left:1489px;top:875.4px;color:#e6e6e6;font-size:14px;">End</div><div class="a t" style="right:363px;top:875.4px;color:#e6e6e6;font-size:14px;text-align:right;">250</div><div class="a" style="left:43px;top:904px;width:30px;height:19px;background:#5680c2;border-radius:4px;"></div><div class="a t" style="left:-92px;width:300px;text-align:center;top:905.4px;color:#fff;font-size:14px;">1</div><div class="a t" style="left:-38.94500000000001px;width:300px;text-align:center;top:905.4px;color:#d8d8d8;font-size:14px;">10</div><div class="a t" style="left:20.004999999999995px;width:300px;text-align:center;top:905.4px;color:#d8d8d8;font-size:14px;">20</div><div class="a t" style="left:78.95499999999998px;width:300px;text-align:center;top:905.4px;color:#d8d8d8;font-size:14px;">30</div><div class="a t" style="left:137.90499999999997px;width:300px;text-align:center;top:905.4px;color:#d8d8d8;font-size:14px;">40</div><div class="a t" style="left:196.85499999999996px;width:300px;text-align:center;top:905.4px;color:#d8d8d8;font-size:14px;">50</div><div class="a t" style="left:255.80499999999995px;width:300px;text-align:center;top:905.4px;color:#d8d8d8;font-size:14px;">60</div><div class="a t" style="left:314.755px;width:300px;text-align:center;top:905.4px;color:#d8d8d8;font-size:14px;">70</div><div class="a t" style="left:373.7049999999999px;width:300px;text-align:center;top:905.4px;color:#d8d8d8;font-size:14px;">80</div><div class="a t" style="left:432.655px;width:300px;text-align:center;top:905.4px;color:#d8d8d8;font-size:14px;">90</div><div class="a t" style="left:491.6049999999999px;width:300px;text-align:center;top:905.4px;color:#d8d8d8;font-size:14px;">100</div><div class="a t" style="left:550.555px;width:300px;text-align:center;top:905.4px;color:#d8d8d8;font-size:14px;">110</div><div class="a t" style="left:609.505px;width:300px;text-align:center;top:905.4px;color:#d8d8d8;font-size:14px;">120</div><div class="a t" style="left:668.4549999999999px;width:300px;text-align:center;top:905.4px;color:#d8d8d8;font-size:14px;">130</div><div class="a t" style="left:727.405px;width:300px;text-align:center;top:905.4px;color:#d8d8d8;font-size:14px;">140</div><div class="a t" style="left:786.3549999999999px;width:300px;text-align:center;top:905.4px;color:#d8d8d8;font-size:14px;">150</div><div class="a t" style="left:845.305px;width:300px;text-align:center;top:905.4px;color:#d8d8d8;font-size:14px;">160</div><div class="a t" style="left:904.2549999999999px;width:300px;text-align:center;top:905.4px;color:#d8d8d8;font-size:14px;">170</div><div class="a t" style="left:963.2049999999999px;width:300px;text-align:center;top:905.4px;color:#d8d8d8;font-size:14px;">180</div><div class="a t" style="left:1022.155px;width:300px;text-align:center;top:905.4px;color:#d8d8d8;font-size:14px;">190</div><div class="a t" style="left:1081.105px;width:300px;text-align:center;top:905.4px;color:#d8d8d8;font-size:14px;">200</div><div class="a t" style="left:1140.0549999999998px;width:300px;text-align:center;top:905.4px;color:#d8d8d8;font-size:14px;">210</div><div class="a t" style="left:1199.0049999999999px;width:300px;text-align:center;top:905.4px;color:#d8d8d8;font-size:14px;">220</div><div class="a t" style="left:1257.955px;width:300px;text-align:center;top:905.4px;color:#d8d8d8;font-size:14px;">230</div><div class="a t" style="left:1316.905px;width:300px;text-align:center;top:905.4px;color:#d8d8d8;font-size:14px;">240</div><div class="a t" style="left:1375.8549999999998px;width:300px;text-align:center;top:905.4px;color:#d8d8d8;font-size:14px;">250</div><div class="a" style="left:11px;top:924px;width:1565px;height:12px;background:#646464;border-radius:6px;"></div><div class="a" style="left:13px;top:927px;width:7px;height:7px;background:#3d3d3d;border-radius:4px;"></div><div class="a" style="left:1566px;top:927px;width:7px;height:7px;background:#3d3d3d;border-radius:4px;"></div><svg class="a" style="left:1576px;top:922px;" width="8" height="12" viewBox="0 0 8 12"><path d="M6 1 L2 6 L6 11" fill="none" stroke="#999" stroke-width="1.3"/></svg><svg class="a" style="left:2px;top:922px;" width="8" height="12" viewBox="0 0 8 12"><path d="M2 1 L6 6 L2 11" fill="none" stroke="#999" stroke-width="1.3"/></svg></body></html>
